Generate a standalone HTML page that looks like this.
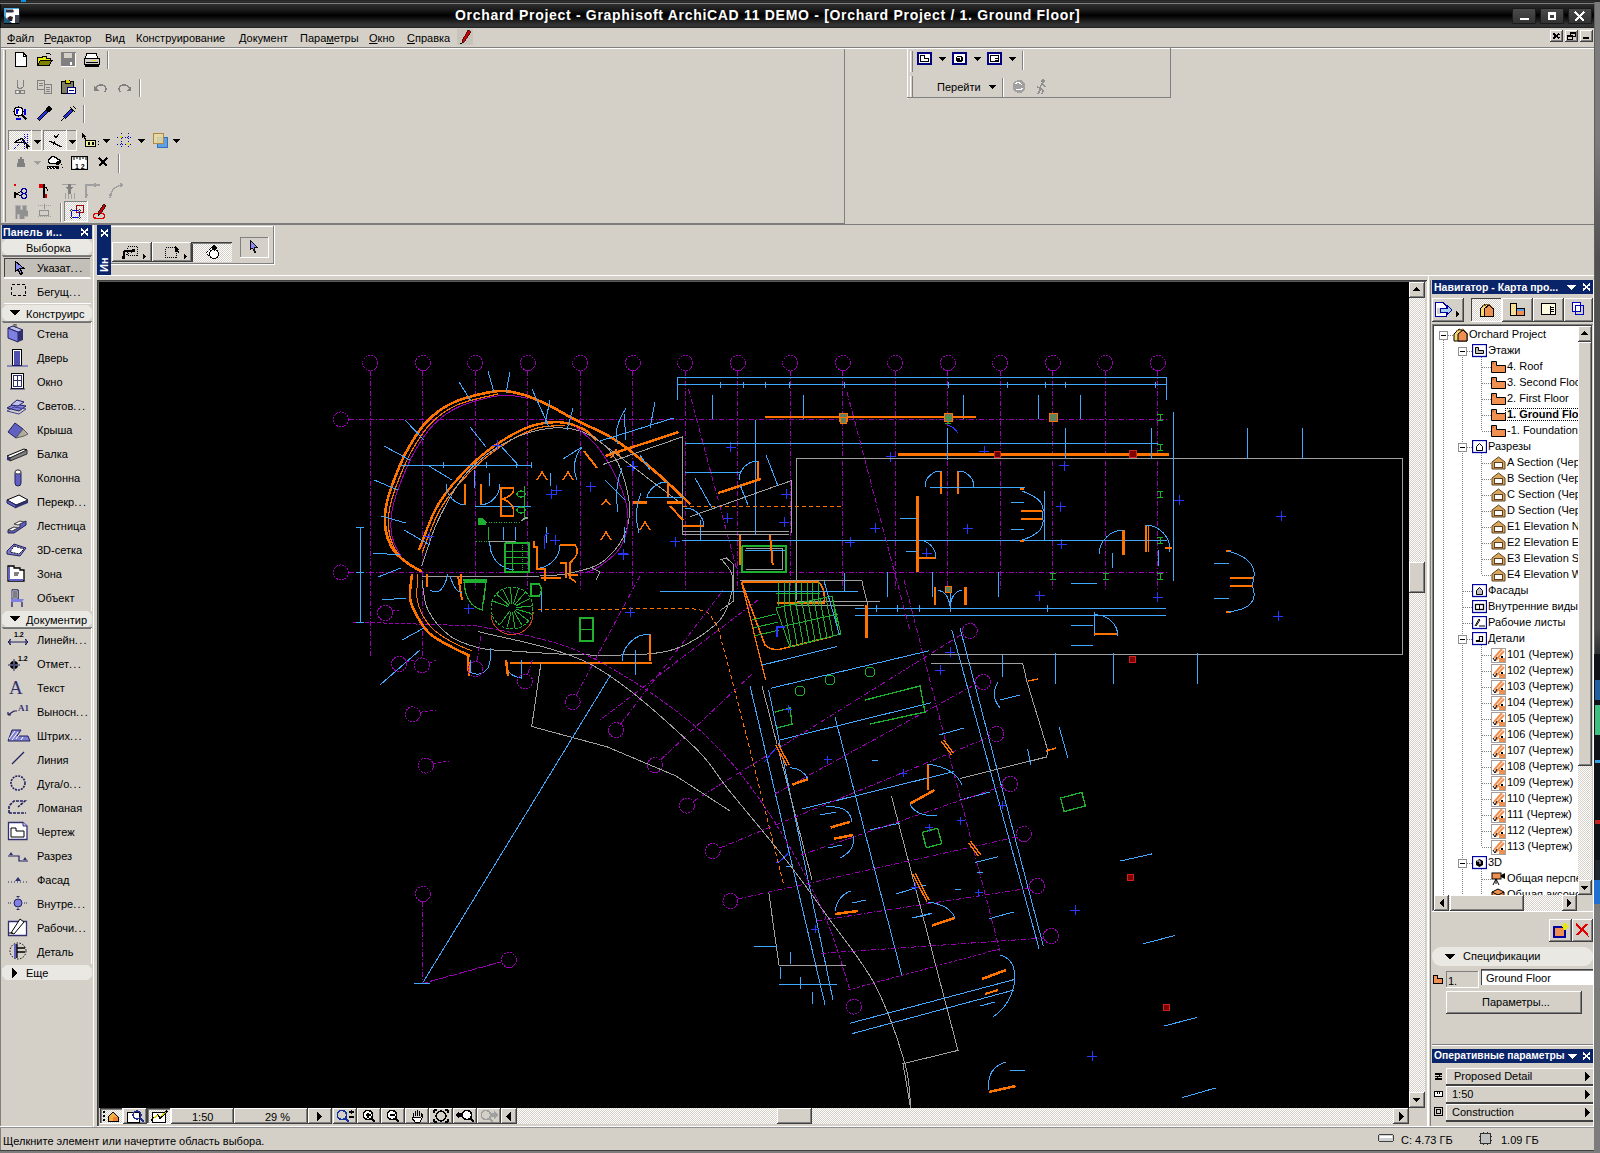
<!DOCTYPE html>
<html><head><meta charset="utf-8">
<style>
*{box-sizing:border-box;margin:0;padding:0}
html,body{width:1600px;height:1153px;overflow:hidden;background:#d4d0c8;font-family:"Liberation Sans",sans-serif;font-size:11px;color:#000;position:relative}
.a{position:absolute}
.t{position:absolute;white-space:nowrap;line-height:1}
u{text-decoration:underline;text-underline-offset:1px}
</style></head><body>
<div class="a" style="left:0px;top:0px;width:1600px;height:4px;background:#262626;"></div>
<div class="a" style="left:0px;top:1px;width:1594px;height:1px;background:#333;"></div>
<div class="a" style="left:0px;top:3px;width:1594px;height:1px;background:#7e8080;"></div>
<div class="a" style="left:0px;top:4px;width:1594px;height:24px;background:linear-gradient(#2e2e2e 0%,#1a1a1a 25%,#000 47%,#111 60%,#222 72%,#333 85%,#333 94%,#1a1a1a 100%);"></div>
<div class="t" id="title" style="left:455px;top:8px;font-size:14px;letter-spacing:0.7px;font-weight:bold;color:#fff">Orchard Project - Graphisoft ArchiCAD 11 DEMO - [Orchard Project / 1. Ground Floor]</div>
<svg class="a" style="left:4px;top:8px;" width="16" height="16" viewBox="0 0 16 16"><rect x="0" y="0" width="16" height="16" fill="#fff"/><path d="M0 0H16L15 1H2V12L10 16H0Z" fill="#4aa8e0"/><path d="M0 8L9 16H0Z" fill="#1a5a80"/><path d="M2 1.5H9L10 3.5L8.5 4.5H2Z" fill="#303040"/><path d="M3 10L6 8L9 9L8 13L5 13Z" fill="#302028"/><rect x="11" y="7" width="4" height="9" fill="#404a54"/><rect x="0" y="15" width="16" height="1" fill="#000"/><rect x="15" y="0" width="1" height="16" fill="#222"/></svg>
<div class="a" style="left:21px;top:0px;width:5px;height:2px;background:#1090e0;"></div>
<div class="a" style="left:1512px;top:8px;width:24px;height:16px;background:linear-gradient(#4a4a4a,#333);border:1px solid #1a1a1a;border-radius:1px"></div>
<div class="a" style="left:1540px;top:8px;width:24px;height:16px;background:linear-gradient(#4a4a4a,#333);border:1px solid #1a1a1a;border-radius:1px"></div>
<div class="a" style="left:1568px;top:8px;width:24px;height:16px;background:linear-gradient(#4a4a4a,#333);border:1px solid #1a1a1a;border-radius:1px"></div>
<div class="a" style="left:1520px;top:18px;width:9px;height:2px;background:#fff;"></div>
<div class="a" style="left:1548px;top:12px;width:8px;height:8px;background:transparent;border:2px solid #fff;border-top-width:3px"></div>
<svg class="a" style="left:1574px;top:11px;" width="12" height="11" viewBox="0 0 12 11" shape-rendering="crispEdges"><path d="M1 1L10 10M10 1L1 10" stroke="#fff" stroke-width="2.4"/></svg>
<div class="a" style="left:1594px;top:2px;width:6px;height:1151px;background:#7c7c7c;"></div>
<div class="a" style="left:1594px;top:140px;width:6px;height:514px;background:linear-gradient(#7c7c7c 0%,#505050 23%,#4e4e4e 95%,#303030 100%);"></div>
<div class="a" style="left:1594px;top:2px;width:1px;height:652px;background:#5e5e5e;"></div>
<div class="a" style="left:0px;top:1150px;width:1594px;height:1px;background:#404040;"></div>
<div class="a" style="left:0px;top:1151px;width:1600px;height:2px;background:#7c7c7c;"></div>
<div class="a" style="left:0px;top:4px;width:1px;height:24px;background:#0a0a0a;"></div>
<div class="a" style="left:0px;top:28px;width:1px;height:1122px;background:#808080;"></div>
<div class="a" style="left:1px;top:28px;width:1593px;height:19px;background:#d4d0c8;"></div>
<div class="t menu" style="left:7px;top:33px;font-size:11px"><u>Ф</u>айл</div>
<div class="t menu" style="left:44px;top:33px;font-size:11px"><u>Р</u>едактор</div>
<div class="t menu" style="left:105px;top:33px;font-size:11px">Вид</div>
<div class="t menu" style="left:136px;top:33px;font-size:11px">Конструирование</div>
<div class="t menu" style="left:239px;top:33px;font-size:11px">Документ</div>
<div class="t menu" style="left:300px;top:33px;font-size:11px">Пара<u>м</u>етры</div>
<div class="t menu" style="left:369px;top:33px;font-size:11px"><u>О</u>кно</div>
<div class="t menu" style="left:407px;top:33px;font-size:11px"><u>С</u>правка</div>
<div class="a" style="left:457px;top:29px;width:16px;height:16px;background:#c8c4bc;"></div>
<svg class="a" style="left:458px;top:30px;" width="14" height="14" viewBox="0 0 14 14" shape-rendering="crispEdges"><path d="M10 0 L13 2 L6 12 L4 13 L4 11 Z" fill="#d00000" stroke="#300" stroke-width="0.8"/><path d="M4 13 L2 14" stroke="#000"/></svg>
<div class="a" style="left:1550px;top:30px;width:13px;height:12px;background:#d4d0c8;"></div>
<div class="a" style="left:1550px;top:30px;width:13px;height:1px;background:#fff;"></div>
<div class="a" style="left:1550px;top:30px;width:1px;height:12px;background:#fff;"></div>
<div class="a" style="left:1550px;top:41px;width:13px;height:1px;background:#404040;"></div>
<div class="a" style="left:1562px;top:30px;width:1px;height:12px;background:#404040;"></div>
<div class="a" style="left:1551px;top:40px;width:11px;height:1px;background:#808080;"></div>
<div class="a" style="left:1561px;top:31px;width:1px;height:10px;background:#808080;"></div>
<div class="a" style="left:1565px;top:30px;width:13px;height:12px;background:#d4d0c8;"></div>
<div class="a" style="left:1565px;top:30px;width:13px;height:1px;background:#fff;"></div>
<div class="a" style="left:1565px;top:30px;width:1px;height:12px;background:#fff;"></div>
<div class="a" style="left:1565px;top:41px;width:13px;height:1px;background:#404040;"></div>
<div class="a" style="left:1577px;top:30px;width:1px;height:12px;background:#404040;"></div>
<div class="a" style="left:1566px;top:40px;width:11px;height:1px;background:#808080;"></div>
<div class="a" style="left:1576px;top:31px;width:1px;height:10px;background:#808080;"></div>
<div class="a" style="left:1580px;top:30px;width:13px;height:12px;background:#d4d0c8;"></div>
<div class="a" style="left:1580px;top:30px;width:13px;height:1px;background:#fff;"></div>
<div class="a" style="left:1580px;top:30px;width:1px;height:12px;background:#fff;"></div>
<div class="a" style="left:1580px;top:41px;width:13px;height:1px;background:#404040;"></div>
<div class="a" style="left:1592px;top:30px;width:1px;height:12px;background:#404040;"></div>
<div class="a" style="left:1581px;top:40px;width:11px;height:1px;background:#808080;"></div>
<div class="a" style="left:1591px;top:31px;width:1px;height:10px;background:#808080;"></div>
<svg class="a" style="left:1553px;top:33px;" width="7" height="6" viewBox="0 0 7 6" shape-rendering="crispEdges"><path d="M0.5 0.5L6.5 5.5M6.5 0.5L0.5 5.5" stroke="#000" stroke-width="1.8"/></svg>
<svg class="a" style="left:1567px;top:32px;" width="9" height="8" viewBox="0 0 9 8" shape-rendering="crispEdges"><rect x="3.5" y="0.5" width="5" height="4" fill="none" stroke="#000"/><rect x="3.5" y="0.5" width="5" height="1.5" fill="#000"/><rect x="0.5" y="3.5" width="5" height="4" fill="#d4d0c8" stroke="#000"/><rect x="0.5" y="3.5" width="5" height="1.5" fill="#000"/></svg>
<div class="a" style="left:1583px;top:37px;width:6px;height:2px;background:#000;"></div>
<div class="a" style="left:1px;top:47px;width:1593px;height:1px;background:#808080;"></div>
<div class="a" style="left:1px;top:48px;width:1593px;height:1px;background:#fff;"></div>
<div class="a" style="left:844px;top:49px;width:1px;height:175px;background:#808080;"></div>
<div class="a" style="left:3px;top:50px;width:1px;height:172px;background:#fff;"></div>
<div class="a" style="left:5px;top:50px;width:1px;height:172px;background:#808080;"></div>
<svg class="a" style="left:15px;top:52px;" width="12" height="15" viewBox="0 0 12 15" shape-rendering="crispEdges"><path d="M0.5 0.5H8L11.5 4V14.5H0.5Z" fill="#fff" stroke="#000"/><path d="M8 0.5V4H11.5" fill="none" stroke="#000"/></svg>
<svg class="a" style="left:37px;top:52px;" width="16" height="15" viewBox="0 0 16 15" shape-rendering="crispEdges"><path d="M0.5 5.5H5L6 4H9V6H14L11 13.5H0.5Z" fill="#e8e800" stroke="#000"/><path d="M0.5 13.5L3.5 8H15.5L12 13.5Z" fill="#808000" stroke="#000"/><path d="M9 2 Q12 0 14 3" stroke="#000" fill="none"/></svg>
<svg class="a" style="left:61px;top:52px;" width="15" height="15" viewBox="0 0 15 15" shape-rendering="crispEdges"><rect x="0" y="0" width="15" height="15" fill="#808080"/><rect x="3" y="1" width="8" height="5" fill="#d4d0c8"/><rect x="9" y="10" width="2" height="3" fill="#fff"/><rect x="14" y="1" width="1" height="14" fill="#fff"/><rect x="0" y="14" width="15" height="1" fill="#fff"/></svg>
<svg class="a" style="left:84px;top:53px;" width="16" height="14" viewBox="0 0 16 14" shape-rendering="crispEdges"><path d="M3 0.5H12L14 5H1Z" fill="#fff" stroke="#000"/><rect x="0.5" y="5.5" width="15" height="6" fill="#d4d0c8" stroke="#000"/><rect x="2" y="9" width="12" height="1" fill="#000"/><rect x="9" y="7" width="3" height="1" fill="#e0e000"/><rect x="1" y="12" width="14" height="2" fill="#000"/></svg>
<div class="a" style="left:107px;top:51px;width:1px;height:18px;background:#808080;"></div>
<div class="a" style="left:108px;top:51px;width:1px;height:18px;background:#fff;"></div>
<svg class="a" style="left:15px;top:80px;" width="10" height="15" viewBox="0 0 10 15" shape-rendering="crispEdges"><path d="M2 0V7L5 9L8 7V0" stroke="#808080" fill="none"/><circle cx="2.5" cy="12" r="2" stroke="#808080" fill="none"/><circle cx="7.5" cy="12" r="2" stroke="#808080" fill="none"/><circle cx="2.5" cy="12" r="1" fill="#fff"/></svg>
<svg class="a" style="left:37px;top:80px;" width="16" height="14" viewBox="0 0 16 14" shape-rendering="crispEdges"><rect x="0.5" y="0.5" width="7" height="9" fill="#d4d0c8" stroke="#808080"/><rect x="7.5" y="4.5" width="7" height="9" fill="#d4d0c8" stroke="#808080"/><path d="M2 3H6M2 5H6M9 7H13M9 9H13M9 11H13" stroke="#808080"/></svg>
<svg class="a" style="left:61px;top:80px;" width="16" height="15" viewBox="0 0 16 15" shape-rendering="crispEdges"><rect x="0.5" y="1.5" width="12" height="12" fill="#808060" stroke="#000"/><path d="M4 1L6.5 -1L9 1V3H4Z" fill="#e0d000" stroke="#000"/><rect x="6.5" y="7.5" width="8" height="6" fill="#fff" stroke="#000080"/><path d="M8 10H13" stroke="#000080"/></svg>
<div class="a" style="left:83px;top:79px;width:1px;height:18px;background:#808080;"></div>
<div class="a" style="left:84px;top:79px;width:1px;height:18px;background:#fff;"></div>
<svg class="a" style="left:94px;top:84px;" width="13" height="8" viewBox="0 0 13 8" shape-rendering="crispEdges"><path d="M1 6 Q2 1 7 1 Q12 1 12 5 Q12 7 10 8" stroke="#808080" fill="none" stroke-width="1.5"/><path d="M0 2V7H5Z" fill="#808080"/></svg>
<svg class="a" style="left:118px;top:84px;" width="13" height="8" viewBox="0 0 13 8" shape-rendering="crispEdges"><path d="M12 6 Q11 1 6 1 Q1 1 1 5 Q1 7 3 8" stroke="#808080" fill="none" stroke-width="1.5"/><path d="M13 2V7H8Z" fill="#808080"/></svg>
<div class="a" style="left:139px;top:79px;width:1px;height:18px;background:#808080;"></div>
<div class="a" style="left:140px;top:79px;width:1px;height:18px;background:#fff;"></div>
<svg class="a" style="left:13px;top:106px;" width="15" height="15" viewBox="0 0 15 15" shape-rendering="crispEdges"><circle cx="5.5" cy="5.5" r="4.5" fill="#fff" stroke="#000" stroke-width="1.3"/><path d="M8.5 8.5L13.5 13.5" stroke="#000" stroke-width="2.2"/><path d="M4 3V8M3 4H6M12 3V9M3 13H8" stroke="#0000e0" stroke-width="1.3"/></svg>
<svg class="a" style="left:37px;top:106px;" width="15" height="15" viewBox="0 0 15 15" shape-rendering="crispEdges"><path d="M1 14L10 5" stroke="#000" stroke-width="3.5"/><path d="M1.5 13.5L9.5 5.5" stroke="#2030e0" stroke-width="2"/><circle cx="12" cy="3" r="2.6" fill="#000"/></svg>
<svg class="a" style="left:61px;top:106px;" width="15" height="15" viewBox="0 0 15 15" shape-rendering="crispEdges"><path d="M0 15L4 11" stroke="#000"/><path d="M3 12L11 4" stroke="#000" stroke-width="3.5"/><path d="M3.5 11.5L10.5 4.5" stroke="#2030e0" stroke-width="2"/><path d="M9 1L14 6M12 0L15 3" stroke="#000" stroke-width="1.3"/></svg>
<div class="a" style="left:83px;top:105px;width:1px;height:18px;background:#808080;"></div>
<div class="a" style="left:84px;top:105px;width:1px;height:18px;background:#fff;"></div>
<div class="a" style="left:8px;top:130px;width:24px;height:21px;background:repeating-conic-gradient(#fff 0% 25%, #d4d0c8 0% 50%) 0 0/2px 2px;"></div>
<div class="a" style="left:8px;top:130px;width:24px;height:1px;background:#808080;"></div>
<div class="a" style="left:8px;top:130px;width:1px;height:21px;background:#808080;"></div>
<div class="a" style="left:8px;top:150px;width:24px;height:1px;background:#fff;"></div>
<div class="a" style="left:31px;top:130px;width:1px;height:21px;background:#fff;"></div>
<div class="a" style="left:43px;top:130px;width:24px;height:21px;background:repeating-conic-gradient(#fff 0% 25%, #d4d0c8 0% 50%) 0 0/2px 2px;"></div>
<div class="a" style="left:43px;top:130px;width:24px;height:1px;background:#808080;"></div>
<div class="a" style="left:43px;top:130px;width:1px;height:21px;background:#808080;"></div>
<div class="a" style="left:43px;top:150px;width:24px;height:1px;background:#fff;"></div>
<div class="a" style="left:66px;top:130px;width:1px;height:21px;background:#fff;"></div>
<div class="a" style="left:32px;top:130px;width:10px;height:1px;background:#808080;"></div>
<div class="a" style="left:32px;top:130px;width:1px;height:21px;background:#808080;"></div>
<div class="a" style="left:32px;top:150px;width:10px;height:1px;background:#fff;"></div>
<div class="a" style="left:41px;top:130px;width:1px;height:21px;background:#fff;"></div>
<div class="a" style="left:67px;top:130px;width:10px;height:1px;background:#808080;"></div>
<div class="a" style="left:67px;top:130px;width:1px;height:21px;background:#808080;"></div>
<div class="a" style="left:67px;top:150px;width:10px;height:1px;background:#fff;"></div>
<div class="a" style="left:76px;top:130px;width:1px;height:21px;background:#fff;"></div>
<div class="a" style="left:32px;top:131px;width:9px;height:19px;background:#d4d0c8;"></div>
<div class="a" style="left:67px;top:131px;width:9px;height:19px;background:#d4d0c8;"></div>
<div class="a" style="left:33px;top:131px;width:8px;height:19px;background:#d4d0c8;"></div>
<svg class="a" style="left:34px;top:140px;" width="7" height="4" viewBox="0 0 7 4" shape-rendering="crispEdges"><path d="M0 0H7L3.5 4Z" fill="#000"/></svg>
<svg class="a" style="left:69px;top:140px;" width="7" height="4" viewBox="0 0 7 4" shape-rendering="crispEdges"><path d="M0 0H7L3.5 4Z" fill="#000"/></svg>
<svg class="a" style="left:13px;top:134px;" width="17" height="16" viewBox="0 0 17 16" shape-rendering="crispEdges"><path d="M2 8L9 4L12 9Z" fill="none" stroke="#000" stroke-width="1.2"/><path d="M1 15L14 2" stroke="#0000e0" stroke-dasharray="1 1"/><path d="M11 0V16M14 0V16" stroke="#0000e0" stroke-dasharray="1 1"/><path d="M12 8L16 12L13 12L15 15" fill="#000" stroke="#000"/></svg>
<svg class="a" style="left:48px;top:134px;" width="15" height="14" viewBox="0 0 15 14" shape-rendering="crispEdges"><path d="M6 1L8 4L11 0" stroke="#000" fill="none"/><path d="M1 7L14 13" stroke="#000" stroke-width="1.2"/><path d="M7 7L5 11" stroke="#000"/></svg>
<svg class="a" style="left:82px;top:133px;" width="17" height="15" viewBox="0 0 17 15" shape-rendering="crispEdges"><path d="M0 0V5L1.5 4L3 7L4 6.5L2.5 3.5H4.5Z" fill="#000"/><rect x="3.5" y="7.5" width="10" height="6" fill="#f0f0a0" stroke="#000"/><path d="M6 9.5L8 11.5M8 9.5L6 11.5M10 9.5L12 11.5M12 9.5L10 11.5" stroke="#000"/><path d="M16 8V9M16 11V12" stroke="#000"/></svg>
<svg class="a" style="left:103px;top:139px;" width="7" height="4" viewBox="0 0 7 4" shape-rendering="crispEdges"><path d="M0 0H7L3.5 4Z" fill="#000"/></svg>
<svg class="a" style="left:117px;top:133px;" width="15" height="15" viewBox="0 0 15 15" shape-rendering="crispEdges"><path d="M0 4H15M0 11H15M4 0V15M11 0V15" stroke="#0000c0" stroke-dasharray="1 1.5"/><rect x="3" y="3" width="2" height="2" fill="#e0e000"/><rect x="10" y="10" width="2" height="2" fill="#e0e000"/></svg>
<svg class="a" style="left:138px;top:139px;" width="7" height="4" viewBox="0 0 7 4" shape-rendering="crispEdges"><path d="M0 0H7L3.5 4Z" fill="#000"/></svg>
<svg class="a" style="left:153px;top:133px;" width="15" height="15" viewBox="0 0 15 15" shape-rendering="crispEdges"><rect x="4.5" y="4.5" width="10" height="10" fill="#60a0e0" stroke="#3070c0"/><rect x="0.5" y="0.5" width="10" height="10" fill="#e8d8a0" fill-opacity="0.85" stroke="#b08840"/></svg>
<svg class="a" style="left:173px;top:139px;" width="7" height="4" viewBox="0 0 7 4" shape-rendering="crispEdges"><path d="M0 0H7L3.5 4Z" fill="#000"/></svg>
<svg class="a" style="left:17px;top:157px;" width="8" height="10" viewBox="0 0 8 10" shape-rendering="crispEdges"><path d="M3 0H5V2H3Z M1 2H7L8 10H0Z" fill="#808080"/></svg>
<svg class="a" style="left:34px;top:161px;" width="7" height="4" viewBox="0 0 7 4" shape-rendering="crispEdges"><path d="M0 0H7L3.5 4Z" fill="#a0a0a0"/></svg>
<svg class="a" style="left:47px;top:155px;" width="16" height="15" viewBox="0 0 16 15" shape-rendering="crispEdges"><path d="M1 5L6 1L14 6L12 9L2 8Z" fill="#fff" stroke="#000" stroke-width="1.2"/><path d="M0 11H12V14H0Z" fill="#000"/><path d="M1 12L3 14M4 12L6 14M7 12L9 14" stroke="#fff"/><circle cx="11" cy="8" r="2" fill="#000"/><path d="M14 9V10M15 12V13" stroke="#000"/></svg>
<svg class="a" style="left:71px;top:156px;" width="17" height="14" viewBox="0 0 17 14"><rect x="0.5" y="0.5" width="16" height="13" fill="#fff" stroke="#000" stroke-width="1.2"/><path d="M3 1V4M6 1V3M9 1V4M12 1V3M15 1V4" stroke="#000"/><text x="4" y="12.5" font-size="7" font-family="Liberation Sans" font-weight="bold" fill="#000">1 2</text></svg>
<svg class="a" style="left:98px;top:157px;" width="10" height="10" viewBox="0 0 10 10" shape-rendering="crispEdges"><path d="M1 1L9 9M9 1L1 9" stroke="#000" stroke-width="2.4"/></svg>
<div class="a" style="left:118px;top:154px;width:1px;height:19px;background:#808080;"></div>
<div class="a" style="left:119px;top:154px;width:1px;height:19px;background:#fff;"></div>
<svg class="a" style="left:14px;top:183px;" width="14" height="16" viewBox="0 0 14 16" shape-rendering="crispEdges"><path d="M1 1V3" stroke="#e00000" stroke-width="1.5"/><path d="M1 9V15" stroke="#000" stroke-width="2"/><path d="M2 11L8 8M2 11L8 13" stroke="#000"/><circle cx="10" cy="8" r="2.5" fill="none" stroke="#0000a0" stroke-width="1.3"/><circle cx="10" cy="13" r="2.5" fill="none" stroke="#0000a0" stroke-width="1.3"/></svg>
<svg class="a" style="left:38px;top:183px;" width="12" height="16" viewBox="0 0 12 16" shape-rendering="crispEdges"><path d="M1 1H6V5H1Z" fill="#e00000"/><path d="M6 1V15" stroke="#000" stroke-width="1.5"/><path d="M7 4 Q10 5 9 8" stroke="#000" fill="none"/><path d="M8 11V15" stroke="#c00" stroke-width="1.5"/></svg>
<svg class="a" style="left:62px;top:183px;" width="14" height="16" viewBox="0 0 14 16" shape-rendering="crispEdges"><path d="M0 1H14" stroke="#a0a0a0"/><path d="M7 1V11" stroke="#808080" stroke-width="3"/><path d="M3 4H11L7 8Z" fill="#808080"/><path d="M3 10V16M6 11V16M9 11V16M12 10V16" stroke="#a0a0a0"/></svg>
<svg class="a" style="left:85px;top:183px;" width="16" height="16" viewBox="0 0 16 16" shape-rendering="crispEdges"><path d="M1 15V2H15M10 0V4M0 12H3" stroke="#a0a0a0" stroke-width="1.3" fill="none"/></svg>
<svg class="a" style="left:109px;top:183px;" width="16" height="16" viewBox="0 0 16 16" shape-rendering="crispEdges"><path d="M1 15 Q2 3 14 2M12 0V4M0 12H3" stroke="#a0a0a0" stroke-width="1.3" fill="none"/></svg>
<svg class="a" style="left:14px;top:203px;" width="14" height="16" viewBox="0 0 14 16" shape-rendering="crispEdges"><path d="M1 2H6V6H8V2H12V7H14V13H10V16H5V11H3V16H1Z" fill="#909090" stroke="#b0b0b0"/></svg>
<svg class="a" style="left:38px;top:204px;" width="14" height="14" viewBox="0 0 14 14" shape-rendering="crispEdges"><path d="M0 1H14M0 12H14" stroke="#a0a0a0" stroke-dasharray="1 1"/><rect x="1.5" y="6.5" width="9" height="5" fill="#d4d0c8" stroke="#909090"/><path d="M6 0V5" stroke="#909090"/></svg>
<div class="a" style="left:60px;top:203px;width:1px;height:19px;background:#808080;"></div>
<div class="a" style="left:61px;top:203px;width:1px;height:19px;background:#fff;"></div>
<div class="a" style="left:64px;top:201px;width:24px;height:21px;background:repeating-conic-gradient(#fff 0% 25%, #d4d0c8 0% 50%) 0 0/2px 2px;"></div>
<div class="a" style="left:64px;top:201px;width:24px;height:1px;background:#808080;"></div>
<div class="a" style="left:64px;top:201px;width:1px;height:21px;background:#808080;"></div>
<div class="a" style="left:64px;top:221px;width:24px;height:1px;background:#fff;"></div>
<div class="a" style="left:87px;top:201px;width:1px;height:21px;background:#fff;"></div>
<svg class="a" style="left:70px;top:205px;" width="14" height="14" viewBox="0 0 14 14" shape-rendering="crispEdges"><rect x="6.5" y="0.5" width="7" height="7" fill="none" stroke="#a00000" stroke-width="1.3"/><rect x="1.5" y="5.5" width="8" height="7" fill="none" stroke="#0000ff" stroke-width="1.3"/><circle cx="1.5" cy="5.5" r="1.3" fill="#fff" stroke="#000" stroke-width="0.8"/><circle cx="9.5" cy="5.5" r="1.3" fill="#fff" stroke="#000" stroke-width="0.8"/><circle cx="1.5" cy="12.5" r="1.3" fill="#fff" stroke="#000" stroke-width="0.8"/><circle cx="9.5" cy="12.5" r="1.3" fill="#fff" stroke="#000" stroke-width="0.8"/></svg>
<svg class="a" style="left:92px;top:203px;" width="15" height="17" viewBox="0 0 15 17" shape-rendering="crispEdges"><ellipse cx="7" cy="13" rx="6" ry="2.6" fill="none" stroke="#e00000" stroke-width="1.2"/><path d="M6 13L7 8L12 1L14 3L9 10Z" fill="#d00000" stroke="#000" stroke-width="0.8"/></svg>
<div class="a" style="left:1px;top:223px;width:844px;height:2px;background:#7c7c7c;"></div>
<div class="a" style="left:845px;top:224px;width:749px;height:1px;background:#7c7c7c;"></div>
<div class="a" style="left:907px;top:48px;width:264px;height:1px;background:#fff;"></div>
<div class="a" style="left:907px;top:48px;width:1px;height:51px;background:#fff;"></div>
<div class="a" style="left:907px;top:97px;width:264px;height:1px;background:#808080;"></div>
<div class="a" style="left:1170px;top:48px;width:1px;height:50px;background:#808080;"></div>
<div class="a" style="left:910px;top:51px;width:1px;height:21px;background:#fff;"></div>
<div class="a" style="left:912px;top:51px;width:1px;height:21px;background:#808080;"></div>
<svg class="a" style="left:917px;top:52px;" width="15" height="13" viewBox="0 0 15 13" shape-rendering="crispEdges"><rect x="0.5" y="0.5" width="14" height="12" fill="#fff" stroke="#000080"/><rect x="1.5" y="1.5" width="12" height="10" fill="none" stroke="#000080"/></svg>
<svg class="a" style="left:952px;top:52px;" width="15" height="13" viewBox="0 0 15 13" shape-rendering="crispEdges"><rect x="0.5" y="0.5" width="14" height="12" fill="#fff" stroke="#000080"/><rect x="1.5" y="1.5" width="12" height="10" fill="none" stroke="#000080"/></svg>
<svg class="a" style="left:987px;top:52px;" width="15" height="13" viewBox="0 0 15 13" shape-rendering="crispEdges"><rect x="0.5" y="0.5" width="14" height="12" fill="#fff" stroke="#000080"/><rect x="1.5" y="1.5" width="12" height="10" fill="none" stroke="#000080"/></svg>
<svg class="a" style="left:920px;top:55px;" width="9" height="7" viewBox="0 0 9 7" shape-rendering="crispEdges"><path d="M0.5 0.5H4V3.5H8.5V6.5H0.5Z" fill="none" stroke="#000"/></svg>
<svg class="a" style="left:955px;top:55px;" width="9" height="8" viewBox="0 0 9 8" shape-rendering="crispEdges"><circle cx="4.5" cy="4" r="3.5" fill="#000"/><path d="M2 3 L5 2 L6 5" stroke="#fff" fill="none"/></svg>
<svg class="a" style="left:990px;top:55px;" width="9" height="7" viewBox="0 0 9 7" shape-rendering="crispEdges"><rect x="0.5" y="0.5" width="8" height="6" fill="none" stroke="#000"/><path d="M5 3H8M5 5H8" stroke="#000"/></svg>
<svg class="a" style="left:939px;top:57px;" width="7" height="4" viewBox="0 0 7 4" shape-rendering="crispEdges"><path d="M0 0H7L3.5 4Z" fill="#000"/></svg>
<svg class="a" style="left:974px;top:57px;" width="7" height="4" viewBox="0 0 7 4" shape-rendering="crispEdges"><path d="M0 0H7L3.5 4Z" fill="#000"/></svg>
<svg class="a" style="left:1009px;top:57px;" width="7" height="4" viewBox="0 0 7 4" shape-rendering="crispEdges"><path d="M0 0H7L3.5 4Z" fill="#000"/></svg>
<div class="a" style="left:1022px;top:51px;width:1px;height:19px;background:#808080;"></div>
<div class="a" style="left:1023px;top:51px;width:1px;height:19px;background:#fff;"></div>
<div class="a" style="left:910px;top:76px;width:1px;height:21px;background:#fff;"></div>
<div class="a" style="left:912px;top:76px;width:1px;height:21px;background:#808080;"></div>
<div class="t" style="left:937px;top:82px;font-size:11px;color:#000;">Перейти</div>
<svg class="a" style="left:989px;top:85px;" width="7" height="4" viewBox="0 0 7 4" shape-rendering="crispEdges"><path d="M0 0H7L3.5 4Z" fill="#000"/></svg>
<div class="a" style="left:1002px;top:78px;width:1px;height:19px;background:#808080;"></div>
<div class="a" style="left:1003px;top:78px;width:1px;height:19px;background:#fff;"></div>
<svg class="a" style="left:1011px;top:79px;" width="16" height="15" viewBox="0 0 16 15" shape-rendering="crispEdges"><circle cx="8" cy="7.5" r="6.5" fill="#a0a0a0"/><path d="M4 5 Q8 2 11 6 M5 10 Q8 12 12 9" stroke="#fff" fill="none" stroke-width="1.3"/></svg>
<svg class="a" style="left:1036px;top:79px;" width="12" height="16" viewBox="0 0 12 16" shape-rendering="crispEdges"><circle cx="7" cy="2" r="1.7" fill="#909090"/><path d="M6 4L4 9L1 8M6 4L9 8M5 9L7 12L6 15M5 9L2 15" stroke="#909090" stroke-width="1.6" fill="none"/></svg>
<div class="a" style="left:2px;top:225px;width:90px;height:14px;background:#0a246a;"></div>
<div class="t" style="left:3px;top:227px;font-size:10.5px;color:#fff;font-weight:bold;letter-spacing:0.2px">Панель и...</div>
<svg class="a" style="left:80px;top:228px;" width="9" height="8" viewBox="0 0 9 8" shape-rendering="crispEdges"><path d="M1 1L8 7M8 1L1 7" stroke="#fff" stroke-width="1.8"/></svg>
<div class="a" style="left:2px;top:239px;width:90px;height:16px;background:#e9e8e3;clip-path:polygon(4px 0,calc(100% - 4px) 0,100% 4px,100% calc(100% - 4px),calc(100% - 4px) 100%,4px 100%,0 calc(100% - 4px),0 4px)"></div>
<div class="a" style="left:2px;top:255px;width:90px;height:1px;background:#808080;"></div>
<div class="a" style="left:3px;top:256px;width:88px;height:1px;background:#707070;"></div>
<div class="t" style="left:26px;top:243px;font-size:11px;color:#000;">Выборка</div>
<div class="a" style="left:4px;top:258px;width:86px;height:20px;background:#c2bfb8;"></div>
<div class="a" style="left:4px;top:258px;width:86px;height:1px;background:#404040;"></div>
<div class="a" style="left:4px;top:258px;width:1px;height:20px;background:#404040;"></div>
<div class="a" style="left:4px;top:277px;width:86px;height:1px;background:#fff;"></div>
<svg class="a" style="left:14px;top:260px;" width="12" height="16" viewBox="0 0 12 16" shape-rendering="crispEdges"><path d="M1 1V12L4 9.5L6.5 14.5L8.5 13.5L6 8.5H10Z" fill="#8c8cf0" stroke="#000" stroke-width="1"/></svg>
<div class="t" style="left:37px;top:263px;font-size:11px;color:#000;">Указат<span style="letter-spacing:1.3px">...</span></div>
<div class="a" style="left:4px;top:278px;width:87px;height:1px;background:#fff;"></div>
<svg class="a" style="left:11px;top:284px;" width="15" height="12" viewBox="0 0 15 12" shape-rendering="crispEdges"><rect x="0.5" y="0.5" width="14" height="11" fill="none" stroke="#000" stroke-width="1.2" stroke-dasharray="3 2"/></svg>
<div class="t" style="left:37px;top:287px;font-size:11px;color:#000;">Бегущ<span style="letter-spacing:1.3px">...</span></div>
<div class="a" style="left:4px;top:303px;width:87px;height:1px;background:#fff;"></div>
<div class="a" style="left:2px;top:305px;width:90px;height:16px;background:#e9e8e3;clip-path:polygon(4px 0,calc(100% - 4px) 0,100% 4px,100% calc(100% - 4px),calc(100% - 4px) 100%,4px 100%,0 calc(100% - 4px),0 4px)"></div>
<div class="a" style="left:2px;top:321px;width:90px;height:1px;background:#808080;"></div>
<div class="a" style="left:3px;top:322px;width:88px;height:1px;background:#707070;"></div>
<svg class="a" style="left:10px;top:310px;" width="10" height="6" viewBox="0 0 10 6" shape-rendering="crispEdges"><path d="M0 0H10L5 6Z" fill="#000"/></svg>
<div class="t" style="left:26px;top:309px;font-size:11px;color:#000;">Конструирс</div>
<div class="t" style="left:37px;top:329px;font-size:11px;color:#000;">Стена</div>
<div class="t" style="left:37px;top:353px;font-size:11px;color:#000;">Дверь</div>
<div class="t" style="left:37px;top:377px;font-size:11px;color:#000;">Окно</div>
<div class="t" style="left:37px;top:401px;font-size:11px;color:#000;">Светов<span style="letter-spacing:1.3px">...</span></div>
<div class="t" style="left:37px;top:425px;font-size:11px;color:#000;">Крыша</div>
<div class="t" style="left:37px;top:449px;font-size:11px;color:#000;">Балка</div>
<div class="t" style="left:37px;top:473px;font-size:11px;color:#000;">Колонна</div>
<div class="t" style="left:37px;top:497px;font-size:11px;color:#000;">Перекр<span style="letter-spacing:1.3px">...</span></div>
<div class="t" style="left:37px;top:521px;font-size:11px;color:#000;">Лестница</div>
<div class="t" style="left:37px;top:545px;font-size:11px;color:#000;">3D-сетка</div>
<div class="t" style="left:37px;top:569px;font-size:11px;color:#000;">Зона</div>
<div class="t" style="left:37px;top:593px;font-size:11px;color:#000;">Объект</div>
<div class="a" style="left:2px;top:611px;width:90px;height:16px;background:#e9e8e3;clip-path:polygon(4px 0,calc(100% - 4px) 0,100% 4px,100% calc(100% - 4px),calc(100% - 4px) 100%,4px 100%,0 calc(100% - 4px),0 4px)"></div>
<div class="a" style="left:2px;top:627px;width:90px;height:1px;background:#808080;"></div>
<div class="a" style="left:3px;top:628px;width:88px;height:1px;background:#707070;"></div>
<svg class="a" style="left:10px;top:616px;" width="10" height="6" viewBox="0 0 10 6" shape-rendering="crispEdges"><path d="M0 0H10L5 6Z" fill="#000"/></svg>
<div class="t" style="left:26px;top:615px;font-size:11px;color:#000;">Документир</div>
<div class="t" style="left:37px;top:635px;font-size:11px;color:#000;">Линейн<span style="letter-spacing:1.3px">...</span></div>
<div class="t" style="left:37px;top:659px;font-size:11px;color:#000;">Отмет<span style="letter-spacing:1.3px">...</span></div>
<div class="t" style="left:37px;top:683px;font-size:11px;color:#000;">Текст</div>
<div class="t" style="left:37px;top:707px;font-size:11px;color:#000;">Выносн<span style="letter-spacing:1.3px">...</span></div>
<div class="t" style="left:37px;top:731px;font-size:11px;color:#000;">Штрих<span style="letter-spacing:1.3px">...</span></div>
<div class="t" style="left:37px;top:755px;font-size:11px;color:#000;">Линия</div>
<div class="t" style="left:37px;top:779px;font-size:11px;color:#000;">Дуга/о<span style="letter-spacing:1.3px">...</span></div>
<div class="t" style="left:37px;top:803px;font-size:11px;color:#000;">Ломаная</div>
<div class="t" style="left:37px;top:827px;font-size:11px;color:#000;">Чертеж</div>
<div class="t" style="left:37px;top:851px;font-size:11px;color:#000;">Разрез</div>
<div class="t" style="left:37px;top:875px;font-size:11px;color:#000;">Фасад</div>
<div class="t" style="left:37px;top:899px;font-size:11px;color:#000;">Внутре<span style="letter-spacing:1.3px">...</span></div>
<div class="t" style="left:37px;top:923px;font-size:11px;color:#000;">Рабочи<span style="letter-spacing:1.3px">...</span></div>
<div class="t" style="left:37px;top:947px;font-size:11px;color:#000;">Деталь</div>
<div class="a" style="left:2px;top:965px;width:90px;height:15px;background:#e9e8e3;clip-path:polygon(4px 0,calc(100% - 4px) 0,100% 4px,100% calc(100% - 4px),calc(100% - 4px) 100%,4px 100%,0 calc(100% - 4px),0 4px)"></div>
<svg class="a" style="left:12px;top:968px;" width="6" height="10" viewBox="0 0 6 10" shape-rendering="crispEdges"><path d="M0 0V10L6 5Z" fill="#000"/></svg>
<div class="t" style="left:26px;top:968px;font-size:11px;color:#000;">Еще</div>
<div class="a" style="left:91px;top:322px;width:1px;height:289px;background:#fff;"></div>
<div class="a" style="left:91px;top:628px;width:1px;height:336px;background:#fff;"></div>
<div class="a" style="left:2px;top:322px;width:1px;height:289px;background:#d4d0c8;"></div>
<svg class="a" style="left:6px;top:324px;" width="24" height="20" viewBox="0 0 24 20"><path d="M2 4L12 8V18L2 14Z" fill="#8080e0" stroke="#202060"/><path d="M12 8L17 6V16L12 18Z" fill="#303070"/><path d="M2 4L7 2L17 6L12 8Z" fill="#c0c0f0" stroke="#202060"/><path d="M8 3V0H10V4" stroke="#404040" fill="none"/></svg>
<svg class="a" style="left:6px;top:348px;" width="24" height="20" viewBox="0 0 24 20"><rect x="6.5" y="1.5" width="9" height="16" fill="#fff" stroke="#000"/><rect x="8" y="3" width="6" height="14" fill="#5050b0"/><path d="M1 18H22" stroke="#4040a0"/></svg>
<svg class="a" style="left:6px;top:372px;" width="24" height="20" viewBox="0 0 24 20"><rect x="5.5" y="1.5" width="12" height="15" fill="#fff" stroke="#000"/><rect x="7" y="3" width="9" height="12" fill="#303070"/><rect x="8" y="4" width="3" height="4" fill="#fff"/><rect x="12" y="4" width="3" height="4" fill="#fff"/><rect x="8" y="9" width="3" height="5" fill="#fff"/><rect x="12" y="9" width="3" height="5" fill="#fff"/><path d="M4 17H19" stroke="#303070"/></svg>
<svg class="a" style="left:6px;top:396px;" width="24" height="20" viewBox="0 0 24 20"><path d="M1 12L8 8L20 10L13 15Z" fill="#8080e0" stroke="#202060"/><path d="M1 15L8 11L20 13L13 18Z" fill="none" stroke="#404090"/><path d="M5 9L11 4L18 6L12 10Z" fill="#c0c0f0" stroke="#202060"/></svg>
<svg class="a" style="left:6px;top:420px;" width="24" height="20" viewBox="0 0 24 20"><path d="M2 12L9 3L17 9L10 18Z" fill="#6060c0" stroke="#202060"/><path d="M10 18L17 9L22 14L18 16Z" fill="#b0aca0" stroke="#606060"/></svg>
<svg class="a" style="left:6px;top:444px;" width="24" height="20" viewBox="0 0 24 20"><path d="M1 12L18 5L21 6L4 14Z" fill="#fff" stroke="#000"/><path d="M1 12V16L4 17V14Z" fill="#303070"/><path d="M4 14V17L21 10V6Z" fill="#808080" stroke="#303030"/></svg>
<svg class="a" style="left:6px;top:468px;" width="24" height="20" viewBox="0 0 24 20"><rect x="9" y="2" width="6" height="16" rx="3" fill="#6060c0" stroke="#202060"/><ellipse cx="12" cy="4" rx="3" ry="2" fill="#fff" stroke="#404040"/></svg>
<svg class="a" style="left:6px;top:492px;" width="24" height="20" viewBox="0 0 24 20"><path d="M1 8L13 3L22 8L10 13Z" fill="#fff" stroke="#000"/><path d="M1 8V11L10 16V13Z" fill="#6060c0" stroke="#202060"/><path d="M10 13V16L22 11V8Z" fill="#303070"/></svg>
<svg class="a" style="left:6px;top:516px;" width="24" height="20" viewBox="0 0 24 20"><path d="M2 14L8 11V14L14 11V8L20 5V9L8 17L2 17Z" fill="#6060c0" stroke="#202060"/><path d="M2 14L8 11L12 12L6 15Z M8 8L14 5L18 6L12 9Z" fill="#fff" stroke="#404040"/></svg>
<svg class="a" style="left:6px;top:540px;" width="24" height="20" viewBox="0 0 24 20"><path d="M1 11L8 4L20 8L14 16L1 14Z" fill="#8080d0" stroke="#202060"/><path d="M8 6L18 9L13 14L4 12Z" fill="#fff" stroke="#000" stroke-dasharray="2 1"/></svg>
<svg class="a" style="left:6px;top:564px;" width="24" height="20" viewBox="0 0 24 20"><path d="M2 2H8V4H14V6H18V17H2Z" fill="#fff" stroke="#000" stroke-width="1.3"/><path d="M3 16H17M3 3V16" stroke="#6060c0" stroke-width="2"/><path d="M8 9H13M8 11H12" stroke="#000"/></svg>
<svg class="a" style="left:6px;top:588px;" width="24" height="20" viewBox="0 0 24 20"><path d="M6 2H12V11" stroke="#000" fill="none"/><rect x="6" y="2" width="6" height="9" fill="#fff" stroke="#303070"/><path d="M8 3V10M10 3V10" stroke="#000"/><path d="M5 11H18L16 14H5Z" fill="#8080e0"/><path d="M6 14V19M16 14V19" stroke="#202060" stroke-width="1.3"/></svg>
<svg class="a" style="left:6px;top:628px;" width="26" height="22" viewBox="0 0 26 22"><path d="M2 14H22" stroke="#202060"/><path d="M2 14L5 11M2 14L5 17M22 14L19 11M22 14L19 17M4 11V17M20 11V17" stroke="#202060"/><text x="8" y="9" font-size="7" font-family="Liberation Sans" font-weight="bold" fill="#000">1.2</text></svg>
<svg class="a" style="left:6px;top:652px;" width="26" height="22" viewBox="0 0 26 22"><circle cx="8" cy="13" r="4" fill="#000"/><path d="M8 9V17M4 13H12" stroke="#fff"/><path d="M8 7V19M2 13H14" stroke="#202060"/><text x="12" y="9" font-size="7" font-family="Liberation Sans" font-weight="bold" fill="#000">1.2</text></svg>
<svg class="a" style="left:6px;top:676px;" width="26" height="22" viewBox="0 0 26 22"><text x="3" y="18" font-size="19" font-family="Liberation Serif" fill="#303070">A</text></svg>
<svg class="a" style="left:6px;top:700px;" width="26" height="22" viewBox="0 0 26 22"><path d="M2 15L8 11M2 15V12M2 15H5M8 11H11" stroke="#202060" stroke-width="1.2" fill="none"/><text x="12" y="11" font-size="9" font-family="Liberation Serif" font-weight="bold" fill="#303070">A1</text></svg>
<svg class="a" style="left:6px;top:724px;" width="26" height="22" viewBox="0 0 26 22"><path d="M2 17L6 6H15L11 12H22L24 17Z" fill="#8080d0" stroke="#202060"/><path d="M3 15L9 7M6 16L12 8M10 15L13 11M15 16L17 13" stroke="#fff"/></svg>
<svg class="a" style="left:6px;top:748px;" width="26" height="22" viewBox="0 0 26 22"><path d="M6 16L18 4" stroke="#202060" stroke-width="1.3"/></svg>
<svg class="a" style="left:6px;top:772px;" width="26" height="22" viewBox="0 0 26 22"><circle cx="12" cy="11" r="7" fill="none" stroke="#202060" stroke-width="1.6" stroke-dasharray="2 1"/></svg>
<svg class="a" style="left:6px;top:796px;" width="26" height="22" viewBox="0 0 26 22"><path d="M3 17V10L8 5H19L12 11M3 17H20" stroke="#202060" stroke-width="1.6" fill="none" stroke-dasharray="3 1"/></svg>
<svg class="a" style="left:6px;top:820px;" width="26" height="22" viewBox="0 0 26 22"><path d="M2.5 2.5H17L21 6V19.5H2.5Z" fill="#fff" stroke="#303070" stroke-width="1.3"/><path d="M17 2V6H21" fill="#c0c0f0" stroke="#303070"/><path d="M5 8H10V11H18V17H5Z" fill="#fff" stroke="#000"/></svg>
<svg class="a" style="left:6px;top:844px;" width="26" height="22" viewBox="0 0 26 22"><path d="M2 12H13V17H22" stroke="#202060" stroke-width="1.2" fill="none"/><path d="M3 11L5 8L7 11Z M17 16L19 13L21 16Z" fill="#303070"/></svg>
<svg class="a" style="left:6px;top:868px;" width="26" height="22" viewBox="0 0 26 22"><path d="M2 14H22" stroke="#202060" stroke-dasharray="1 2"/><path d="M9 13L12 9L15 13Z" fill="#303070"/></svg>
<svg class="a" style="left:6px;top:892px;" width="26" height="22" viewBox="0 0 26 22"><circle cx="12" cy="11" r="4" fill="#8080e0" stroke="#202060"/><path d="M2 11H6M18 11H22" stroke="#202060" stroke-dasharray="1 1"/><path d="M10 18L12 16L14 18Z M10 4L12 6L14 4Z" fill="#303070"/></svg>
<svg class="a" style="left:6px;top:916px;" width="26" height="22" viewBox="0 0 26 22"><path d="M2.5 5.5H20.5V19.5H2.5Z" fill="#fff" stroke="#303070" stroke-width="1.3"/><path d="M5 17L14 3L18 6L8 18Z" fill="#fff" stroke="#000"/><path d="M3 17H7" stroke="#000"/></svg>
<svg class="a" style="left:6px;top:940px;" width="26" height="22" viewBox="0 0 26 22"><circle cx="12" cy="11" r="8" fill="none" stroke="#000" stroke-dasharray="1.5 1.5"/><rect x="8" y="4" width="3" height="14" fill="#6060c0"/><path d="M11 8H19M11 12H19M11 4V18" stroke="#000" stroke-width="1.3"/></svg>
<div class="a" style="left:0px;top:1126px;width:93px;height:1px;background:#fff;"></div>
<div class="a" style="left:92px;top:225px;width:1px;height:905px;background:#d4d0c8;"></div>
<div class="a" style="left:93px;top:225px;width:1px;height:905px;background:#fff;"></div>
<div class="a" style="left:94px;top:225px;width:1px;height:905px;background:#d4d0c8;"></div>
<div class="a" style="left:97px;top:225px;width:14px;height:50px;background:#0a246a;"></div>
<svg class="a" style="left:100px;top:229px;" width="9" height="8" viewBox="0 0 9 8" shape-rendering="crispEdges"><path d="M1 1L8 7M8 1L1 7" stroke="#fff" stroke-width="1.8"/></svg>
<svg class="a" style="left:98px;top:257px;" width="12" height="16" viewBox="0 0 12 16" shape-rendering="crispEdges"><text transform="rotate(-90 6 8)" x="-1" y="12" font-size="11" font-family="Liberation Sans" font-weight="bold" fill="#fff">Ин</text></svg>
<div class="a" style="left:111px;top:226px;width:163px;height:1px;background:#fff;"></div>
<div class="a" style="left:273px;top:226px;width:1px;height:39px;background:#808080;"></div>
<div class="a" style="left:274px;top:226px;width:1px;height:39px;background:#fff;"></div>
<div class="a" style="left:111px;top:263px;width:163px;height:1px;background:#808080;"></div>
<div class="a" style="left:111px;top:264px;width:163px;height:1px;background:#fff;"></div>
<div class="a" style="left:112px;top:242px;width:40px;height:20px;background:#d4d0c8;"></div>
<div class="a" style="left:112px;top:242px;width:40px;height:1px;background:#fff;"></div>
<div class="a" style="left:112px;top:242px;width:1px;height:20px;background:#fff;"></div>
<div class="a" style="left:112px;top:261px;width:40px;height:1px;background:#404040;"></div>
<div class="a" style="left:151px;top:242px;width:1px;height:20px;background:#404040;"></div>
<div class="a" style="left:113px;top:260px;width:38px;height:1px;background:#808080;"></div>
<div class="a" style="left:150px;top:243px;width:1px;height:18px;background:#808080;"></div>
<div class="a" style="left:152px;top:242px;width:40px;height:20px;background:#d4d0c8;"></div>
<div class="a" style="left:152px;top:242px;width:40px;height:1px;background:#fff;"></div>
<div class="a" style="left:152px;top:242px;width:1px;height:20px;background:#fff;"></div>
<div class="a" style="left:152px;top:261px;width:40px;height:1px;background:#404040;"></div>
<div class="a" style="left:191px;top:242px;width:1px;height:20px;background:#404040;"></div>
<div class="a" style="left:153px;top:260px;width:38px;height:1px;background:#808080;"></div>
<div class="a" style="left:190px;top:243px;width:1px;height:18px;background:#808080;"></div>
<div class="a" style="left:192px;top:242px;width:40px;height:20px;background:repeating-conic-gradient(#fff 0% 25%, #d4d0c8 0% 50%) 0 0/2px 2px;"></div>
<div class="a" style="left:192px;top:242px;width:40px;height:1px;background:#404040;"></div>
<div class="a" style="left:192px;top:242px;width:1px;height:20px;background:#404040;"></div>
<div class="a" style="left:192px;top:243px;width:39px;height:1px;background:#808080;"></div>
<svg class="a" style="left:122px;top:246px;" width="24" height="14" viewBox="0 0 24 14" shape-rendering="crispEdges"><rect x="5.5" y="0.5" width="10" height="9" fill="none" stroke="#000" stroke-dasharray="1 1"/><path d="M2 5H11M2 5V11" stroke="#000" stroke-width="2"/><rect x="10" y="3" width="3" height="3" fill="#000"/><rect x="0" y="10" width="3" height="3" fill="#000"/><path d="M4 9L10 6" stroke="#000" stroke-dasharray="1 1"/><path d="M21 8V13L24 10.5Z" fill="#000"/></svg>
<svg class="a" style="left:164px;top:246px;" width="26" height="14" viewBox="0 0 26 14" shape-rendering="crispEdges"><rect x="1.5" y="1.5" width="11" height="10" fill="none" stroke="#000" stroke-dasharray="1 1"/><path d="M11 0V6L13 4.5L14 7L15 6.5L14 4H16Z" fill="#000"/><path d="M20 8V13L23 10.5Z" fill="#000"/></svg>
<svg class="a" style="left:204px;top:245px;" width="16" height="14" viewBox="0 0 16 14" shape-rendering="crispEdges"><path d="M2 8L7 3L12 8L7 13Z" fill="#fff" stroke="#000" stroke-dasharray="1 1"/><circle cx="10" cy="9" r="4.5" fill="#fff" stroke="#000" stroke-width="1.2"/><path d="M7 2L10 0L13 3L10 6Z" fill="#000"/></svg>
<div class="a" style="left:240px;top:237px;width:29px;height:1px;background:#808080;"></div>
<div class="a" style="left:240px;top:237px;width:1px;height:21px;background:#808080;"></div>
<div class="a" style="left:240px;top:257px;width:29px;height:1px;background:#fff;"></div>
<div class="a" style="left:268px;top:237px;width:1px;height:21px;background:#fff;"></div>
<svg class="a" style="left:249px;top:240px;" width="10" height="14" viewBox="0 0 10 14" shape-rendering="crispEdges"><path d="M1 0.5V10L3.5 8L5.5 12.5L7 12L5 7.5H8.5Z" fill="#8c8cf0" stroke="#000" stroke-width="0.9"/></svg>
<div class="a" style="left:97px;top:275px;width:1497px;height:1px;background:#fff;"></div>
<div class="a" style="left:97px;top:280px;width:1330px;height:1px;background:#404040;"></div>
<div class="a" style="left:97px;top:280px;width:1px;height:846px;background:#404040;"></div>
<div class="a" style="left:98px;top:281px;width:1328px;height:1px;background:#5a5a5a;"></div>
<div class="a" style="left:98px;top:281px;width:1px;height:845px;background:#5a5a5a;"></div>
<div class="a" style="left:1427px;top:280px;width:1px;height:847px;background:#fff;"></div>
<div class="a" style="left:97px;top:1126px;width:1331px;height:1px;background:#fff;"></div>
<div class="a" style="left:99px;top:282px;width:1310px;height:826px;background:#000;"></div>
<div class="a" style="left:1409px;top:282px;width:16px;height:826px;background:repeating-conic-gradient(#fff 0% 25%, #d4d0c8 0% 50%) 0 0/2px 2px;"></div>
<div class="a" style="left:1409px;top:282px;width:16px;height:16px;background:#d4d0c8;"></div>
<div class="a" style="left:1409px;top:282px;width:16px;height:1px;background:#fff;"></div>
<div class="a" style="left:1409px;top:282px;width:1px;height:16px;background:#fff;"></div>
<div class="a" style="left:1409px;top:297px;width:16px;height:1px;background:#404040;"></div>
<div class="a" style="left:1424px;top:282px;width:1px;height:16px;background:#404040;"></div>
<div class="a" style="left:1410px;top:296px;width:14px;height:1px;background:#808080;"></div>
<div class="a" style="left:1423px;top:283px;width:1px;height:14px;background:#808080;"></div>
<svg class="a" style="left:1413px;top:287px;" width="7" height="4" viewBox="0 0 7 4" shape-rendering="crispEdges"><path d="M0 4H7L3.5 0Z" fill="#000"/></svg>
<div class="a" style="left:1409px;top:1092px;width:16px;height:16px;background:#d4d0c8;"></div>
<div class="a" style="left:1409px;top:1092px;width:16px;height:1px;background:#fff;"></div>
<div class="a" style="left:1409px;top:1092px;width:1px;height:16px;background:#fff;"></div>
<div class="a" style="left:1409px;top:1107px;width:16px;height:1px;background:#404040;"></div>
<div class="a" style="left:1424px;top:1092px;width:1px;height:16px;background:#404040;"></div>
<div class="a" style="left:1410px;top:1106px;width:14px;height:1px;background:#808080;"></div>
<div class="a" style="left:1423px;top:1093px;width:1px;height:14px;background:#808080;"></div>
<svg class="a" style="left:1413px;top:1098px;" width="7" height="4" viewBox="0 0 7 4" shape-rendering="crispEdges"><path d="M0 0H7L3.5 4Z" fill="#000"/></svg>
<div class="a" style="left:1409px;top:562px;width:16px;height:31px;background:#d4d0c8;"></div>
<div class="a" style="left:1409px;top:562px;width:16px;height:1px;background:#fff;"></div>
<div class="a" style="left:1409px;top:562px;width:1px;height:31px;background:#fff;"></div>
<div class="a" style="left:1409px;top:592px;width:16px;height:1px;background:#404040;"></div>
<div class="a" style="left:1424px;top:562px;width:1px;height:31px;background:#404040;"></div>
<div class="a" style="left:1410px;top:591px;width:14px;height:1px;background:#808080;"></div>
<div class="a" style="left:1423px;top:563px;width:1px;height:29px;background:#808080;"></div>
<div class="a" style="left:1409px;top:1108px;width:18px;height:18px;background:#d4d0c8;"></div>
<div class="a" style="left:99px;top:1108px;width:1310px;height:18px;background:#d4d0c8;"></div>
<div class="a" style="left:100px;top:1108px;width:23px;height:16px;background:repeating-conic-gradient(#fff 0% 25%, #d4d0c8 0% 50%) 0 0/2px 2px;"></div>
<div class="a" style="left:100px;top:1108px;width:23px;height:1px;background:#404040;"></div>
<div class="a" style="left:100px;top:1108px;width:1px;height:16px;background:#404040;"></div>
<div class="a" style="left:101px;top:1109px;width:21px;height:1px;background:#808080;"></div>
<div class="a" style="left:101px;top:1109px;width:1px;height:14px;background:#808080;"></div>
<div class="a" style="left:100px;top:1123px;width:23px;height:1px;background:#fff;"></div>
<div class="a" style="left:122px;top:1108px;width:1px;height:16px;background:#fff;"></div>
<div class="a" style="left:123px;top:1108px;width:24px;height:16px;background:#d4d0c8;"></div>
<div class="a" style="left:123px;top:1108px;width:24px;height:1px;background:#fff;"></div>
<div class="a" style="left:123px;top:1108px;width:1px;height:16px;background:#fff;"></div>
<div class="a" style="left:123px;top:1123px;width:24px;height:1px;background:#404040;"></div>
<div class="a" style="left:146px;top:1108px;width:1px;height:16px;background:#404040;"></div>
<div class="a" style="left:124px;top:1122px;width:22px;height:1px;background:#808080;"></div>
<div class="a" style="left:145px;top:1109px;width:1px;height:14px;background:#808080;"></div>
<div class="a" style="left:147px;top:1108px;width:24px;height:16px;background:repeating-conic-gradient(#fff 0% 25%, #d4d0c8 0% 50%) 0 0/2px 2px;"></div>
<div class="a" style="left:147px;top:1108px;width:24px;height:1px;background:#404040;"></div>
<div class="a" style="left:147px;top:1108px;width:1px;height:16px;background:#404040;"></div>
<div class="a" style="left:148px;top:1109px;width:22px;height:1px;background:#808080;"></div>
<div class="a" style="left:148px;top:1109px;width:1px;height:14px;background:#808080;"></div>
<div class="a" style="left:147px;top:1123px;width:24px;height:1px;background:#fff;"></div>
<div class="a" style="left:170px;top:1108px;width:1px;height:16px;background:#fff;"></div>
<svg class="a" style="left:102px;top:1110px;" width="20" height="12" viewBox="0 0 20 12" shape-rendering="crispEdges"><path d="M2 1V11" stroke="#000" stroke-dasharray="2 2" stroke-width="1.5"/><path d="M6 7L11 2L16 7V11H6Z" fill="#f0b040" stroke="#000"/><rect x="11" y="7" width="5" height="4" fill="#f08030"/></svg>
<svg class="a" style="left:127px;top:1110px;" width="18" height="13" viewBox="0 0 18 13" shape-rendering="crispEdges"><rect x="0.5" y="2.5" width="12" height="10" fill="#fff" stroke="#000"/><circle cx="10" cy="5" r="4" fill="none" stroke="#203090" stroke-width="1.5"/><path d="M13 8L17 12" stroke="#203090" stroke-width="2"/></svg>
<svg class="a" style="left:150px;top:1110px;" width="18" height="13" viewBox="0 0 18 13" shape-rendering="crispEdges"><rect x="2.5" y="2.5" width="13" height="10" fill="#fff" stroke="#000"/><path d="M1 10L8 5L10 8L17 1" stroke="#000" stroke-width="1.5" fill="none"/><path d="M3 9L9 4M10 7L16 2" stroke="#e0d000"/></svg>
<div class="a" style="left:171px;top:1108px;width:63px;height:16px;background:#d4d0c8;"></div>
<div class="a" style="left:171px;top:1108px;width:63px;height:1px;background:#fff;"></div>
<div class="a" style="left:171px;top:1108px;width:1px;height:16px;background:#fff;"></div>
<div class="a" style="left:171px;top:1123px;width:63px;height:1px;background:#404040;"></div>
<div class="a" style="left:233px;top:1108px;width:1px;height:16px;background:#404040;"></div>
<div class="a" style="left:172px;top:1122px;width:61px;height:1px;background:#808080;"></div>
<div class="a" style="left:232px;top:1109px;width:1px;height:14px;background:#808080;"></div>
<div class="t" style="left:192px;top:1112px;font-size:11px;color:#000;">1:50</div>
<div class="a" style="left:234px;top:1108px;width:74px;height:16px;background:#d4d0c8;"></div>
<div class="a" style="left:234px;top:1108px;width:74px;height:1px;background:#fff;"></div>
<div class="a" style="left:234px;top:1108px;width:1px;height:16px;background:#fff;"></div>
<div class="a" style="left:234px;top:1123px;width:74px;height:1px;background:#404040;"></div>
<div class="a" style="left:307px;top:1108px;width:1px;height:16px;background:#404040;"></div>
<div class="a" style="left:235px;top:1122px;width:72px;height:1px;background:#808080;"></div>
<div class="a" style="left:306px;top:1109px;width:1px;height:14px;background:#808080;"></div>
<div class="t" style="left:265px;top:1112px;font-size:11px;color:#000;">29 %</div>
<div class="a" style="left:308px;top:1108px;width:24px;height:16px;background:#d4d0c8;"></div>
<div class="a" style="left:308px;top:1108px;width:24px;height:1px;background:#fff;"></div>
<div class="a" style="left:308px;top:1108px;width:1px;height:16px;background:#fff;"></div>
<div class="a" style="left:308px;top:1123px;width:24px;height:1px;background:#404040;"></div>
<div class="a" style="left:331px;top:1108px;width:1px;height:16px;background:#404040;"></div>
<div class="a" style="left:309px;top:1122px;width:22px;height:1px;background:#808080;"></div>
<div class="a" style="left:330px;top:1109px;width:1px;height:14px;background:#808080;"></div>
<svg class="a" style="left:317px;top:1112px;" width="5" height="9" viewBox="0 0 5 9" shape-rendering="crispEdges"><path d="M0 0V9L5 4.5Z" fill="#000"/></svg>
<div class="a" style="left:333px;top:1108px;width:24px;height:16px;background:#d4d0c8;"></div>
<div class="a" style="left:333px;top:1108px;width:24px;height:1px;background:#fff;"></div>
<div class="a" style="left:333px;top:1108px;width:1px;height:16px;background:#fff;"></div>
<div class="a" style="left:333px;top:1123px;width:24px;height:1px;background:#404040;"></div>
<div class="a" style="left:356px;top:1108px;width:1px;height:16px;background:#404040;"></div>
<div class="a" style="left:334px;top:1122px;width:22px;height:1px;background:#808080;"></div>
<div class="a" style="left:355px;top:1109px;width:1px;height:14px;background:#808080;"></div>
<div class="a" style="left:357px;top:1108px;width:24px;height:16px;background:#d4d0c8;"></div>
<div class="a" style="left:357px;top:1108px;width:24px;height:1px;background:#fff;"></div>
<div class="a" style="left:357px;top:1108px;width:1px;height:16px;background:#fff;"></div>
<div class="a" style="left:357px;top:1123px;width:24px;height:1px;background:#404040;"></div>
<div class="a" style="left:380px;top:1108px;width:1px;height:16px;background:#404040;"></div>
<div class="a" style="left:358px;top:1122px;width:22px;height:1px;background:#808080;"></div>
<div class="a" style="left:379px;top:1109px;width:1px;height:14px;background:#808080;"></div>
<div class="a" style="left:381px;top:1108px;width:24px;height:16px;background:#d4d0c8;"></div>
<div class="a" style="left:381px;top:1108px;width:24px;height:1px;background:#fff;"></div>
<div class="a" style="left:381px;top:1108px;width:1px;height:16px;background:#fff;"></div>
<div class="a" style="left:381px;top:1123px;width:24px;height:1px;background:#404040;"></div>
<div class="a" style="left:404px;top:1108px;width:1px;height:16px;background:#404040;"></div>
<div class="a" style="left:382px;top:1122px;width:22px;height:1px;background:#808080;"></div>
<div class="a" style="left:403px;top:1109px;width:1px;height:14px;background:#808080;"></div>
<div class="a" style="left:405px;top:1108px;width:24px;height:16px;background:#d4d0c8;"></div>
<div class="a" style="left:405px;top:1108px;width:24px;height:1px;background:#fff;"></div>
<div class="a" style="left:405px;top:1108px;width:1px;height:16px;background:#fff;"></div>
<div class="a" style="left:405px;top:1123px;width:24px;height:1px;background:#404040;"></div>
<div class="a" style="left:428px;top:1108px;width:1px;height:16px;background:#404040;"></div>
<div class="a" style="left:406px;top:1122px;width:22px;height:1px;background:#808080;"></div>
<div class="a" style="left:427px;top:1109px;width:1px;height:14px;background:#808080;"></div>
<div class="a" style="left:429px;top:1108px;width:24px;height:16px;background:#d4d0c8;"></div>
<div class="a" style="left:429px;top:1108px;width:24px;height:1px;background:#fff;"></div>
<div class="a" style="left:429px;top:1108px;width:1px;height:16px;background:#fff;"></div>
<div class="a" style="left:429px;top:1123px;width:24px;height:1px;background:#404040;"></div>
<div class="a" style="left:452px;top:1108px;width:1px;height:16px;background:#404040;"></div>
<div class="a" style="left:430px;top:1122px;width:22px;height:1px;background:#808080;"></div>
<div class="a" style="left:451px;top:1109px;width:1px;height:14px;background:#808080;"></div>
<div class="a" style="left:453px;top:1108px;width:24px;height:16px;background:#d4d0c8;"></div>
<div class="a" style="left:453px;top:1108px;width:24px;height:1px;background:#fff;"></div>
<div class="a" style="left:453px;top:1108px;width:1px;height:16px;background:#fff;"></div>
<div class="a" style="left:453px;top:1123px;width:24px;height:1px;background:#404040;"></div>
<div class="a" style="left:476px;top:1108px;width:1px;height:16px;background:#404040;"></div>
<div class="a" style="left:454px;top:1122px;width:22px;height:1px;background:#808080;"></div>
<div class="a" style="left:475px;top:1109px;width:1px;height:14px;background:#808080;"></div>
<div class="a" style="left:477px;top:1108px;width:24px;height:16px;background:#d4d0c8;"></div>
<div class="a" style="left:477px;top:1108px;width:24px;height:1px;background:#fff;"></div>
<div class="a" style="left:477px;top:1108px;width:1px;height:16px;background:#fff;"></div>
<div class="a" style="left:477px;top:1123px;width:24px;height:1px;background:#404040;"></div>
<div class="a" style="left:500px;top:1108px;width:1px;height:16px;background:#404040;"></div>
<div class="a" style="left:478px;top:1122px;width:22px;height:1px;background:#808080;"></div>
<div class="a" style="left:499px;top:1109px;width:1px;height:14px;background:#808080;"></div>
<svg class="a" style="left:336px;top:1109px;" width="19" height="14" viewBox="0 0 19 14" shape-rendering="crispEdges"><circle cx="6" cy="6" r="4.5" fill="none" stroke="#1030a0" stroke-width="1.6"/><path d="M9 9L13 13" stroke="#1030a0" stroke-width="2"/><path d="M13 3H18M15.5 1V5M13 8H18" stroke="#000" stroke-width="1.3"/></svg>
<svg class="a" style="left:362px;top:1109px;" width="16" height="14" viewBox="0 0 16 14" shape-rendering="crispEdges"><circle cx="6" cy="6" r="4.5" fill="#fff" stroke="#000" stroke-width="1.6"/><path d="M9 9L13 13" stroke="#000" stroke-width="2.2"/><path d="M3.5 6H8.5M6 3.5V8.5" stroke="#000" stroke-width="1.3"/></svg>
<svg class="a" style="left:386px;top:1109px;" width="16" height="14" viewBox="0 0 16 14" shape-rendering="crispEdges"><circle cx="6" cy="6" r="4.5" fill="#fff" stroke="#000" stroke-width="1.6"/><path d="M9 9L13 13" stroke="#000" stroke-width="2.2"/><path d="M3.5 6H8.5" stroke="#000" stroke-width="1.3"/></svg>
<svg class="a" style="left:410px;top:1109px;" width="15" height="15" viewBox="0 0 15 15" shape-rendering="crispEdges"><path d="M3 8V4M5 7V2M7 7V1M9 7V2M11 8V4Q13 5 12 9L10 13H5L2 9Z" fill="#fff" stroke="#000"/></svg>
<svg class="a" style="left:433px;top:1109px;" width="16" height="15" viewBox="0 0 16 15" shape-rendering="crispEdges"><circle cx="8" cy="7" r="5" fill="none" stroke="#000" stroke-width="1.5"/><path d="M1 1H4M1 1V4M15 1H12M15 1V4M1 13H4M1 13V10M15 13H12M15 13V10" stroke="#000" stroke-width="1.3"/></svg>
<svg class="a" style="left:455px;top:1109px;" width="20" height="14" viewBox="0 0 20 14" shape-rendering="crispEdges"><path d="M0 6L4 2V4H7V8H4V10Z" fill="#000"/><circle cx="12" cy="6" r="4.5" fill="#fff" stroke="#000" stroke-width="1.6"/><path d="M15 9L19 13" stroke="#000" stroke-width="2"/></svg>
<svg class="a" style="left:479px;top:1109px;" width="20" height="14" viewBox="0 0 20 14" shape-rendering="crispEdges"><circle cx="7" cy="6" r="4.5" fill="none" stroke="#a0a0a0" stroke-width="1.6"/><path d="M10 9L14 13" stroke="#a0a0a0" stroke-width="2"/><path d="M19 6L15 2V4H12V8H15V10Z" fill="#a0a0a0"/></svg>
<div class="a" style="left:501px;top:1108px;width:16px;height:16px;background:#d4d0c8;"></div>
<div class="a" style="left:501px;top:1108px;width:16px;height:1px;background:#fff;"></div>
<div class="a" style="left:501px;top:1108px;width:1px;height:16px;background:#fff;"></div>
<div class="a" style="left:501px;top:1123px;width:16px;height:1px;background:#404040;"></div>
<div class="a" style="left:516px;top:1108px;width:1px;height:16px;background:#404040;"></div>
<div class="a" style="left:502px;top:1122px;width:14px;height:1px;background:#808080;"></div>
<div class="a" style="left:515px;top:1109px;width:1px;height:14px;background:#808080;"></div>
<svg class="a" style="left:506px;top:1112px;" width="5" height="9" viewBox="0 0 5 9" shape-rendering="crispEdges"><path d="M5 0V9L0 4.5Z" fill="#000"/></svg>
<div class="a" style="left:517px;top:1108px;width:876px;height:16px;background:repeating-conic-gradient(#fff 0% 25%, #d4d0c8 0% 50%) 0 0/2px 2px;"></div>
<div class="a" style="left:777px;top:1108px;width:35px;height:16px;background:#d4d0c8;"></div>
<div class="a" style="left:777px;top:1108px;width:35px;height:1px;background:#fff;"></div>
<div class="a" style="left:777px;top:1108px;width:1px;height:16px;background:#fff;"></div>
<div class="a" style="left:777px;top:1123px;width:35px;height:1px;background:#404040;"></div>
<div class="a" style="left:811px;top:1108px;width:1px;height:16px;background:#404040;"></div>
<div class="a" style="left:778px;top:1122px;width:33px;height:1px;background:#808080;"></div>
<div class="a" style="left:810px;top:1109px;width:1px;height:14px;background:#808080;"></div>
<div class="a" style="left:1393px;top:1108px;width:16px;height:16px;background:#d4d0c8;"></div>
<div class="a" style="left:1393px;top:1108px;width:16px;height:1px;background:#fff;"></div>
<div class="a" style="left:1393px;top:1108px;width:1px;height:16px;background:#fff;"></div>
<div class="a" style="left:1393px;top:1123px;width:16px;height:1px;background:#404040;"></div>
<div class="a" style="left:1408px;top:1108px;width:1px;height:16px;background:#404040;"></div>
<div class="a" style="left:1394px;top:1122px;width:14px;height:1px;background:#808080;"></div>
<div class="a" style="left:1407px;top:1109px;width:1px;height:14px;background:#808080;"></div>
<svg class="a" style="left:1399px;top:1112px;" width="5" height="9" viewBox="0 0 5 9" shape-rendering="crispEdges"><path d="M0 0V9L5 4.5Z" fill="#000"/></svg>
<svg class="a" style="left:0;top:0" width="1600" height="1153" viewBox="0 0 1600 1153"><defs><clipPath id="dc"><rect x="99" y="282" width="1310" height="826"/></clipPath></defs><g clip-path="url(#dc)" fill="none" shape-rendering="crispEdges"><circle cx="370.3" cy="363.0" r="7.5" fill="none" stroke="#9a00b4" stroke-width="1" stroke-dasharray="2 1"/><line x1="370.3" y1="371.0" x2="370.3" y2="657.0" stroke="#9a00b4" stroke-width="1" stroke-dasharray="5 2 1 2"/><circle cx="422.8" cy="363.0" r="7.5" fill="none" stroke="#9a00b4" stroke-width="1" stroke-dasharray="2 1"/><line x1="422.8" y1="371.0" x2="422.8" y2="657.0" stroke="#9a00b4" stroke-width="1" stroke-dasharray="5 2 1 2"/><circle cx="475.3" cy="363.0" r="7.5" fill="none" stroke="#9a00b4" stroke-width="1" stroke-dasharray="2 1"/><line x1="475.3" y1="371.0" x2="475.3" y2="591.0" stroke="#9a00b4" stroke-width="1" stroke-dasharray="5 2 1 2"/><circle cx="527.8" cy="363.0" r="7.5" fill="none" stroke="#9a00b4" stroke-width="1" stroke-dasharray="2 1"/><line x1="527.8" y1="371.0" x2="527.8" y2="591.0" stroke="#9a00b4" stroke-width="1" stroke-dasharray="5 2 1 2"/><circle cx="580.3" cy="363.0" r="7.5" fill="none" stroke="#9a00b4" stroke-width="1" stroke-dasharray="2 1"/><line x1="580.3" y1="371.0" x2="580.3" y2="591.0" stroke="#9a00b4" stroke-width="1" stroke-dasharray="5 2 1 2"/><circle cx="632.8" cy="363.0" r="7.5" fill="none" stroke="#9a00b4" stroke-width="1" stroke-dasharray="2 1"/><line x1="632.8" y1="371.0" x2="632.8" y2="591.0" stroke="#9a00b4" stroke-width="1" stroke-dasharray="5 2 1 2"/><circle cx="685.3" cy="363.0" r="7.5" fill="none" stroke="#9a00b4" stroke-width="1" stroke-dasharray="2 1"/><line x1="685.3" y1="371.0" x2="685.3" y2="591.0" stroke="#9a00b4" stroke-width="1" stroke-dasharray="5 2 1 2"/><circle cx="737.8" cy="363.0" r="7.5" fill="none" stroke="#9a00b4" stroke-width="1" stroke-dasharray="2 1"/><line x1="737.8" y1="371.0" x2="737.8" y2="591.0" stroke="#9a00b4" stroke-width="1" stroke-dasharray="5 2 1 2"/><circle cx="790.3" cy="363.0" r="7.5" fill="none" stroke="#9a00b4" stroke-width="1" stroke-dasharray="2 1"/><line x1="790.3" y1="371.0" x2="790.3" y2="591.0" stroke="#9a00b4" stroke-width="1" stroke-dasharray="5 2 1 2"/><circle cx="842.8" cy="363.0" r="7.5" fill="none" stroke="#9a00b4" stroke-width="1" stroke-dasharray="2 1"/><line x1="842.8" y1="371.0" x2="842.8" y2="591.0" stroke="#9a00b4" stroke-width="1" stroke-dasharray="5 2 1 2"/><circle cx="895.3" cy="363.0" r="7.5" fill="none" stroke="#9a00b4" stroke-width="1" stroke-dasharray="2 1"/><line x1="895.3" y1="371.0" x2="895.3" y2="591.0" stroke="#9a00b4" stroke-width="1" stroke-dasharray="5 2 1 2"/><circle cx="947.8" cy="363.0" r="7.5" fill="none" stroke="#9a00b4" stroke-width="1" stroke-dasharray="2 1"/><line x1="947.8" y1="371.0" x2="947.8" y2="591.0" stroke="#9a00b4" stroke-width="1" stroke-dasharray="5 2 1 2"/><circle cx="1000.3" cy="363.0" r="7.5" fill="none" stroke="#9a00b4" stroke-width="1" stroke-dasharray="2 1"/><line x1="1000.3" y1="371.0" x2="1000.3" y2="591.0" stroke="#9a00b4" stroke-width="1" stroke-dasharray="5 2 1 2"/><circle cx="1052.8" cy="363.0" r="7.5" fill="none" stroke="#9a00b4" stroke-width="1" stroke-dasharray="2 1"/><line x1="1052.8" y1="371.0" x2="1052.8" y2="591.0" stroke="#9a00b4" stroke-width="1" stroke-dasharray="5 2 1 2"/><circle cx="1105.3" cy="363.0" r="7.5" fill="none" stroke="#9a00b4" stroke-width="1" stroke-dasharray="2 1"/><line x1="1105.3" y1="371.0" x2="1105.3" y2="591.0" stroke="#9a00b4" stroke-width="1" stroke-dasharray="5 2 1 2"/><circle cx="1157.8" cy="363.0" r="7.5" fill="none" stroke="#9a00b4" stroke-width="1" stroke-dasharray="2 1"/><line x1="1157.8" y1="371.0" x2="1157.8" y2="591.0" stroke="#9a00b4" stroke-width="1" stroke-dasharray="5 2 1 2"/><circle cx="341.0" cy="419.4" r="7.5" fill="none" stroke="#9a00b4" stroke-width="1" stroke-dasharray="2 1"/><circle cx="341.0" cy="572.4" r="7.5" fill="none" stroke="#9a00b4" stroke-width="1" stroke-dasharray="2 1"/><line x1="349.0" y1="419.4" x2="1168.0" y2="419.4" stroke="#9a00b4" stroke-width="1" stroke-dasharray="5 2 1 2"/><line x1="349.0" y1="572.4" x2="1168.0" y2="572.4" stroke="#9a00b4" stroke-width="1" stroke-dasharray="5 2 1 2"/><line x1="353.0" y1="622.0" x2="478.0" y2="626.0" stroke="#9a00b4" stroke-width="1" stroke-dasharray="4 2"/><line x1="360.0" y1="527.0" x2="360.0" y2="622.0" stroke="#40a8ff" stroke-width="1"/><line x1="356.0" y1="527.0" x2="364.0" y2="527.0" stroke="#40a8ff" stroke-width="1"/><line x1="356.0" y1="572.0" x2="364.0" y2="572.0" stroke="#40a8ff" stroke-width="1"/><line x1="356.0" y1="622.0" x2="364.0" y2="622.0" stroke="#40a8ff" stroke-width="1"/><path d="M421.8,571.6 C419.5,570.2 412.5,566.8 408.0,563.5 C403.5,560.2 398.3,556.1 395.0,552.0 C391.7,547.9 389.7,543.7 388.0,539.0 C386.3,534.3 385.2,529.8 385.0,524.0 C384.8,518.2 384.8,511.8 386.5,504.0 C388.2,496.2 391.4,486.8 395.0,477.5 C398.6,468.2 403.0,457.4 408.4,448.0 C413.8,438.6 419.6,428.6 427.2,421.0 C434.8,413.4 442.8,407.2 454.0,402.3 C465.2,397.4 483.2,392.9 494.4,391.5 C505.6,390.1 512.3,391.9 521.3,394.2 C530.3,396.4 539.2,400.8 548.2,405.0 C557.2,409.2 563.8,413.9 575.0,419.7 C586.2,425.5 601.9,431.3 615.4,440.0 C628.9,448.7 643.2,461.3 655.7,472.0 C668.2,482.7 684.8,499.0 690.6,504.4" fill="none" stroke="#ff7400" stroke-width="2.6"/><path d="M411.5,566.0 C409.3,564.1 401.8,558.6 398.5,554.5 C395.2,550.4 393.2,546.2 391.5,541.5 C389.8,536.8 388.8,532.3 388.5,526.5 C388.2,520.7 388.3,514.2 390.0,506.5 C391.7,498.8 394.9,489.3 398.5,480.0 C402.1,470.7 406.5,459.9 411.9,450.5 C417.3,441.1 423.1,431.1 430.7,423.5 C438.3,415.9 446.3,409.7 457.5,404.8 C468.7,399.9 491.2,395.8 497.9,394.0" fill="none" stroke="#ff7400" stroke-width="1.2"/><path d="M401.0,556.0 C399.8,553.8 395.7,547.7 394.0,543.0 C392.3,538.3 391.2,533.8 391.0,528.0 C390.8,522.2 390.8,515.8 392.5,508.0 C394.2,500.2 397.4,490.8 401.0,481.5 C404.6,472.2 409.0,461.4 414.4,452.0 C419.8,442.6 425.6,432.6 433.2,425.0 C440.8,417.4 448.8,411.2 460.0,406.3 C471.2,401.4 489.2,396.9 500.4,395.5 C511.6,394.1 522.8,397.8 527.3,398.2" fill="none" stroke="#9a00b4" stroke-width="1"/><path d="M419.0,550.0 C421.7,543.3 429.5,521.0 435.3,509.8 C441.1,498.6 446.4,492.0 454.0,483.0 C461.6,474.0 472.0,463.6 481.0,456.0 C490.0,448.4 498.9,442.4 507.8,437.2 C516.8,432.0 525.7,427.5 534.7,425.0 C543.7,422.5 553.6,421.7 561.6,422.4 C569.6,423.1 577.2,426.1 583.0,429.0 C588.8,431.9 594.3,438.2 596.6,440.0" fill="none" stroke="#ff7400" stroke-width="2.4"/><path d="M422.0,553.0 C424.7,546.3 432.5,524.0 438.3,512.8 C444.1,501.6 449.4,495.0 457.0,486.0 C464.6,477.0 475.0,466.6 484.0,459.0 C493.0,451.4 501.9,445.4 510.8,440.2 C519.8,435.0 528.7,430.5 537.7,428.0 C546.7,425.5 560.1,425.8 564.6,425.4" fill="none" stroke="#ff7400" stroke-width="1.2"/><path d="M421.8,566.0 C424.5,558.4 430.4,536.2 438.0,520.5 C445.6,504.8 455.4,485.4 467.5,472.0 C479.6,458.6 496.2,447.3 510.5,440.0 C524.8,432.7 540.5,428.9 553.5,428.0 C566.5,427.1 578.2,429.4 588.5,434.5 C598.8,439.6 608.7,447.9 615.4,458.7 C622.1,469.4 627.0,486.9 628.8,499.0 C630.6,511.1 629.6,521.2 626.0,531.0 C622.4,540.8 614.5,551.5 607.3,558.0 C600.1,564.5 594.2,567.0 583.0,570.0 C571.8,573.0 566.9,575.0 540.0,576.0 C513.1,577.0 441.5,576.0 421.8,576.0" fill="none" stroke="#a0a0a0" stroke-width="1"/><path d="M575.0,426.0 C579.2,430.0 592.2,439.3 600.0,450.0 C607.8,460.7 617.3,478.3 622.0,490.0 C626.7,501.7 628.3,510.3 628.0,520.0 C627.7,529.7 624.7,540.3 620.0,548.0 C615.3,555.7 605.8,561.8 600.0,566.0 C594.2,570.2 587.5,571.8 585.0,573.0" fill="none" stroke="#9a00b4" stroke-width="1"/><path d="M412.0,574.0 C411.7,578.0 409.3,591.3 410.0,598.0 C410.7,604.7 412.8,608.2 416.0,614.0 C419.2,619.8 423.4,627.7 429.0,633.0 C434.6,638.3 442.9,642.2 449.7,646.0 C456.5,649.8 466.6,654.3 470.0,656.0" fill="none" stroke="#ff7400" stroke-width="2.6"/><path d="M418.0,574.0 C417.8,578.0 416.3,591.3 417.0,598.0 C417.7,604.7 419.2,608.7 422.0,614.0 C424.8,619.3 429.0,625.3 434.0,630.0 C439.0,634.7 445.7,638.5 452.0,642.0 C458.3,645.5 468.7,649.5 472.0,651.0" fill="none" stroke="#ff7400" stroke-width="1"/><path d="M422.0,580.0 C423.0,585.0 423.3,600.7 428.0,610.0 C432.7,619.3 441.3,629.7 450.0,636.0 C458.7,642.3 469.7,645.5 480.0,648.0 C490.3,650.5 493.7,649.8 512.0,651.0 C530.3,652.2 564.0,655.0 590.0,655.0 C616.0,655.0 647.2,656.0 668.0,651.0 C688.8,646.0 704.7,633.7 715.0,625.0 C725.3,616.3 727.2,607.3 730.0,599.0 C732.8,590.7 733.3,581.5 732.0,575.0 C730.7,568.5 723.7,562.5 722.0,560.0" fill="none" stroke="#a0a0a0" stroke-width="1"/><circle cx="512.0" cy="608.0" r="21" fill="none" stroke="#20b030" stroke-width="1" stroke-dasharray="3 1.5"/><line x1="508.2" y1="606.6" x2="493.2" y2="601.2" stroke="#20b030" stroke-width="1"/><line x1="509.0" y1="605.3" x2="497.1" y2="594.6" stroke="#20b030" stroke-width="1"/><line x1="510.2" y1="604.4" x2="503.2" y2="590.0" stroke="#20b030" stroke-width="1"/><line x1="511.7" y1="604.0" x2="510.6" y2="588.0" stroke="#20b030" stroke-width="1"/><line x1="513.2" y1="604.2" x2="518.2" y2="589.0" stroke="#20b030" stroke-width="1"/><line x1="514.6" y1="604.9" x2="524.9" y2="592.7" stroke="#20b030" stroke-width="1"/><line x1="515.5" y1="606.1" x2="529.7" y2="598.6" stroke="#20b030" stroke-width="1"/><line x1="516.0" y1="607.6" x2="531.9" y2="605.9" stroke="#20b030" stroke-width="1"/><line x1="515.8" y1="609.1" x2="531.2" y2="613.5" stroke="#20b030" stroke-width="1"/><line x1="515.2" y1="610.5" x2="527.8" y2="620.3" stroke="#20b030" stroke-width="1"/><line x1="514.0" y1="611.5" x2="522.0" y2="625.3" stroke="#20b030" stroke-width="1"/><line x1="512.6" y1="612.0" x2="514.8" y2="627.8" stroke="#20b030" stroke-width="1"/><line x1="511.0" y1="611.9" x2="507.2" y2="627.4" stroke="#20b030" stroke-width="1"/><line x1="509.6" y1="611.2" x2="500.2" y2="624.2" stroke="#20b030" stroke-width="1"/><path d="M491,615 A21,21 0 0 0 533,612" fill="none" stroke="#d04020" stroke-width="1"/><line x1="459.0" y1="382.0" x2="471.0" y2="401.0" stroke="#40a8ff" stroke-width="1"/><line x1="488.0" y1="371.0" x2="494.0" y2="392.0" stroke="#40a8ff" stroke-width="1"/><line x1="510.0" y1="372.0" x2="506.0" y2="393.0" stroke="#40a8ff" stroke-width="1"/><line x1="550.0" y1="400.0" x2="545.0" y2="424.0" stroke="#40a8ff" stroke-width="1"/><line x1="573.0" y1="408.0" x2="567.0" y2="430.0" stroke="#40a8ff" stroke-width="1"/><line x1="405.0" y1="420.0" x2="424.0" y2="440.0" stroke="#40a8ff" stroke-width="1"/><line x1="384.0" y1="446.0" x2="410.0" y2="460.0" stroke="#40a8ff" stroke-width="1"/><line x1="374.0" y1="480.0" x2="398.0" y2="490.0" stroke="#40a8ff" stroke-width="1"/><line x1="381.0" y1="516.0" x2="406.0" y2="523.0" stroke="#40a8ff" stroke-width="1"/><line x1="373.0" y1="553.0" x2="400.0" y2="555.0" stroke="#40a8ff" stroke-width="1"/><line x1="404.0" y1="530.0" x2="430.0" y2="545.0" stroke="#40a8ff" stroke-width="1"/><line x1="378.0" y1="577.0" x2="401.0" y2="568.0" stroke="#40a8ff" stroke-width="1"/><line x1="382.0" y1="600.0" x2="406.0" y2="598.0" stroke="#40a8ff" stroke-width="1"/><line x1="402.0" y1="640.0" x2="424.0" y2="628.0" stroke="#40a8ff" stroke-width="1"/><line x1="380.0" y1="685.0" x2="420.0" y2="650.0" stroke="#40a8ff" stroke-width="1"/><line x1="532.0" y1="389.0" x2="549.0" y2="427.0" stroke="#40a8ff" stroke-width="1"/><line x1="500.0" y1="445.0" x2="519.0" y2="466.0" stroke="#40a8ff" stroke-width="1"/><line x1="470.0" y1="427.0" x2="486.0" y2="447.0" stroke="#40a8ff" stroke-width="1"/><line x1="429.0" y1="466.0" x2="452.0" y2="480.0" stroke="#40a8ff" stroke-width="1"/><line x1="624.0" y1="414.0" x2="626.0" y2="440.0" stroke="#40a8ff" stroke-width="1"/><line x1="655.0" y1="402.0" x2="650.0" y2="428.0" stroke="#40a8ff" stroke-width="1"/><line x1="401.0" y1="465.2" x2="531.4" y2="465.2" stroke="#40a8ff" stroke-width="1"/><line x1="475.4" y1="506.2" x2="531.4" y2="506.2" stroke="#40a8ff" stroke-width="1"/><line x1="443.0" y1="462.0" x2="443.0" y2="468.0" stroke="#40a8ff" stroke-width="1"/><line x1="486.0" y1="462.0" x2="486.0" y2="468.0" stroke="#40a8ff" stroke-width="1"/><line x1="516.0" y1="462.0" x2="516.0" y2="468.0" stroke="#40a8ff" stroke-width="1"/><line x1="531.0" y1="462.0" x2="531.0" y2="468.0" stroke="#40a8ff" stroke-width="1"/><line x1="465.0" y1="484.0" x2="465.0" y2="505.0" stroke="#ff7400" stroke-width="2"/><line x1="481.0" y1="484.0" x2="481.0" y2="505.0" stroke="#ff7400" stroke-width="2"/><path d="M446.0,484.0 A21,21 0 0 0 465.0,505.0" fill="none" stroke="#40a8ff" stroke-width="1"/><path d="M481.0,505.0 A21,21 0 0 0 500.0,484.0" fill="none" stroke="#40a8ff" stroke-width="1"/><path d="M501,488 H513 Q516,494 503,499 Q516,504 513,516 H501 Z" fill="none" stroke="#ff7400" stroke-width="1.5"/><ellipse cx="521" cy="494" rx="4" ry="3" fill="none" stroke="#20b030" stroke-width="1.3"/><ellipse cx="521" cy="510" rx="4" ry="3" fill="none" stroke="#20b030" stroke-width="1.3"/><line x1="524.0" y1="486.0" x2="524.0" y2="520.0" stroke="#20b030" stroke-width="1"/><path d="M478,518 h5 l3,4 v3 h-8 z" fill="#20b030"/><line x1="486.0" y1="522.6" x2="521.0" y2="522.6" stroke="#20b030" stroke-width="1" stroke-dasharray="1 1.5"/><polyline points="521.0,521.0 525.0,518.0 528.0,518.0" fill="none" stroke="#a0a0a0" stroke-width="1.3"/><line x1="488.0" y1="527.0" x2="488.0" y2="540.0" stroke="#20b030" stroke-width="1"/><line x1="503.0" y1="527.0" x2="503.0" y2="540.0" stroke="#40a8ff" stroke-width="1"/><line x1="515.0" y1="527.0" x2="515.0" y2="540.0" stroke="#40a8ff" stroke-width="1"/><line x1="476.0" y1="541.4" x2="515.0" y2="541.4" stroke="#20b030" stroke-width="1" stroke-dasharray="1 1.5"/><line x1="488.0" y1="541.4" x2="516.0" y2="541.4" stroke="#a0a0a0" stroke-width="1"/><path d="M490.0,542.0 A26,26 0 0 0 514.0,570.0" fill="none" stroke="#40a8ff" stroke-width="1"/><polyline points="505.0,543.0 529.0,543.0 529.0,572.0 505.0,572.0 505.0,543.0" fill="none" stroke="#20b030" stroke-width="1.3"/><line x1="505.0" y1="551.0" x2="529.0" y2="551.0" stroke="#20b030" stroke-width="1"/><line x1="505.0" y1="557.0" x2="529.0" y2="557.0" stroke="#20b030" stroke-width="1"/><line x1="505.0" y1="563.0" x2="529.0" y2="563.0" stroke="#20b030" stroke-width="1"/><line x1="512.0" y1="543.0" x2="512.0" y2="572.0" stroke="#20b030" stroke-width="1"/><line x1="522.0" y1="543.0" x2="522.0" y2="572.0" stroke="#20b030" stroke-width="1" stroke-dasharray="1 1"/><path d="M534,541 v6 h3 v22 h8 v12 M560,545 h15 q6,8 -5,18 v15 l6,4 M541,578 h20" fill="none" stroke="#ff7400" stroke-width="1.5"/><path d="M537,480 l5,-8 l5,8 M563,480 l5,-8 l5,8 M601,540 l5,-8 l5,8 M611,458 l5,-8 l5,8" fill="none" stroke="#ff7400" stroke-width="1.5"/><line x1="489.0" y1="473.0" x2="489.0" y2="486.0" stroke="#40a8ff" stroke-width="1"/><line x1="550.4" y1="473.0" x2="550.4" y2="486.0" stroke="#40a8ff" stroke-width="1"/><line x1="546.0" y1="527.0" x2="546.0" y2="543.0" stroke="#40a8ff" stroke-width="1"/><line x1="624.7" y1="527.0" x2="624.7" y2="543.0" stroke="#40a8ff" stroke-width="1"/><path d="M563,459 L582,447 M582,447 Q570,462 577,480" fill="none" stroke="#40a8ff"/><line x1="584.0" y1="451.0" x2="597.0" y2="468.0" stroke="#ff7400" stroke-width="2"/><path d="M540.0,568.0 A24,24 0 0 0 560.0,545.0" fill="none" stroke="#40a8ff" stroke-width="1"/><path d="M549,533 q-5,0 -5,10 v6" fill="none" stroke="#2838ff"/><polyline points="458.0,576.0 462.0,600.0" fill="none" stroke="#ff7400" stroke-width="2"/><polyline points="463.0,580.0 486.0,580.0 484.0,600.0" fill="none" stroke="#20b030" stroke-width="1.2"/><polyline points="592.0,568.0 600.0,572.0 596.0,580.0" fill="none" stroke="#a0a0a0" stroke-width="1"/><path d="M560,563 l6,0 v15 M568,575 h10" fill="none" stroke="#ff7400" stroke-width="2"/><polyline points="580.0,618.0 580.0,641.0 593.0,641.0 593.0,618.0 580.0,618.0 580.0,629.5 593.0,629.5" fill="none" stroke="#20b030" stroke-width="1.3"/><path d="M531,584 h8 q5,6 0,12 h-8 z" fill="none" stroke="#20b030" stroke-width="1.5"/><line x1="474.0" y1="470.0" x2="474.0" y2="488.0" stroke="#40a8ff" stroke-width="1"/><line x1="541.0" y1="592.0" x2="541.0" y2="612.0" stroke="#40a8ff" stroke-width="1"/><line x1="509.5" y1="662.8" x2="652.0" y2="662.8" stroke="#ff7400" stroke-width="1.5"/><line x1="650.0" y1="634.0" x2="650.0" y2="661.0" stroke="#ff7400" stroke-width="2.5"/><path d="M622.0,661.0 A28,28 0 0 1 650.0,634.0" fill="none" stroke="#40a8ff" stroke-width="1"/><line x1="635.6" y1="650.0" x2="635.6" y2="675.0" stroke="#40a8ff" stroke-width="1"/><line x1="427.0" y1="574.0" x2="427.0" y2="587.0" stroke="#ff7400" stroke-width="2"/><line x1="461.0" y1="574.0" x2="461.0" y2="584.0" stroke="#ff7400" stroke-width="2"/><path d="M430,590 q12,8 18,-16 M450,576 q6,18 12,16" fill="none" stroke="#40a8ff"/><path d="M464,582 h22 l-4,28 q-16,-4 -18,-28" fill="none" stroke="#20b030" stroke-width="1.2"/><path d="M470,660 v12 M470,672 q10,6 18,-4 q4,-10 2,-20 M505,662 q2,14 16,16 v-18" fill="none" stroke="#40a8ff"/><line x1="468.0" y1="656.0" x2="469.0" y2="676.0" stroke="#ff7400" stroke-width="2.5"/><line x1="506.0" y1="660.0" x2="508.0" y2="676.0" stroke="#ff7400" stroke-width="2.5"/><path d="M538.0,609.0 C551.7,609.0 594.0,609.0 620.0,609.0 C646.0,609.0 678.3,607.0 694.0,609.0 C709.7,611.0 709.0,614.2 714.0,621.0 C719.0,627.8 718.0,628.5 724.0,650.0 C730.0,671.5 740.0,710.7 750.0,750.0 C760.0,789.3 778.3,863.3 784.0,886.0" fill="none" stroke="#ff7400" stroke-width="1" stroke-dasharray="4 3"/><line x1="546.0" y1="494.0" x2="556.0" y2="494.0" stroke="#2838ff" stroke-width="1"/><line x1="551.0" y1="489.0" x2="551.0" y2="499.0" stroke="#2838ff" stroke-width="1"/><line x1="551.7" y1="490.0" x2="561.7" y2="490.0" stroke="#2838ff" stroke-width="1"/><line x1="556.7" y1="485.0" x2="556.7" y2="495.0" stroke="#2838ff" stroke-width="1"/><line x1="585.7" y1="486.5" x2="595.7" y2="486.5" stroke="#2838ff" stroke-width="1"/><line x1="590.7" y1="481.5" x2="590.7" y2="491.5" stroke="#2838ff" stroke-width="1"/><line x1="550.0" y1="540.0" x2="560.0" y2="540.0" stroke="#2838ff" stroke-width="1"/><line x1="555.0" y1="535.0" x2="555.0" y2="545.0" stroke="#2838ff" stroke-width="1"/><line x1="618.3" y1="554.6" x2="628.3" y2="554.6" stroke="#2838ff" stroke-width="1"/><line x1="623.3" y1="549.6" x2="623.3" y2="559.6" stroke="#2838ff" stroke-width="1"/><line x1="492.0" y1="445.0" x2="502.0" y2="445.0" stroke="#2838ff" stroke-width="1"/><line x1="497.0" y1="440.0" x2="497.0" y2="450.0" stroke="#2838ff" stroke-width="1"/><line x1="628.0" y1="466.0" x2="638.0" y2="466.0" stroke="#2838ff" stroke-width="1"/><line x1="633.0" y1="461.0" x2="633.0" y2="471.0" stroke="#2838ff" stroke-width="1"/><line x1="424.0" y1="536.6" x2="434.0" y2="536.6" stroke="#2838ff" stroke-width="1"/><line x1="429.0" y1="531.6" x2="429.0" y2="541.6" stroke="#2838ff" stroke-width="1"/><line x1="463.6" y1="608.7" x2="473.6" y2="608.7" stroke="#2838ff" stroke-width="1"/><line x1="468.6" y1="603.7" x2="468.6" y2="613.7" stroke="#2838ff" stroke-width="1"/><line x1="625.0" y1="612.0" x2="635.0" y2="612.0" stroke="#2838ff" stroke-width="1"/><line x1="630.0" y1="607.0" x2="630.0" y2="617.0" stroke="#2838ff" stroke-width="1"/><line x1="618.4" y1="553.7" x2="628.4" y2="553.7" stroke="#2838ff" stroke-width="1"/><line x1="623.4" y1="548.7" x2="623.4" y2="558.7" stroke="#2838ff" stroke-width="1"/><line x1="725.5" y1="447.0" x2="735.5" y2="447.0" stroke="#2838ff" stroke-width="1"/><line x1="730.5" y1="442.0" x2="730.5" y2="452.0" stroke="#2838ff" stroke-width="1"/><line x1="627.0" y1="466.0" x2="637.0" y2="466.0" stroke="#2838ff" stroke-width="1"/><line x1="632.0" y1="461.0" x2="632.0" y2="471.0" stroke="#2838ff" stroke-width="1"/><line x1="722.8" y1="518.0" x2="732.8" y2="518.0" stroke="#2838ff" stroke-width="1"/><line x1="727.8" y1="513.0" x2="727.8" y2="523.0" stroke="#2838ff" stroke-width="1"/><line x1="670.0" y1="541.7" x2="680.0" y2="541.7" stroke="#2838ff" stroke-width="1"/><line x1="675.0" y1="536.7" x2="675.0" y2="546.7" stroke="#2838ff" stroke-width="1"/><line x1="781.0" y1="494.4" x2="791.0" y2="494.4" stroke="#2838ff" stroke-width="1"/><line x1="786.0" y1="489.4" x2="786.0" y2="499.4" stroke="#2838ff" stroke-width="1"/><line x1="618.6" y1="554.0" x2="628.6" y2="554.0" stroke="#2838ff" stroke-width="1"/><line x1="623.6" y1="549.0" x2="623.6" y2="559.0" stroke="#2838ff" stroke-width="1"/><line x1="779.0" y1="522.0" x2="789.0" y2="522.0" stroke="#2838ff" stroke-width="1"/><line x1="784.0" y1="517.0" x2="784.0" y2="527.0" stroke="#2838ff" stroke-width="1"/><line x1="845.0" y1="542.0" x2="855.0" y2="542.0" stroke="#2838ff" stroke-width="1"/><line x1="850.0" y1="537.0" x2="850.0" y2="547.0" stroke="#2838ff" stroke-width="1"/><line x1="885.5" y1="456.6" x2="895.5" y2="456.6" stroke="#2838ff" stroke-width="1"/><line x1="890.5" y1="451.6" x2="890.5" y2="461.6" stroke="#2838ff" stroke-width="1"/><line x1="979.4" y1="451.0" x2="989.4" y2="451.0" stroke="#2838ff" stroke-width="1"/><line x1="984.4" y1="446.0" x2="984.4" y2="456.0" stroke="#2838ff" stroke-width="1"/><line x1="870.0" y1="528.0" x2="880.0" y2="528.0" stroke="#2838ff" stroke-width="1"/><line x1="875.0" y1="523.0" x2="875.0" y2="533.0" stroke="#2838ff" stroke-width="1"/><line x1="962.7" y1="528.8" x2="972.7" y2="528.8" stroke="#2838ff" stroke-width="1"/><line x1="967.7" y1="523.8" x2="967.7" y2="533.8" stroke="#2838ff" stroke-width="1"/><line x1="921.6" y1="553.0" x2="931.6" y2="553.0" stroke="#2838ff" stroke-width="1"/><line x1="926.6" y1="548.0" x2="926.6" y2="558.0" stroke="#2838ff" stroke-width="1"/><line x1="1059.4" y1="465.6" x2="1069.4" y2="465.6" stroke="#2838ff" stroke-width="1"/><line x1="1064.4" y1="460.6" x2="1064.4" y2="470.6" stroke="#2838ff" stroke-width="1"/><line x1="1055.5" y1="506.7" x2="1065.5" y2="506.7" stroke="#2838ff" stroke-width="1"/><line x1="1060.5" y1="501.7" x2="1060.5" y2="511.7" stroke="#2838ff" stroke-width="1"/><line x1="1056.7" y1="544.0" x2="1066.7" y2="544.0" stroke="#2838ff" stroke-width="1"/><line x1="1061.7" y1="539.0" x2="1061.7" y2="549.0" stroke="#2838ff" stroke-width="1"/><line x1="1034.7" y1="595.6" x2="1044.7" y2="595.6" stroke="#2838ff" stroke-width="1"/><line x1="1039.7" y1="590.6" x2="1039.7" y2="600.6" stroke="#2838ff" stroke-width="1"/><line x1="1152.8" y1="597.0" x2="1162.8" y2="597.0" stroke="#2838ff" stroke-width="1"/><line x1="1157.8" y1="592.0" x2="1157.8" y2="602.0" stroke="#2838ff" stroke-width="1"/><line x1="1174.0" y1="500.0" x2="1184.0" y2="500.0" stroke="#2838ff" stroke-width="1"/><line x1="1179.0" y1="495.0" x2="1179.0" y2="505.0" stroke="#2838ff" stroke-width="1"/><line x1="1276.0" y1="516.0" x2="1286.0" y2="516.0" stroke="#2838ff" stroke-width="1"/><line x1="1281.0" y1="511.0" x2="1281.0" y2="521.0" stroke="#2838ff" stroke-width="1"/><line x1="1273.0" y1="616.0" x2="1283.0" y2="616.0" stroke="#2838ff" stroke-width="1"/><line x1="1278.0" y1="611.0" x2="1278.0" y2="621.0" stroke="#2838ff" stroke-width="1"/><line x1="1070.0" y1="910.0" x2="1080.0" y2="910.0" stroke="#2838ff" stroke-width="1"/><line x1="1075.0" y1="905.0" x2="1075.0" y2="915.0" stroke="#2838ff" stroke-width="1"/><line x1="1087.0" y1="1056.0" x2="1097.0" y2="1056.0" stroke="#2838ff" stroke-width="1"/><line x1="1092.0" y1="1051.0" x2="1092.0" y2="1061.0" stroke="#2838ff" stroke-width="1"/><line x1="945.0" y1="652.0" x2="955.0" y2="652.0" stroke="#2838ff" stroke-width="1"/><line x1="950.0" y1="647.0" x2="950.0" y2="657.0" stroke="#2838ff" stroke-width="1"/><line x1="935.0" y1="670.0" x2="945.0" y2="670.0" stroke="#2838ff" stroke-width="1"/><line x1="940.0" y1="665.0" x2="940.0" y2="675.0" stroke="#2838ff" stroke-width="1"/><line x1="677.0" y1="377.7" x2="1166.0" y2="377.7" stroke="#40a8ff" stroke-width="1"/><line x1="677.0" y1="384.8" x2="1166.0" y2="384.8" stroke="#40a8ff" stroke-width="1"/><line x1="720.0" y1="382.0" x2="720.0" y2="388.0" stroke="#40a8ff" stroke-width="1"/><line x1="743.0" y1="382.0" x2="743.0" y2="388.0" stroke="#40a8ff" stroke-width="1"/><line x1="765.0" y1="382.0" x2="765.0" y2="388.0" stroke="#40a8ff" stroke-width="1"/><line x1="789.0" y1="382.0" x2="789.0" y2="388.0" stroke="#40a8ff" stroke-width="1"/><line x1="844.0" y1="382.0" x2="844.0" y2="388.0" stroke="#40a8ff" stroke-width="1"/><line x1="948.0" y1="382.0" x2="948.0" y2="388.0" stroke="#40a8ff" stroke-width="1"/><line x1="1007.0" y1="382.0" x2="1007.0" y2="388.0" stroke="#40a8ff" stroke-width="1"/><line x1="1045.0" y1="382.0" x2="1045.0" y2="388.0" stroke="#40a8ff" stroke-width="1"/><line x1="1065.0" y1="382.0" x2="1065.0" y2="388.0" stroke="#40a8ff" stroke-width="1"/><line x1="1155.0" y1="382.0" x2="1155.0" y2="388.0" stroke="#40a8ff" stroke-width="1"/><line x1="677.0" y1="378.0" x2="677.0" y2="400.0" stroke="#40a8ff" stroke-width="1"/><line x1="1166.0" y1="377.0" x2="1166.0" y2="400.0" stroke="#40a8ff" stroke-width="1"/><line x1="712.0" y1="395.0" x2="712.0" y2="419.0" stroke="#40a8ff" stroke-width="1"/><line x1="803.0" y1="395.0" x2="803.0" y2="419.0" stroke="#40a8ff" stroke-width="1"/><line x1="963.0" y1="395.0" x2="963.0" y2="419.0" stroke="#40a8ff" stroke-width="1"/><line x1="1038.0" y1="395.0" x2="1038.0" y2="419.0" stroke="#40a8ff" stroke-width="1"/><line x1="1080.0" y1="395.0" x2="1080.0" y2="419.0" stroke="#40a8ff" stroke-width="1"/><line x1="765.0" y1="417.0" x2="976.0" y2="417.0" stroke="#ff7400" stroke-width="2.5"/><rect x="839" y="413" width="8" height="8" fill="#608060" stroke="#ff7400"/><rect x="944" y="413" width="8" height="8" fill="#608060" stroke="#ff7400"/><rect x="1049" y="413" width="8" height="8" fill="#608060" stroke="#ff7400"/><line x1="685.0" y1="443.6" x2="1158.0" y2="443.6" stroke="#40a8ff" stroke-width="1"/><line x1="898.0" y1="454.5" x2="1168.6" y2="454.5" stroke="#ff7400" stroke-width="2.5"/><rect x="1129" y="450" width="7" height="7" fill="#800000" stroke="#d02020"/><polyline points="796.0,600.0 796.0,458.6 1402.0,458.6 1402.0,654.7 931.0,654.7" fill="none" stroke="#a0a0a0" stroke-width="1"/><line x1="1173.6" y1="412.0" x2="1173.6" y2="581.0" stroke="#40a8ff" stroke-width="1"/><line x1="1247.0" y1="427.5" x2="1247.0" y2="459.0" stroke="#40a8ff" stroke-width="1"/><line x1="1302.8" y1="427.5" x2="1302.8" y2="459.0" stroke="#40a8ff" stroke-width="1"/><line x1="947.5" y1="428.0" x2="947.5" y2="460.0" stroke="#40a8ff" stroke-width="1"/><path d="M948,425 q6,2 10,8" fill="none" stroke="#2838ff"/><line x1="682.0" y1="540.4" x2="1166.7" y2="540.4" stroke="#40a8ff" stroke-width="1"/><line x1="660.0" y1="591.0" x2="858.0" y2="591.0" stroke="#40a8ff" stroke-width="1"/><line x1="855.0" y1="608.6" x2="1166.0" y2="608.6" stroke="#40a8ff" stroke-width="1"/><line x1="855.0" y1="615.6" x2="1166.0" y2="615.6" stroke="#40a8ff" stroke-width="1"/><line x1="755.0" y1="420.0" x2="755.0" y2="535.0" stroke="#40a8ff" stroke-width="1"/><line x1="685.0" y1="472.7" x2="740.0" y2="472.7" stroke="#40a8ff" stroke-width="1"/><line x1="683.0" y1="506.5" x2="842.0" y2="506.5" stroke="#ff7400" stroke-width="1" stroke-dasharray="4 3"/><line x1="688.6" y1="389.4" x2="738.0" y2="574.0" stroke="#9a00b4" stroke-width="1" stroke-dasharray="5 2 1 2"/><line x1="847.0" y1="392.0" x2="910.0" y2="631.0" stroke="#9a00b4" stroke-width="1" stroke-dasharray="5 2 1 2"/><line x1="758.0" y1="600.0" x2="600.0" y2="720.0" stroke="#9a00b4" stroke-width="1" stroke-dasharray="5 2 1 2"/><line x1="917.6" y1="496.0" x2="917.6" y2="571.6" stroke="#ff7400" stroke-width="2.5"/><line x1="917.6" y1="558.0" x2="936.0" y2="558.0" stroke="#ff7400" stroke-width="2.5"/><path d="M918.0,540.0 A18,18 0 0 1 936.0,558.0" fill="none" stroke="#40a8ff" stroke-width="1"/><line x1="900.0" y1="518.0" x2="917.0" y2="518.0" stroke="#40a8ff" stroke-width="1"/><line x1="906.0" y1="551.0" x2="917.0" y2="551.0" stroke="#40a8ff" stroke-width="1"/><polyline points="941.0,471.0 941.0,494.0" fill="none" stroke="#ff7400" stroke-width="2.5"/><polyline points="958.0,471.0 958.0,494.0" fill="none" stroke="#ff7400" stroke-width="2.5"/><path d="M925.0,487.0 A16,16 0 0 1 941.0,471.0" fill="none" stroke="#40a8ff" stroke-width="1"/><path d="M958.0,471.0 A16,16 0 0 1 974.0,487.0" fill="none" stroke="#40a8ff" stroke-width="1"/><line x1="930.0" y1="487.0" x2="1025.0" y2="487.0" stroke="#40a8ff" stroke-width="1"/><line x1="1044.0" y1="491.0" x2="1044.0" y2="540.0" stroke="#40a8ff" stroke-width="1"/><path d="M1022,491 Q1048,500 1042,515 Q1048,532 1022,540" fill="none" stroke="#40a8ff"/><line x1="1021.0" y1="510.8" x2="1042.0" y2="510.8" stroke="#ff7400" stroke-width="2.5"/><line x1="1021.0" y1="519.2" x2="1042.0" y2="519.2" stroke="#ff7400" stroke-width="2.5"/><line x1="1011.0" y1="502.5" x2="1023.6" y2="502.5" stroke="#40a8ff" stroke-width="1"/><line x1="1011.0" y1="529.0" x2="1023.6" y2="529.0" stroke="#40a8ff" stroke-width="1"/><polyline points="1020.0,489.0 1024.0,489.0" fill="none" stroke="#ff7400" stroke-width="2"/><polyline points="1020.0,541.0 1024.0,541.0" fill="none" stroke="#ff7400" stroke-width="2"/><line x1="1123.6" y1="530.0" x2="1123.6" y2="555.0" stroke="#ff7400" stroke-width="2.5"/><path d="M1099.0,554.0 A25,25 0 0 1 1123.6,530.0" fill="none" stroke="#40a8ff" stroke-width="1"/><line x1="1145.8" y1="525.0" x2="1145.8" y2="552.0" stroke="#ff7400" stroke-width="2.5"/><line x1="1148.0" y1="525.0" x2="1148.0" y2="552.0" stroke="#ff7400" stroke-width="1"/><path d="M1145.8,525.0 A25,25 0 0 1 1170.0,552.0" fill="none" stroke="#40a8ff" stroke-width="1"/><line x1="1165.0" y1="548.0" x2="1172.0" y2="548.0" stroke="#ff7400" stroke-width="2"/><line x1="1065.0" y1="427.5" x2="1065.0" y2="459.0" stroke="#40a8ff" stroke-width="1"/><line x1="1151.4" y1="427.5" x2="1151.4" y2="459.0" stroke="#40a8ff" stroke-width="1"/><line x1="1070.8" y1="583.6" x2="1097.0" y2="583.6" stroke="#40a8ff" stroke-width="1"/><line x1="1112.5" y1="552.5" x2="1112.5" y2="567.8" stroke="#40a8ff" stroke-width="1"/><line x1="1158.0" y1="550.0" x2="1158.0" y2="566.0" stroke="#40a8ff" stroke-width="1"/><path d="M1157,414 h6 M1157,420 h6 M1160,414 v6" stroke="#20b030" fill="none"/><path d="M1157,444 h6 M1157,450 h6 M1160,444 v6" stroke="#20b030" fill="none"/><path d="M1157,491 h6 M1157,497 h6 M1160,491 v6" stroke="#20b030" fill="none"/><path d="M1157,537 h6 M1157,543 h6 M1160,537 v6" stroke="#20b030" fill="none"/><path d="M1049.6,573 h6 M1049.6,579 h6 M1052.6,573 v6" stroke="#20b030" fill="none"/><path d="M1102.5,573 h6 M1102.5,579 h6 M1105.5,573 v6" stroke="#20b030" fill="none"/><path d="M1157,573 h6 M1157,579 h6 M1160,573 v6" stroke="#20b030" fill="none"/><path d="M840,417 h6 M840,423 h6 M843,417 v6" stroke="#20b030" fill="none"/><path d="M945,417 h6 M945,423 h6 M948,417 v6" stroke="#20b030" fill="none"/><line x1="935.0" y1="587.0" x2="935.0" y2="605.0" stroke="#ff7400" stroke-width="2.5"/><line x1="965.5" y1="587.0" x2="965.5" y2="605.0" stroke="#ff7400" stroke-width="2.5"/><path d="M938,590 q10,2 12,16 M962,590 q-10,2 -12,16" fill="none" stroke="#40a8ff"/><line x1="950.0" y1="590.0" x2="950.0" y2="612.0" stroke="#40a8ff" stroke-width="1"/><line x1="887.8" y1="572.0" x2="887.8" y2="597.0" stroke="#40a8ff" stroke-width="1"/><line x1="932.7" y1="572.0" x2="932.7" y2="597.0" stroke="#40a8ff" stroke-width="1"/><line x1="998.0" y1="572.0" x2="998.0" y2="597.0" stroke="#40a8ff" stroke-width="1"/><line x1="876.7" y1="605.0" x2="876.7" y2="612.0" stroke="#40a8ff" stroke-width="1"/><line x1="897.5" y1="605.0" x2="897.5" y2="612.0" stroke="#40a8ff" stroke-width="1"/><line x1="919.7" y1="605.0" x2="919.7" y2="612.0" stroke="#40a8ff" stroke-width="1"/><line x1="1047.5" y1="605.0" x2="1047.5" y2="612.0" stroke="#40a8ff" stroke-width="1"/><rect x="994.5" y="451" width="6" height="6" fill="#600000" stroke="#d02020"/><rect x="945" y="586" width="6" height="6" fill="#608060" stroke="#ff7400"/><rect x="840" y="417" width="6" height="6" fill="#608060" stroke="#ff7400"/><polyline points="1226.0,551.0 1231.0,551.0" fill="none" stroke="#ff7400" stroke-width="2"/><polyline points="1226.0,612.0 1231.0,612.0" fill="none" stroke="#ff7400" stroke-width="2"/><path d="M1228,551 Q1262,560 1252,585 Q1262,608 1228,612" fill="none" stroke="#40a8ff"/><line x1="1230.0" y1="578.0" x2="1253.0" y2="578.0" stroke="#ff7400" stroke-width="2.5"/><line x1="1230.0" y1="586.0" x2="1253.0" y2="586.0" stroke="#ff7400" stroke-width="2.5"/><line x1="1214.0" y1="563.0" x2="1229.0" y2="563.0" stroke="#40a8ff" stroke-width="1"/><line x1="1214.0" y1="598.0" x2="1229.0" y2="598.0" stroke="#40a8ff" stroke-width="1"/><line x1="1094.0" y1="612.0" x2="1094.0" y2="636.0" stroke="#40a8ff" stroke-width="1"/><line x1="1094.0" y1="634.0" x2="1118.0" y2="634.0" stroke="#ff7400" stroke-width="2.5"/><path d="M1094.0,615.0 A22,22 0 0 1 1118.0,636.0" fill="none" stroke="#40a8ff" stroke-width="1"/><line x1="1071.0" y1="625.0" x2="1093.0" y2="625.0" stroke="#40a8ff" stroke-width="1"/><line x1="1071.0" y1="645.0" x2="1093.0" y2="645.0" stroke="#40a8ff" stroke-width="1"/><line x1="700.0" y1="520.0" x2="700.0" y2="540.0" stroke="#40a8ff" stroke-width="1"/><polyline points="742.0,545.6 785.7,545.6 785.7,571.6 742.0,571.6 742.0,545.6" fill="none" stroke="#20b030" stroke-width="2"/><polyline points="746.0,548.0 782.0,548.0 782.0,569.0 746.0,569.0" fill="none" stroke="#a0a0a0" stroke-width="1"/><line x1="745.0" y1="550.0" x2="785.0" y2="550.0" stroke="#40a8ff" stroke-width="1"/><line x1="770.0" y1="534.0" x2="772.7" y2="565.0" stroke="#ff7400" stroke-width="2"/><line x1="739.5" y1="534.0" x2="739.5" y2="565.0" stroke="#ff7400" stroke-width="2"/><line x1="739.5" y1="580.0" x2="861.7" y2="580.0" stroke="#a0a0a0" stroke-width="1"/><line x1="796.7" y1="601.0" x2="880.0" y2="601.0" stroke="#a0a0a0" stroke-width="1"/><line x1="796.7" y1="605.4" x2="864.0" y2="605.4" stroke="#a0a0a0" stroke-width="1"/><path d="M741.5,582 H818.8 Q826,590 824,602.8 H777 M741.5,582 L765,645 Q770,650 778.5,649.6 L831.8,636.6" fill="none" stroke="#ff7400" stroke-width="1.6"/><line x1="778.5" y1="582.0" x2="778.5" y2="606.0" stroke="#20b030" stroke-width="1"/><line x1="784.2" y1="582.0" x2="784.2" y2="606.0" stroke="#20b030" stroke-width="1"/><line x1="789.9" y1="582.0" x2="789.9" y2="606.0" stroke="#20b030" stroke-width="1"/><line x1="795.6" y1="582.0" x2="795.6" y2="606.0" stroke="#20b030" stroke-width="1"/><line x1="801.3" y1="582.0" x2="801.3" y2="606.0" stroke="#20b030" stroke-width="1"/><line x1="807.0" y1="582.0" x2="807.0" y2="606.0" stroke="#20b030" stroke-width="1"/><line x1="812.7" y1="582.0" x2="812.7" y2="606.0" stroke="#20b030" stroke-width="1"/><line x1="818.4" y1="582.0" x2="818.4" y2="606.0" stroke="#20b030" stroke-width="1"/><line x1="776.0" y1="593.0" x2="820.0" y2="593.0" stroke="#20b030" stroke-width="1"/><path d="M776,608 L832,596 L841,634 L790,647 Z" fill="none" stroke="#20b030" stroke-width="1"/><line x1="784.0" y1="606.5" x2="791.0" y2="645.5" stroke="#20b030" stroke-width="1"/><line x1="790.0" y1="605.2" x2="797.0" y2="644.2" stroke="#20b030" stroke-width="1"/><line x1="796.0" y1="603.9" x2="803.0" y2="642.9" stroke="#20b030" stroke-width="1"/><line x1="802.0" y1="602.6" x2="809.0" y2="641.6" stroke="#20b030" stroke-width="1"/><line x1="808.0" y1="601.3" x2="815.0" y2="640.3" stroke="#20b030" stroke-width="1"/><line x1="814.0" y1="600.0" x2="821.0" y2="639.0" stroke="#20b030" stroke-width="1"/><line x1="820.0" y1="598.7" x2="827.0" y2="637.7" stroke="#20b030" stroke-width="1"/><line x1="826.0" y1="597.4" x2="833.0" y2="636.4" stroke="#20b030" stroke-width="1"/><line x1="832.0" y1="596.1" x2="839.0" y2="635.1" stroke="#20b030" stroke-width="1"/><line x1="785.0" y1="626.0" x2="838.0" y2="614.0" stroke="#20b030" stroke-width="1"/><path d="M752,620 L776,614 M753,628 L778,622 M754,636 L779,630" fill="none" stroke="#20b030"/><line x1="741.5" y1="582.0" x2="765.5" y2="680.0" stroke="#ff7400" stroke-width="1.2"/><line x1="824.0" y1="581.0" x2="839.6" y2="635.3" stroke="#40a8ff" stroke-width="1"/><line x1="866.3" y1="605.4" x2="866.3" y2="638.0" stroke="#ff7400" stroke-width="2.5"/><line x1="844.8" y1="573.0" x2="844.8" y2="591.0" stroke="#40a8ff" stroke-width="1"/><path d="M777,637 v-10 h8" fill="none" stroke="#2838ff" stroke-width="1.3"/><polyline points="861.7,580.0 864.0,590.0 868.0,605.0" fill="none" stroke="#a0a0a0" stroke-width="1"/><polyline points="720.0,560.0 726.5,558.0 733.0,564.0 733.0,601.5 720.0,610.6" fill="none" stroke="#a0a0a0" stroke-width="1"/><line x1="600.0" y1="441.0" x2="673.6" y2="418.0" stroke="#40a8ff" stroke-width="1"/><line x1="605.6" y1="456.0" x2="678.5" y2="432.0" stroke="#ff7400" stroke-width="2.5"/><polyline points="602.8,464.6 682.6,436.8 682.6,534.0" fill="none" stroke="#a0a0a0" stroke-width="1"/><line x1="600.0" y1="441.7" x2="677.8" y2="501.0" stroke="#a0a0a0" stroke-width="1"/><line x1="632.6" y1="502.8" x2="647.0" y2="502.8" stroke="#ff7400" stroke-width="3"/><line x1="666.7" y1="502.8" x2="683.0" y2="502.8" stroke="#ff7400" stroke-width="3"/><line x1="645.8" y1="497.0" x2="683.0" y2="497.0" stroke="#40a8ff" stroke-width="1"/><path d="M647.0,497.0 A21,21 0 0 1 668.0,482.0" fill="none" stroke="#40a8ff" stroke-width="1"/><line x1="668.0" y1="482.0" x2="668.0" y2="497.0" stroke="#ff7400" stroke-width="2"/><path d="M618,444 Q612,430 626,408 M622,468 q-8,20 -4,44 M641,493 q-8,18 -2,40" fill="none" stroke="#40a8ff"/><line x1="605.0" y1="480.0" x2="625.0" y2="500.0" stroke="#40a8ff" stroke-width="1"/><line x1="640.0" y1="455.0" x2="650.0" y2="470.0" stroke="#40a8ff" stroke-width="1"/><line x1="718.0" y1="493.0" x2="761.0" y2="479.0" stroke="#ff7400" stroke-width="2.5"/><line x1="758.0" y1="461.0" x2="758.0" y2="479.0" stroke="#ff7400" stroke-width="2.5"/><path d="M739.0,480.0 A19,19 0 0 1 758.0,461.0" fill="none" stroke="#40a8ff" stroke-width="1"/><polyline points="690.0,516.7 791.7,480.5 791.7,533.0" fill="none" stroke="#a0a0a0" stroke-width="1"/><line x1="683.0" y1="526.0" x2="704.0" y2="526.0" stroke="#ff7400" stroke-width="2.5"/><path d="M685.0,508.0 A19,19 0 0 1 704.0,526.0" fill="none" stroke="#40a8ff" stroke-width="1"/><polyline points="682.0,531.0 789.0,531.0" fill="none" stroke="#a0a0a0" stroke-width="1"/><polyline points="682.0,534.0 789.0,534.0" fill="none" stroke="#a0a0a0" stroke-width="1"/><line x1="695.0" y1="478.0" x2="712.0" y2="508.0" stroke="#40a8ff" stroke-width="1"/><line x1="766.0" y1="455.0" x2="778.0" y2="486.0" stroke="#40a8ff" stroke-width="1"/><line x1="740.0" y1="485.0" x2="748.0" y2="505.0" stroke="#40a8ff" stroke-width="1"/><path d="M602,505 l4,-5 l4,5 M640,530 l5,-8 l5,8" fill="none" stroke="#ff7400" stroke-width="1.5"/><line x1="670.0" y1="506.0" x2="683.0" y2="520.0" stroke="#ff7400" stroke-width="2"/><line x1="951.8" y1="630.0" x2="1039.0" y2="948.4" stroke="#40a8ff" stroke-width="1"/><line x1="960.0" y1="628.0" x2="1043.4" y2="946.3" stroke="#40a8ff" stroke-width="1"/><line x1="750.0" y1="686.0" x2="825.0" y2="1004.6" stroke="#40a8ff" stroke-width="1"/><line x1="768.7" y1="690.3" x2="833.0" y2="1000.0" stroke="#40a8ff" stroke-width="1"/><polyline points="762.0,686.0 812.0,880.0" fill="none" stroke="#a0a0a0" stroke-width="1"/><polyline points="768.7,892.0 779.0,965.0 845.7,965.0" fill="none" stroke="#a0a0a0" stroke-width="1"/><line x1="835.0" y1="717.0" x2="902.0" y2="975.4" stroke="#40a8ff" stroke-width="1"/><line x1="904.0" y1="580.0" x2="999.7" y2="950.5" stroke="#9a00b4" stroke-width="1" stroke-dasharray="5 2 1 2"/><polyline points="891.5,796.4 958.0,1050.4 903.0,1063.7 910.6,1108.0" fill="none" stroke="#a0a0a0" stroke-width="1"/><line x1="762.4" y1="665.0" x2="837.0" y2="646.6" stroke="#40a8ff" stroke-width="1"/><line x1="770.8" y1="688.2" x2="929.0" y2="650.8" stroke="#40a8ff" stroke-width="1"/><line x1="779.0" y1="740.2" x2="931.0" y2="702.8" stroke="#40a8ff" stroke-width="1"/><line x1="802.0" y1="809.0" x2="954.0" y2="771.5" stroke="#40a8ff" stroke-width="1"/><line x1="847.8" y1="990.0" x2="1001.8" y2="948.4" stroke="#9a00b4" stroke-width="1" stroke-dasharray="3 2"/><line x1="849.8" y1="1023.3" x2="1014.0" y2="979.6" stroke="#40a8ff" stroke-width="1"/><line x1="852.0" y1="1033.7" x2="1014.0" y2="990.0" stroke="#40a8ff" stroke-width="1"/><polyline points="931.0,663.3 1022.6,663.3 1027.0,681.8 1047.8,750.4 1046.6,757.0 960.0,778.5" fill="none" stroke="#a0a0a0" stroke-width="1"/><line x1="1028.0" y1="681.0" x2="1038.0" y2="679.0" stroke="#ff7400" stroke-width="1.5"/><line x1="1046.0" y1="751.0" x2="1056.0" y2="748.0" stroke="#ff7400" stroke-width="1.5"/><line x1="1059.0" y1="726.8" x2="1068.0" y2="758.0" stroke="#40a8ff" stroke-width="1"/><line x1="1027.5" y1="749.0" x2="1031.0" y2="765.0" stroke="#40a8ff" stroke-width="1"/><line x1="1002.3" y1="654.7" x2="1002.3" y2="677.0" stroke="#40a8ff" stroke-width="1"/><line x1="1055.6" y1="652.5" x2="1055.6" y2="684.0" stroke="#40a8ff" stroke-width="1"/><line x1="1113.5" y1="652.5" x2="1113.5" y2="684.0" stroke="#40a8ff" stroke-width="1"/><line x1="1197.4" y1="652.5" x2="1197.4" y2="684.0" stroke="#40a8ff" stroke-width="1"/><line x1="939.0" y1="735.0" x2="964.0" y2="728.0" stroke="#40a8ff" stroke-width="1"/><line x1="975.0" y1="862.4" x2="997.8" y2="856.8" stroke="#40a8ff" stroke-width="1"/><line x1="988.7" y1="918.8" x2="1013.5" y2="912.0" stroke="#40a8ff" stroke-width="1"/><line x1="896.0" y1="894.0" x2="925.6" y2="885.0" stroke="#40a8ff" stroke-width="1"/><line x1="912.0" y1="918.0" x2="932.0" y2="913.0" stroke="#40a8ff" stroke-width="1"/><line x1="754.0" y1="946.0" x2="777.0" y2="946.0" stroke="#40a8ff" stroke-width="1"/><line x1="779.0" y1="984.0" x2="837.0" y2="984.0" stroke="#40a8ff" stroke-width="1"/><line x1="790.0" y1="952.0" x2="790.0" y2="964.0" stroke="#40a8ff" stroke-width="1"/><line x1="800.0" y1="977.0" x2="800.0" y2="989.0" stroke="#40a8ff" stroke-width="1"/><line x1="812.0" y1="992.0" x2="812.0" y2="1004.0" stroke="#40a8ff" stroke-width="1"/><line x1="780.0" y1="967.0" x2="780.0" y2="979.0" stroke="#40a8ff" stroke-width="1"/><line x1="1000.0" y1="700.0" x2="1020.0" y2="695.0" stroke="#40a8ff" stroke-width="1"/><line x1="960.0" y1="800.0" x2="990.0" y2="792.0" stroke="#40a8ff" stroke-width="1"/><line x1="870.0" y1="830.0" x2="900.0" y2="823.0" stroke="#40a8ff" stroke-width="1"/><path d="M1000,708 q-10,-12 -2,-26" fill="none" stroke="#40a8ff"/><circle cx="475.5" cy="669.0" r="7.5" fill="none" stroke="#9a00b4" stroke-width="1" stroke-dasharray="2 1"/><line x1="476.8" y1="661.1" x2="481.0" y2="636.4" stroke="#9a00b4" stroke-width="1" stroke-dasharray="5 2 1 2"/><circle cx="525.1" cy="681.5" r="7.5" fill="none" stroke="#9a00b4" stroke-width="1" stroke-dasharray="2 1"/><line x1="527.7" y1="673.9" x2="532.5" y2="659.7" stroke="#9a00b4" stroke-width="1" stroke-dasharray="5 2 1 2"/><circle cx="572.6" cy="702.1" r="7.5" fill="none" stroke="#9a00b4" stroke-width="1" stroke-dasharray="2 1"/><line x1="576.3" y1="695.0" x2="640.4" y2="575.1" stroke="#9a00b4" stroke-width="1" stroke-dasharray="5 2 1 2"/><circle cx="616.1" cy="730.1" r="7.5" fill="none" stroke="#9a00b4" stroke-width="1" stroke-dasharray="2 1"/><line x1="620.9" y1="723.7" x2="724.2" y2="588.7" stroke="#9a00b4" stroke-width="1" stroke-dasharray="5 2 1 2"/><circle cx="654.8" cy="765.1" r="7.5" fill="none" stroke="#9a00b4" stroke-width="1" stroke-dasharray="2 1"/><line x1="660.7" y1="759.7" x2="751.8" y2="674.1" stroke="#9a00b4" stroke-width="1" stroke-dasharray="5 2 1 2"/><circle cx="687.1" cy="805.6" r="7.5" fill="none" stroke="#9a00b4" stroke-width="1" stroke-dasharray="2 1"/><circle cx="712.6" cy="851.2" r="7.5" fill="none" stroke="#9a00b4" stroke-width="1" stroke-dasharray="2 1"/><circle cx="730.4" cy="900.9" r="7.5" fill="none" stroke="#9a00b4" stroke-width="1" stroke-dasharray="2 1"/><circle cx="969.7" cy="630.8" r="7.5" fill="none" stroke="#9a00b4" stroke-width="1" stroke-dasharray="2 1"/><circle cx="983.0" cy="682.0" r="7.5" fill="none" stroke="#9a00b4" stroke-width="1" stroke-dasharray="2 1"/><circle cx="996.4" cy="734.0" r="7.5" fill="none" stroke="#9a00b4" stroke-width="1" stroke-dasharray="2 1"/><circle cx="1010.0" cy="784.0" r="7.5" fill="none" stroke="#9a00b4" stroke-width="1" stroke-dasharray="2 1"/><circle cx="1023.8" cy="834.0" r="7.5" fill="none" stroke="#9a00b4" stroke-width="1" stroke-dasharray="2 1"/><circle cx="1037.0" cy="886.0" r="7.5" fill="none" stroke="#9a00b4" stroke-width="1" stroke-dasharray="2 1"/><circle cx="1051.0" cy="936.0" r="7.5" fill="none" stroke="#9a00b4" stroke-width="1" stroke-dasharray="2 1"/><line x1="693.7" y1="801.1" x2="962.7" y2="633.8" stroke="#9a00b4" stroke-width="1" stroke-dasharray="5 2 1 2"/><line x1="719.9" y1="847.9" x2="989.4" y2="737.0" stroke="#9a00b4" stroke-width="1" stroke-dasharray="5 2 1 2"/><line x1="738.2" y1="898.9" x2="1016.8" y2="837.0" stroke="#9a00b4" stroke-width="1" stroke-dasharray="5 2 1 2"/><line x1="774.6" y1="794.1" x2="976.0" y2="684.0" stroke="#9a00b4" stroke-width="1" stroke-dasharray="5 2 1 2"/><line x1="801.1" y1="854.9" x2="1003.0" y2="786.0" stroke="#9a00b4" stroke-width="1" stroke-dasharray="5 2 1 2"/><line x1="817.4" y1="920.8" x2="1030.0" y2="888.0" stroke="#9a00b4" stroke-width="1" stroke-dasharray="5 2 1 2"/><line x1="821.2" y1="953.4" x2="1044.0" y2="938.0" stroke="#9a00b4" stroke-width="1" stroke-dasharray="5 2 1 2"/><line x1="430.3" y1="981.5" x2="501.0" y2="962.0" stroke="#9a00b4" stroke-width="1" stroke-dasharray="5 2 1 2"/><circle cx="508.8" cy="960.0" r="7.5" fill="none" stroke="#9a00b4" stroke-width="1" stroke-dasharray="2 1"/><circle cx="422.8" cy="894.0" r="7.5" fill="none" stroke="#9a00b4" stroke-width="1" stroke-dasharray="2 1"/><circle cx="854.0" cy="1006.6" r="7.5" fill="none" stroke="#9a00b4" stroke-width="1" stroke-dasharray="2 1"/><circle cx="399.0" cy="664.0" r="7.5" fill="none" stroke="#9a00b4" stroke-width="1" stroke-dasharray="2 1"/><circle cx="422.0" cy="665.4" r="7.5" fill="none" stroke="#9a00b4" stroke-width="1" stroke-dasharray="2 1"/><circle cx="385.0" cy="613.0" r="7.5" fill="none" stroke="#9a00b4" stroke-width="1" stroke-dasharray="2 1"/><circle cx="412.7" cy="714.3" r="7.5" fill="none" stroke="#9a00b4" stroke-width="1" stroke-dasharray="2 1"/><circle cx="425.8" cy="765.6" r="7.5" fill="none" stroke="#9a00b4" stroke-width="1" stroke-dasharray="2 1"/><line x1="406.0" y1="662.0" x2="414.0" y2="660.0" stroke="#9a00b4" stroke-width="1" stroke-dasharray="3 2"/><line x1="429.0" y1="663.4" x2="436.0" y2="660.0" stroke="#9a00b4" stroke-width="1" stroke-dasharray="3 2"/><line x1="392.0" y1="611.0" x2="399.0" y2="610.0" stroke="#9a00b4" stroke-width="1" stroke-dasharray="3 2"/><line x1="419.7" y1="712.3" x2="436.0" y2="710.0" stroke="#9a00b4" stroke-width="1" stroke-dasharray="3 2"/><line x1="432.8" y1="763.6" x2="449.0" y2="761.0" stroke="#9a00b4" stroke-width="1" stroke-dasharray="3 2"/><circle cx="800.0" cy="691.0" r="5" fill="none" stroke="#20b030" stroke-width="1"/><circle cx="830.0" cy="680.0" r="5" fill="none" stroke="#20b030" stroke-width="1"/><circle cx="870.0" cy="672.0" r="5" fill="none" stroke="#20b030" stroke-width="1"/><polyline points="865.0,700.0 920.0,686.0 925.0,712.0 870.0,724.0" fill="none" stroke="#20b030" stroke-width="1.3"/><polyline points="775.0,712.0 790.0,708.0 792.0,724.0 777.0,728.0" fill="none" stroke="#20b030" stroke-width="1.3"/><rect x="924" y="830" width="16" height="16" fill="none" stroke="#20b030" stroke-width="1.3" transform="rotate(-15 932 838)"/><rect x="1062" y="795" width="22" height="14" fill="none" stroke="#20b030" stroke-width="1.3" transform="rotate(-15 1073 802)"/><line x1="776.7" y1="744.0" x2="788.0" y2="765.4" stroke="#ff7400" stroke-width="4"/><line x1="776.7" y1="744.0" x2="788.0" y2="765.4" stroke="#000" stroke-width="1.2"/><line x1="942.5" y1="740.6" x2="952.6" y2="754.0" stroke="#ff7400" stroke-width="4"/><line x1="942.5" y1="740.6" x2="952.6" y2="754.0" stroke="#000" stroke-width="1.2"/><line x1="969.6" y1="842.0" x2="979.7" y2="855.6" stroke="#ff7400" stroke-width="4"/><line x1="969.6" y1="842.0" x2="979.7" y2="855.6" stroke="#000" stroke-width="1.2"/><line x1="914.0" y1="873.7" x2="928.0" y2="900.8" stroke="#ff7400" stroke-width="4"/><line x1="914.0" y1="873.7" x2="928.0" y2="900.8" stroke="#000" stroke-width="1.2"/><line x1="792.5" y1="784.6" x2="808.0" y2="779.0" stroke="#ff7400" stroke-width="2.5"/><path d="M790.0,767.7 A20,20 0 0 1 808.0,779.0" fill="none" stroke="#40a8ff" stroke-width="1"/><line x1="928.0" y1="764.0" x2="928.0" y2="790.0" stroke="#ff7400" stroke-width="2.5"/><line x1="909.8" y1="803.8" x2="934.6" y2="790.0" stroke="#ff7400" stroke-width="2.5"/><path d="M928,764 Q955,768 962,785" fill="none" stroke="#40a8ff"/><path d="M909.8,803.8 Q915,816 936.9,816" fill="none" stroke="#40a8ff"/><line x1="830.8" y1="827.5" x2="850.0" y2="821.8" stroke="#ff7400" stroke-width="2.5"/><line x1="834.0" y1="838.7" x2="853.0" y2="835.0" stroke="#ff7400" stroke-width="2.5"/><path d="M826,807 Q850,805 852,822 M853,836 Q856,850 840,858" fill="none" stroke="#40a8ff"/><line x1="820.0" y1="815.0" x2="836.0" y2="812.0" stroke="#40a8ff" stroke-width="1"/><line x1="828.0" y1="848.0" x2="842.0" y2="845.0" stroke="#40a8ff" stroke-width="1"/><line x1="835.0" y1="914.0" x2="858.0" y2="911.0" stroke="#ff7400" stroke-width="2.5"/><path d="M835,911 Q838,895 851,891" fill="none" stroke="#40a8ff"/><line x1="852.0" y1="903.0" x2="866.0" y2="900.0" stroke="#40a8ff" stroke-width="1"/><line x1="932.0" y1="925.6" x2="955.0" y2="917.7" stroke="#ff7400" stroke-width="2.5"/><path d="M928,902 Q950,905 955,918" fill="none" stroke="#40a8ff"/><line x1="913.0" y1="918.0" x2="930.0" y2="914.0" stroke="#40a8ff" stroke-width="1"/><line x1="784.0" y1="709.0" x2="792.0" y2="709.0" stroke="#2838ff" stroke-width="1"/><line x1="788.0" y1="705.0" x2="788.0" y2="713.0" stroke="#2838ff" stroke-width="1"/><line x1="823.5" y1="759.8" x2="831.5" y2="759.8" stroke="#2838ff" stroke-width="1"/><line x1="827.5" y1="755.8" x2="827.5" y2="763.8" stroke="#2838ff" stroke-width="1"/><line x1="899.0" y1="773.3" x2="907.0" y2="773.3" stroke="#2838ff" stroke-width="1"/><line x1="903.0" y1="769.3" x2="903.0" y2="777.3" stroke="#2838ff" stroke-width="1"/><line x1="925.0" y1="827.5" x2="933.0" y2="827.5" stroke="#2838ff" stroke-width="1"/><line x1="929.0" y1="823.5" x2="929.0" y2="831.5" stroke="#2838ff" stroke-width="1"/><line x1="956.5" y1="820.7" x2="964.5" y2="820.7" stroke="#2838ff" stroke-width="1"/><line x1="960.5" y1="816.7" x2="960.5" y2="824.7" stroke="#2838ff" stroke-width="1"/><line x1="998.3" y1="805.0" x2="1006.3" y2="805.0" stroke="#2838ff" stroke-width="1"/><line x1="1002.3" y1="801.0" x2="1002.3" y2="809.0" stroke="#2838ff" stroke-width="1"/><line x1="974.6" y1="892.9" x2="982.6" y2="892.9" stroke="#2838ff" stroke-width="1"/><line x1="978.6" y1="888.9" x2="978.6" y2="896.9" stroke="#2838ff" stroke-width="1"/><line x1="811.0" y1="929.0" x2="819.0" y2="929.0" stroke="#2838ff" stroke-width="1"/><line x1="815.0" y1="925.0" x2="815.0" y2="933.0" stroke="#2838ff" stroke-width="1"/><line x1="911.4" y1="887.2" x2="919.4" y2="887.2" stroke="#2838ff" stroke-width="1"/><line x1="915.4" y1="883.2" x2="915.4" y2="891.2" stroke="#2838ff" stroke-width="1"/><path d="M776,748 q-8,10 -12,14 M790,851 q-8,10 -14,12" fill="none" stroke="#2838ff"/><line x1="786.0" y1="866.0" x2="792.0" y2="866.0" stroke="#40a8ff" stroke-width="1"/><line x1="872.0" y1="760.0" x2="878.0" y2="760.0" stroke="#40a8ff" stroke-width="1"/><line x1="955.0" y1="889.0" x2="961.0" y2="889.0" stroke="#40a8ff" stroke-width="1"/><line x1="977.0" y1="872.0" x2="983.0" y2="872.0" stroke="#40a8ff" stroke-width="1"/><polyline points="541.0,662.8 531.7,726.5 607.0,746.8 676.0,776.0 730.0,811.0" fill="none" stroke="#a0a0a0" stroke-width="1"/><path d="M478.0,631.5 C496.7,636.9 554.8,645.6 590.0,664.0 C625.2,682.4 665.7,720.7 689.0,742.0 C712.3,763.3 713.8,771.9 730.0,791.6 C746.2,811.3 769.3,838.6 786.0,860.0 C802.7,881.4 815.2,899.2 830.0,920.0 C844.8,940.8 862.5,961.0 875.0,985.0 C887.5,1009.0 899.1,1043.5 905.0,1064.0 C910.9,1084.5 909.7,1100.7 910.6,1108.0" fill="none" stroke="#a0a0a0" stroke-width="1"/><path d="M478.0,626.0 C495.0,630.3 544.7,636.0 580.0,652.0 C615.3,668.0 660.0,697.3 690.0,722.0 C720.0,746.7 738.3,769.5 760.0,800.0 C781.7,830.5 805.0,873.3 820.0,905.0 C835.0,936.7 845.0,975.8 850.0,990.0" fill="none" stroke="#9a00b4" stroke-width="1" stroke-dasharray="4 2"/><line x1="610.5" y1="675.3" x2="422.3" y2="983.5" stroke="#40a8ff" stroke-width="1"/><line x1="422.8" y1="902.0" x2="422.3" y2="983.5" stroke="#9a00b4" stroke-width="1" stroke-dasharray="5 2 1 2"/><line x1="500.0" y1="962.0" x2="422.3" y2="983.5" stroke="#9a00b4" stroke-width="1" stroke-dasharray="3 2"/><line x1="414.0" y1="983.5" x2="430.0" y2="983.5" stroke="#40a8ff" stroke-width="1"/><line x1="1120.6" y1="861.0" x2="1152.5" y2="853.8" stroke="#40a8ff" stroke-width="1"/><line x1="1143.0" y1="943.8" x2="1175.0" y2="935.5" stroke="#40a8ff" stroke-width="1"/><line x1="1163.8" y1="1026.0" x2="1196.8" y2="1017.6" stroke="#40a8ff" stroke-width="1"/><line x1="1182.5" y1="1097.5" x2="1215.5" y2="1088.0" stroke="#40a8ff" stroke-width="1"/><rect x="1127" y="874" width="6" height="6" fill="#800000" stroke="#d02020"/><rect x="1163" y="1004" width="6" height="6" fill="#800000" stroke="#d02020"/><rect x="1129" y="656" width="6" height="6" fill="#800000" stroke="#d02020"/><line x1="982.0" y1="979.0" x2="1006.0" y2="970.0" stroke="#ff7400" stroke-width="2.5"/><path d="M1000,955 Q1018,960 1014,985 Q1010,1005 993,1017" fill="none" stroke="#40a8ff"/><line x1="980.0" y1="1006.0" x2="995.0" y2="1002.0" stroke="#40a8ff" stroke-width="1"/><line x1="985.0" y1="994.0" x2="998.0" y2="990.0" stroke="#ff7400" stroke-width="2"/><line x1="989.0" y1="1092.0" x2="1015.6" y2="1086.0" stroke="#ff7400" stroke-width="2.5"/><path d="M989,1090 Q986,1068 1006,1062" fill="none" stroke="#40a8ff"/><line x1="1010.0" y1="1071.0" x2="1025.0" y2="1070.0" stroke="#40a8ff" stroke-width="1"/></g></svg>
<div class="a" style="left:1428px;top:276px;width:1px;height:851px;background:#fff;"></div>
<div class="a" style="left:1430px;top:280px;width:1px;height:847px;background:#808080;"></div>
<div class="a" style="left:1593px;top:280px;width:1px;height:847px;background:#fff;"></div>
<div class="a" style="left:1432px;top:280px;width:161px;height:14px;background:#0a246a;"></div>
<div class="t" style="left:1434px;top:282px;font-size:10.5px;color:#fff;font-weight:bold;letter-spacing:0px">Навигатор - Карта про...</div>
<svg class="a" style="left:1567px;top:285px;" width="9" height="5" viewBox="0 0 9 5" shape-rendering="crispEdges"><path d="M0 0H9L4.5 5Z" fill="#fff"/></svg>
<svg class="a" style="left:1582px;top:283px;" width="9" height="8" viewBox="0 0 9 8" shape-rendering="crispEdges"><path d="M1 1L8 7M8 1L1 7" stroke="#fff" stroke-width="1.8"/></svg>
<div class="a" style="left:1432px;top:298px;width:32px;height:24px;background:#d4d0c8;"></div>
<div class="a" style="left:1432px;top:298px;width:32px;height:1px;background:#fff;"></div>
<div class="a" style="left:1432px;top:298px;width:1px;height:24px;background:#fff;"></div>
<div class="a" style="left:1432px;top:321px;width:32px;height:1px;background:#404040;"></div>
<div class="a" style="left:1463px;top:298px;width:1px;height:24px;background:#404040;"></div>
<div class="a" style="left:1433px;top:320px;width:30px;height:1px;background:#808080;"></div>
<div class="a" style="left:1462px;top:299px;width:1px;height:22px;background:#808080;"></div>
<svg class="a" style="left:1435px;top:302px;" width="26" height="16" viewBox="0 0 26 16" shape-rendering="crispEdges"><path d="M0.5 0.5H8L11 3.5V14.5H0.5Z" fill="#fff" stroke="#0000a0"/><rect x="2" y="6" width="4" height="6" fill="#d0d0d0"/><path d="M5 6H12V3L17 8L12 13V10H5Z" fill="#a8d0f0" stroke="#0000a0"/><path d="M21 9V15L24 12Z" fill="#000"/></svg>
<div class="a" style="left:1471px;top:298px;width:31px;height:24px;background:repeating-conic-gradient(#fff 0% 25%, #d4d0c8 0% 50%) 0 0/2px 2px;"></div>
<div class="a" style="left:1471px;top:298px;width:31px;height:1px;background:#404040;"></div>
<div class="a" style="left:1471px;top:298px;width:1px;height:24px;background:#404040;"></div>
<div class="a" style="left:1471px;top:321px;width:31px;height:1px;background:#fff;"></div>
<div class="a" style="left:1501px;top:298px;width:1px;height:24px;background:#fff;"></div>
<div class="a" style="left:1502px;top:298px;width:31px;height:24px;background:#d4d0c8;"></div>
<div class="a" style="left:1502px;top:298px;width:31px;height:1px;background:#fff;"></div>
<div class="a" style="left:1502px;top:298px;width:1px;height:24px;background:#fff;"></div>
<div class="a" style="left:1502px;top:321px;width:31px;height:1px;background:#404040;"></div>
<div class="a" style="left:1532px;top:298px;width:1px;height:24px;background:#404040;"></div>
<div class="a" style="left:1503px;top:320px;width:29px;height:1px;background:#808080;"></div>
<div class="a" style="left:1531px;top:299px;width:1px;height:22px;background:#808080;"></div>
<div class="a" style="left:1533px;top:298px;width:31px;height:24px;background:#d4d0c8;"></div>
<div class="a" style="left:1533px;top:298px;width:31px;height:1px;background:#fff;"></div>
<div class="a" style="left:1533px;top:298px;width:1px;height:24px;background:#fff;"></div>
<div class="a" style="left:1533px;top:321px;width:31px;height:1px;background:#404040;"></div>
<div class="a" style="left:1563px;top:298px;width:1px;height:24px;background:#404040;"></div>
<div class="a" style="left:1534px;top:320px;width:29px;height:1px;background:#808080;"></div>
<div class="a" style="left:1562px;top:299px;width:1px;height:22px;background:#808080;"></div>
<div class="a" style="left:1564px;top:298px;width:29px;height:24px;background:#d4d0c8;"></div>
<div class="a" style="left:1564px;top:298px;width:29px;height:1px;background:#fff;"></div>
<div class="a" style="left:1564px;top:298px;width:1px;height:24px;background:#fff;"></div>
<div class="a" style="left:1564px;top:321px;width:29px;height:1px;background:#404040;"></div>
<div class="a" style="left:1592px;top:298px;width:1px;height:24px;background:#404040;"></div>
<div class="a" style="left:1565px;top:320px;width:27px;height:1px;background:#808080;"></div>
<div class="a" style="left:1591px;top:299px;width:1px;height:22px;background:#808080;"></div>
<svg class="a" style="left:1479px;top:303px;" width="15" height="14" viewBox="0 0 15 14" shape-rendering="crispEdges"><path d="M1 6L6 1L14 5V13H1Z" fill="#f8d870" stroke="#000"/><path d="M5 6L10 2L14 6V13H5Z" fill="#f09050" stroke="#000"/><path d="M3 3L10 1L14 5" fill="none" stroke="#806020"/></svg>
<svg class="a" style="left:1510px;top:303px;" width="15" height="13" viewBox="0 0 15 13" shape-rendering="crispEdges"><rect x="0.5" y="0.5" width="6" height="12" fill="#f8e090" stroke="#000"/><rect x="6.5" y="5.5" width="8" height="7" fill="#f09050" stroke="#000"/><rect x="7" y="6" width="7" height="2" fill="#60a0e0"/></svg>
<svg class="a" style="left:1541px;top:303px;" width="15" height="12" viewBox="0 0 15 12" shape-rendering="crispEdges"><rect x="0.5" y="0.5" width="14" height="11" fill="#fffce0" stroke="#000" stroke-width="1.2"/><path d="M9 4H13M9 6H13M9 8H13" stroke="#000"/><path d="M9 3V11" stroke="#000"/></svg>
<svg class="a" style="left:1572px;top:302px;" width="13" height="14" viewBox="0 0 13 14" shape-rendering="crispEdges"><rect x="0.5" y="0.5" width="8" height="9" fill="#fff" stroke="#0000c0" stroke-width="1.2"/><rect x="3.5" y="3.5" width="8" height="9" fill="none" stroke="#0000c0" stroke-width="1.2"/></svg>
<div class="a" style="left:1432px;top:324px;width:161px;height:1px;background:#808080;"></div>
<div class="a" style="left:1432px;top:324px;width:1px;height:587px;background:#808080;"></div>
<div class="a" style="left:1433px;top:325px;width:159px;height:1px;background:#404040;"></div>
<div class="a" style="left:1433px;top:325px;width:1px;height:585px;background:#404040;"></div>
<div class="a" style="left:1434px;top:326px;width:144px;height:569px;background:#fff;"></div>
<div class="a" style="left:1578px;top:326px;width:14px;height:569px;background:repeating-conic-gradient(#fff 0% 25%, #d4d0c8 0% 50%) 0 0/2px 2px;"></div>
<div class="a" style="left:1578px;top:326px;width:14px;height:16px;background:#d4d0c8;"></div>
<div class="a" style="left:1578px;top:326px;width:14px;height:1px;background:#fff;"></div>
<div class="a" style="left:1578px;top:326px;width:1px;height:16px;background:#fff;"></div>
<div class="a" style="left:1578px;top:341px;width:14px;height:1px;background:#404040;"></div>
<div class="a" style="left:1591px;top:326px;width:1px;height:16px;background:#404040;"></div>
<div class="a" style="left:1579px;top:340px;width:12px;height:1px;background:#808080;"></div>
<div class="a" style="left:1590px;top:327px;width:1px;height:14px;background:#808080;"></div>
<svg class="a" style="left:1581px;top:331px;" width="7" height="4" viewBox="0 0 7 4" shape-rendering="crispEdges"><path d="M0 4H7L3.5 0Z" fill="#000"/></svg>
<div class="a" style="left:1578px;top:342px;width:14px;height:424px;background:#d4d0c8;"></div>
<div class="a" style="left:1578px;top:342px;width:14px;height:1px;background:#fff;"></div>
<div class="a" style="left:1578px;top:342px;width:1px;height:424px;background:#fff;"></div>
<div class="a" style="left:1578px;top:765px;width:14px;height:1px;background:#404040;"></div>
<div class="a" style="left:1591px;top:342px;width:1px;height:424px;background:#404040;"></div>
<div class="a" style="left:1579px;top:764px;width:12px;height:1px;background:#808080;"></div>
<div class="a" style="left:1590px;top:343px;width:1px;height:422px;background:#808080;"></div>
<div class="a" style="left:1578px;top:880px;width:14px;height:15px;background:#d4d0c8;"></div>
<div class="a" style="left:1578px;top:880px;width:14px;height:1px;background:#fff;"></div>
<div class="a" style="left:1578px;top:880px;width:1px;height:15px;background:#fff;"></div>
<div class="a" style="left:1578px;top:894px;width:14px;height:1px;background:#404040;"></div>
<div class="a" style="left:1591px;top:880px;width:1px;height:15px;background:#404040;"></div>
<div class="a" style="left:1579px;top:893px;width:12px;height:1px;background:#808080;"></div>
<div class="a" style="left:1590px;top:881px;width:1px;height:13px;background:#808080;"></div>
<svg class="a" style="left:1581px;top:886px;" width="7" height="4" viewBox="0 0 7 4" shape-rendering="crispEdges"><path d="M0 0H7L3.5 4Z" fill="#000"/></svg>
<div class="a" style="left:1434px;top:895px;width:143px;height:16px;background:repeating-conic-gradient(#fff 0% 25%, #d4d0c8 0% 50%) 0 0/2px 2px;"></div>
<div class="a" style="left:1434px;top:895px;width:15px;height:16px;background:#d4d0c8;"></div>
<div class="a" style="left:1434px;top:895px;width:15px;height:1px;background:#fff;"></div>
<div class="a" style="left:1434px;top:895px;width:1px;height:16px;background:#fff;"></div>
<div class="a" style="left:1434px;top:910px;width:15px;height:1px;background:#404040;"></div>
<div class="a" style="left:1448px;top:895px;width:1px;height:16px;background:#404040;"></div>
<div class="a" style="left:1435px;top:909px;width:13px;height:1px;background:#808080;"></div>
<div class="a" style="left:1447px;top:896px;width:1px;height:14px;background:#808080;"></div>
<svg class="a" style="left:1439px;top:899px;" width="5" height="8" viewBox="0 0 5 8" shape-rendering="crispEdges"><path d="M5 0V8L0 4Z" fill="#000"/></svg>
<div class="a" style="left:1450px;top:895px;width:74px;height:16px;background:#d4d0c8;"></div>
<div class="a" style="left:1450px;top:895px;width:74px;height:1px;background:#fff;"></div>
<div class="a" style="left:1450px;top:895px;width:1px;height:16px;background:#fff;"></div>
<div class="a" style="left:1450px;top:910px;width:74px;height:1px;background:#404040;"></div>
<div class="a" style="left:1523px;top:895px;width:1px;height:16px;background:#404040;"></div>
<div class="a" style="left:1451px;top:909px;width:72px;height:1px;background:#808080;"></div>
<div class="a" style="left:1522px;top:896px;width:1px;height:14px;background:#808080;"></div>
<div class="a" style="left:1562px;top:895px;width:15px;height:16px;background:#d4d0c8;"></div>
<div class="a" style="left:1562px;top:895px;width:15px;height:1px;background:#fff;"></div>
<div class="a" style="left:1562px;top:895px;width:1px;height:16px;background:#fff;"></div>
<div class="a" style="left:1562px;top:910px;width:15px;height:1px;background:#404040;"></div>
<div class="a" style="left:1576px;top:895px;width:1px;height:16px;background:#404040;"></div>
<div class="a" style="left:1563px;top:909px;width:13px;height:1px;background:#808080;"></div>
<div class="a" style="left:1575px;top:896px;width:1px;height:14px;background:#808080;"></div>
<svg class="a" style="left:1567px;top:899px;" width="5" height="8" viewBox="0 0 5 8" shape-rendering="crispEdges"><path d="M0 0V8L5 4Z" fill="#000"/></svg>
<div class="a" style="left:1577px;top:895px;width:15px;height:16px;background:#d4d0c8;"></div>
<div class="a" style="left:1432px;top:911px;width:161px;height:1px;background:#fff;"></div>
<div class="a" style="left:1434px;top:326px;width:144px;height:569px;overflow:hidden">
<div class="a" style="left:9px;top:14px;width:1px;height:555px;background:repeating-linear-gradient(#808080 0 1px,transparent 1px 2px)"></div>
<div class="a" style="left:28px;top:29px;width:1px;height:540px;background:repeating-linear-gradient(#808080 0 1px,transparent 1px 2px)"></div>
<div class="a" style="left:47px;top:29px;width:1px;height:76px;background:repeating-linear-gradient(#808080 0 1px,transparent 1px 2px)"></div>
<div class="a" style="left:47px;top:125px;width:1px;height:124px;background:repeating-linear-gradient(#808080 0 1px,transparent 1px 2px)"></div>
<div class="a" style="left:47px;top:317px;width:1px;height:204px;background:repeating-linear-gradient(#808080 0 1px,transparent 1px 2px)"></div>
<div class="a" style="left:47px;top:541px;width:1px;height:28px;background:repeating-linear-gradient(#808080 0 1px,transparent 1px 2px)"></div>
<div class="a" style="left:14px;top:9px;width:5px;height:1px;background:repeating-linear-gradient(90deg,#808080 0 1px,transparent 1px 2px)"></div>
<svg class="a" style="left:5px;top:5px;" width="9" height="9" viewBox="0 0 9 9" shape-rendering="crispEdges"><rect x="0.5" y="0.5" width="8" height="8" fill="#fff" stroke="#909090"/><path d="M2 4.5H7" stroke="#000"/></svg>
<svg class="a" style="left:19px;top:2px;" width="15" height="15" viewBox="0 0 15 15"><path d="M1 6L6 1L14 5V13H1Z" fill="#f8d870" stroke="#000"/><path d="M5 6L10 2L14 6V13H5Z" fill="#f09050" stroke="#000"/><path d="M3 3L10 1L14 5" fill="none" stroke="#806020"/></svg>
<div class="t" style="left:35px;top:3px;font-size:11px;color:#000;">Orchard Project</div>
<div class="a" style="left:29px;top:25px;width:9px;height:1px;background:repeating-linear-gradient(90deg,#808080 0 1px,transparent 1px 2px)"></div>
<svg class="a" style="left:24px;top:21px;" width="9" height="9" viewBox="0 0 9 9" shape-rendering="crispEdges"><rect x="0.5" y="0.5" width="8" height="8" fill="#fff" stroke="#909090"/><path d="M2 4.5H7" stroke="#000"/></svg>
<svg class="a" style="left:38px;top:18px;" width="15" height="15" viewBox="0 0 15 15"><rect x="0.5" y="0.5" width="14" height="12" fill="#fff" stroke="#0000a0" stroke-width="1.3"/><path d="M3.5 3.5H6.5V6.5H11.5V9.5H3.5Z" fill="#c0c0c0" stroke="#000"/></svg>
<div class="t" style="left:54px;top:19px;font-size:11px;color:#000;">Этажи</div>
<div class="a" style="left:48px;top:41px;width:9px;height:1px;background:repeating-linear-gradient(90deg,#808080 0 1px,transparent 1px 2px)"></div>
<svg class="a" style="left:57px;top:34px;" width="15" height="15" viewBox="0 0 15 15"><path d="M0.5 1.5H5.5V5.5H14.5V12.5H0.5Z" fill="#f09050" stroke="#000"/><path d="M2 2V4" stroke="#806040"/></svg>
<div class="t" style="left:73px;top:35px;font-size:11px;color:#000;">4. Roof</div>
<div class="a" style="left:48px;top:57px;width:9px;height:1px;background:repeating-linear-gradient(90deg,#808080 0 1px,transparent 1px 2px)"></div>
<svg class="a" style="left:57px;top:50px;" width="15" height="15" viewBox="0 0 15 15"><path d="M0.5 1.5H5.5V5.5H14.5V12.5H0.5Z" fill="#f09050" stroke="#000"/><path d="M2 2V4" stroke="#806040"/></svg>
<div class="t" style="left:73px;top:51px;font-size:11px;color:#000;">3. Second Floor</div>
<div class="a" style="left:48px;top:73px;width:9px;height:1px;background:repeating-linear-gradient(90deg,#808080 0 1px,transparent 1px 2px)"></div>
<svg class="a" style="left:57px;top:66px;" width="15" height="15" viewBox="0 0 15 15"><path d="M0.5 1.5H5.5V5.5H14.5V12.5H0.5Z" fill="#f09050" stroke="#000"/><path d="M2 2V4" stroke="#806040"/></svg>
<div class="t" style="left:73px;top:67px;font-size:11px;color:#000;">2. First Floor</div>
<div class="a" style="left:48px;top:89px;width:9px;height:1px;background:repeating-linear-gradient(90deg,#808080 0 1px,transparent 1px 2px)"></div>
<svg class="a" style="left:57px;top:82px;" width="15" height="15" viewBox="0 0 15 15"><path d="M0.5 1.5H5.5V5.5H14.5V12.5H0.5Z" fill="#f09050" stroke="#000"/><path d="M2 2V4" stroke="#806040"/></svg>
<div class="t" style="left:72px;top:83px;font-size:11px;color:#000;font-weight:bold;outline:1px dotted #000;outline-offset:0px;padding:0 1px">1. Ground Floor</div>
<div class="a" style="left:48px;top:105px;width:9px;height:1px;background:repeating-linear-gradient(90deg,#808080 0 1px,transparent 1px 2px)"></div>
<svg class="a" style="left:57px;top:98px;" width="15" height="15" viewBox="0 0 15 15"><path d="M0.5 1.5H5.5V5.5H14.5V12.5H0.5Z" fill="#f09050" stroke="#000"/><path d="M2 2V4" stroke="#806040"/></svg>
<div class="t" style="left:73px;top:99px;font-size:11px;color:#000;">-1. Foundation</div>
<div class="a" style="left:29px;top:121px;width:9px;height:1px;background:repeating-linear-gradient(90deg,#808080 0 1px,transparent 1px 2px)"></div>
<svg class="a" style="left:24px;top:117px;" width="9" height="9" viewBox="0 0 9 9" shape-rendering="crispEdges"><rect x="0.5" y="0.5" width="8" height="8" fill="#fff" stroke="#909090"/><path d="M2 4.5H7" stroke="#000"/></svg>
<svg class="a" style="left:38px;top:114px;" width="15" height="15" viewBox="0 0 15 15"><rect x="0.5" y="0.5" width="14" height="12" fill="#fff" stroke="#0000a0" stroke-width="1.3"/><path d="M4.5 10.5V6.5L7.5 3.5L10.5 6.5V10.5Z" fill="#fff" stroke="#000"/></svg>
<div class="t" style="left:54px;top:115px;font-size:11px;color:#000;">Разрезы</div>
<div class="a" style="left:48px;top:137px;width:9px;height:1px;background:repeating-linear-gradient(90deg,#808080 0 1px,transparent 1px 2px)"></div>
<svg class="a" style="left:57px;top:130px;" width="15" height="15" viewBox="0 0 15 15"><path d="M1 6L7.5 1L14 6V13H1Z" fill="#d8a860" stroke="#604020"/><rect x="3.5" y="6.5" width="8" height="5" fill="#fff" stroke="#604020"/></svg>
<div class="t" style="left:73px;top:131px;font-size:11px;color:#000;">A Section (Чертеж)</div>
<div class="a" style="left:48px;top:153px;width:9px;height:1px;background:repeating-linear-gradient(90deg,#808080 0 1px,transparent 1px 2px)"></div>
<svg class="a" style="left:57px;top:146px;" width="15" height="15" viewBox="0 0 15 15"><path d="M1 6L7.5 1L14 6V13H1Z" fill="#d8a860" stroke="#604020"/><rect x="3.5" y="6.5" width="8" height="5" fill="#fff" stroke="#604020"/></svg>
<div class="t" style="left:73px;top:147px;font-size:11px;color:#000;">B Section (Чертеж)</div>
<div class="a" style="left:48px;top:169px;width:9px;height:1px;background:repeating-linear-gradient(90deg,#808080 0 1px,transparent 1px 2px)"></div>
<svg class="a" style="left:57px;top:162px;" width="15" height="15" viewBox="0 0 15 15"><path d="M1 6L7.5 1L14 6V13H1Z" fill="#d8a860" stroke="#604020"/><rect x="3.5" y="6.5" width="8" height="5" fill="#fff" stroke="#604020"/></svg>
<div class="t" style="left:73px;top:163px;font-size:11px;color:#000;">C Section (Чертеж)</div>
<div class="a" style="left:48px;top:185px;width:9px;height:1px;background:repeating-linear-gradient(90deg,#808080 0 1px,transparent 1px 2px)"></div>
<svg class="a" style="left:57px;top:178px;" width="15" height="15" viewBox="0 0 15 15"><path d="M1 6L7.5 1L14 6V13H1Z" fill="#d8a860" stroke="#604020"/><rect x="3.5" y="6.5" width="8" height="5" fill="#fff" stroke="#604020"/></svg>
<div class="t" style="left:73px;top:179px;font-size:11px;color:#000;">D Section (Чертеж)</div>
<div class="a" style="left:48px;top:201px;width:9px;height:1px;background:repeating-linear-gradient(90deg,#808080 0 1px,transparent 1px 2px)"></div>
<svg class="a" style="left:57px;top:194px;" width="15" height="15" viewBox="0 0 15 15"><path d="M1 6L7.5 1L14 6V13H1Z" fill="#d8a860" stroke="#604020"/><rect x="3.5" y="6.5" width="8" height="5" fill="#fff" stroke="#604020"/></svg>
<div class="t" style="left:73px;top:195px;font-size:11px;color:#000;">E1 Elevation N</div>
<div class="a" style="left:48px;top:217px;width:9px;height:1px;background:repeating-linear-gradient(90deg,#808080 0 1px,transparent 1px 2px)"></div>
<svg class="a" style="left:57px;top:210px;" width="15" height="15" viewBox="0 0 15 15"><path d="M1 6L7.5 1L14 6V13H1Z" fill="#d8a860" stroke="#604020"/><rect x="3.5" y="6.5" width="8" height="5" fill="#fff" stroke="#604020"/></svg>
<div class="t" style="left:73px;top:211px;font-size:11px;color:#000;">E2 Elevation E</div>
<div class="a" style="left:48px;top:233px;width:9px;height:1px;background:repeating-linear-gradient(90deg,#808080 0 1px,transparent 1px 2px)"></div>
<svg class="a" style="left:57px;top:226px;" width="15" height="15" viewBox="0 0 15 15"><path d="M1 6L7.5 1L14 6V13H1Z" fill="#d8a860" stroke="#604020"/><rect x="3.5" y="6.5" width="8" height="5" fill="#fff" stroke="#604020"/></svg>
<div class="t" style="left:73px;top:227px;font-size:11px;color:#000;">E3 Elevation S</div>
<div class="a" style="left:48px;top:249px;width:9px;height:1px;background:repeating-linear-gradient(90deg,#808080 0 1px,transparent 1px 2px)"></div>
<svg class="a" style="left:57px;top:242px;" width="15" height="15" viewBox="0 0 15 15"><path d="M1 6L7.5 1L14 6V13H1Z" fill="#d8a860" stroke="#604020"/><rect x="3.5" y="6.5" width="8" height="5" fill="#fff" stroke="#604020"/></svg>
<div class="t" style="left:73px;top:243px;font-size:11px;color:#000;">E4 Elevation W</div>
<div class="a" style="left:29px;top:265px;width:9px;height:1px;background:repeating-linear-gradient(90deg,#808080 0 1px,transparent 1px 2px)"></div>
<svg class="a" style="left:38px;top:258px;" width="15" height="15" viewBox="0 0 15 15"><rect x="0.5" y="0.5" width="14" height="12" fill="#fff" stroke="#0000a0" stroke-width="1.3"/><path d="M4.5 10.5V6.5L7.5 3.5L10.5 6.5V10.5Z" fill="#c0c0c0" stroke="#000"/></svg>
<div class="t" style="left:54px;top:259px;font-size:11px;color:#000;">Фасады</div>
<div class="a" style="left:29px;top:281px;width:9px;height:1px;background:repeating-linear-gradient(90deg,#808080 0 1px,transparent 1px 2px)"></div>
<svg class="a" style="left:38px;top:274px;" width="15" height="15" viewBox="0 0 15 15"><rect x="0.5" y="0.5" width="14" height="12" fill="#fff" stroke="#0000a0" stroke-width="1.3"/><rect x="3.5" y="4.5" width="8" height="5" fill="none" stroke="#000" stroke-width="1.3"/><path d="M7.5 4V10" stroke="#000"/></svg>
<div class="t" style="left:54px;top:275px;font-size:11px;color:#000;">Внутренние виды</div>
<div class="a" style="left:29px;top:297px;width:9px;height:1px;background:repeating-linear-gradient(90deg,#808080 0 1px,transparent 1px 2px)"></div>
<svg class="a" style="left:38px;top:290px;" width="15" height="15" viewBox="0 0 15 15"><rect x="0.5" y="0.5" width="14" height="12" fill="#fff" stroke="#0000a0" stroke-width="1.3"/><path d="M3 10L7 3L8 4L4 10M7 10H13" stroke="#000" fill="none"/></svg>
<div class="t" style="left:54px;top:291px;font-size:11px;color:#000;">Рабочие листы</div>
<div class="a" style="left:29px;top:313px;width:9px;height:1px;background:repeating-linear-gradient(90deg,#808080 0 1px,transparent 1px 2px)"></div>
<svg class="a" style="left:24px;top:309px;" width="9" height="9" viewBox="0 0 9 9" shape-rendering="crispEdges"><rect x="0.5" y="0.5" width="8" height="8" fill="#fff" stroke="#909090"/><path d="M2 4.5H7" stroke="#000"/></svg>
<svg class="a" style="left:38px;top:306px;" width="15" height="15" viewBox="0 0 15 15"><rect x="0.5" y="0.5" width="14" height="12" fill="#fff" stroke="#0000a0" stroke-width="1.3"/><path d="M4.5 8.5H7.5V4.5H10.5V9.5H4.5Z" fill="none" stroke="#000" stroke-width="1.2"/></svg>
<div class="t" style="left:54px;top:307px;font-size:11px;color:#000;">Детали</div>
<div class="a" style="left:48px;top:329px;width:9px;height:1px;background:repeating-linear-gradient(90deg,#808080 0 1px,transparent 1px 2px)"></div>
<svg class="a" style="left:57px;top:322px;" width="15" height="15" viewBox="0 0 15 15"><rect x="0.5" y="0.5" width="14" height="14" fill="#fff" stroke="#a0a0a0"/><path d="M3 10L11 1M5 12L13 3" stroke="#f09050" stroke-width="2"/><path d="M2 10L4 13L6 9" stroke="#000" fill="none"/><rect x="8" y="10" width="6" height="4" fill="#f09050"/><rect x="10" y="8" width="2" height="2" fill="#000"/></svg>
<div class="t" style="left:73px;top:323px;font-size:11px;color:#000;">101 (Чертеж)</div>
<div class="a" style="left:48px;top:345px;width:9px;height:1px;background:repeating-linear-gradient(90deg,#808080 0 1px,transparent 1px 2px)"></div>
<svg class="a" style="left:57px;top:338px;" width="15" height="15" viewBox="0 0 15 15"><rect x="0.5" y="0.5" width="14" height="14" fill="#fff" stroke="#a0a0a0"/><path d="M3 10L11 1M5 12L13 3" stroke="#f09050" stroke-width="2"/><path d="M2 10L4 13L6 9" stroke="#000" fill="none"/><rect x="8" y="10" width="6" height="4" fill="#f09050"/><rect x="10" y="8" width="2" height="2" fill="#000"/></svg>
<div class="t" style="left:73px;top:339px;font-size:11px;color:#000;">102 (Чертеж)</div>
<div class="a" style="left:48px;top:361px;width:9px;height:1px;background:repeating-linear-gradient(90deg,#808080 0 1px,transparent 1px 2px)"></div>
<svg class="a" style="left:57px;top:354px;" width="15" height="15" viewBox="0 0 15 15"><rect x="0.5" y="0.5" width="14" height="14" fill="#fff" stroke="#a0a0a0"/><path d="M3 10L11 1M5 12L13 3" stroke="#f09050" stroke-width="2"/><path d="M2 10L4 13L6 9" stroke="#000" fill="none"/><rect x="8" y="10" width="6" height="4" fill="#f09050"/><rect x="10" y="8" width="2" height="2" fill="#000"/></svg>
<div class="t" style="left:73px;top:355px;font-size:11px;color:#000;">103 (Чертеж)</div>
<div class="a" style="left:48px;top:377px;width:9px;height:1px;background:repeating-linear-gradient(90deg,#808080 0 1px,transparent 1px 2px)"></div>
<svg class="a" style="left:57px;top:370px;" width="15" height="15" viewBox="0 0 15 15"><rect x="0.5" y="0.5" width="14" height="14" fill="#fff" stroke="#a0a0a0"/><path d="M3 10L11 1M5 12L13 3" stroke="#f09050" stroke-width="2"/><path d="M2 10L4 13L6 9" stroke="#000" fill="none"/><rect x="8" y="10" width="6" height="4" fill="#f09050"/><rect x="10" y="8" width="2" height="2" fill="#000"/></svg>
<div class="t" style="left:73px;top:371px;font-size:11px;color:#000;">104 (Чертеж)</div>
<div class="a" style="left:48px;top:393px;width:9px;height:1px;background:repeating-linear-gradient(90deg,#808080 0 1px,transparent 1px 2px)"></div>
<svg class="a" style="left:57px;top:386px;" width="15" height="15" viewBox="0 0 15 15"><rect x="0.5" y="0.5" width="14" height="14" fill="#fff" stroke="#a0a0a0"/><path d="M3 10L11 1M5 12L13 3" stroke="#f09050" stroke-width="2"/><path d="M2 10L4 13L6 9" stroke="#000" fill="none"/><rect x="8" y="10" width="6" height="4" fill="#f09050"/><rect x="10" y="8" width="2" height="2" fill="#000"/></svg>
<div class="t" style="left:73px;top:387px;font-size:11px;color:#000;">105 (Чертеж)</div>
<div class="a" style="left:48px;top:409px;width:9px;height:1px;background:repeating-linear-gradient(90deg,#808080 0 1px,transparent 1px 2px)"></div>
<svg class="a" style="left:57px;top:402px;" width="15" height="15" viewBox="0 0 15 15"><rect x="0.5" y="0.5" width="14" height="14" fill="#fff" stroke="#a0a0a0"/><path d="M3 10L11 1M5 12L13 3" stroke="#f09050" stroke-width="2"/><path d="M2 10L4 13L6 9" stroke="#000" fill="none"/><rect x="8" y="10" width="6" height="4" fill="#f09050"/><rect x="10" y="8" width="2" height="2" fill="#000"/></svg>
<div class="t" style="left:73px;top:403px;font-size:11px;color:#000;">106 (Чертеж)</div>
<div class="a" style="left:48px;top:425px;width:9px;height:1px;background:repeating-linear-gradient(90deg,#808080 0 1px,transparent 1px 2px)"></div>
<svg class="a" style="left:57px;top:418px;" width="15" height="15" viewBox="0 0 15 15"><rect x="0.5" y="0.5" width="14" height="14" fill="#fff" stroke="#a0a0a0"/><path d="M3 10L11 1M5 12L13 3" stroke="#f09050" stroke-width="2"/><path d="M2 10L4 13L6 9" stroke="#000" fill="none"/><rect x="8" y="10" width="6" height="4" fill="#f09050"/><rect x="10" y="8" width="2" height="2" fill="#000"/></svg>
<div class="t" style="left:73px;top:419px;font-size:11px;color:#000;">107 (Чертеж)</div>
<div class="a" style="left:48px;top:441px;width:9px;height:1px;background:repeating-linear-gradient(90deg,#808080 0 1px,transparent 1px 2px)"></div>
<svg class="a" style="left:57px;top:434px;" width="15" height="15" viewBox="0 0 15 15"><rect x="0.5" y="0.5" width="14" height="14" fill="#fff" stroke="#a0a0a0"/><path d="M3 10L11 1M5 12L13 3" stroke="#f09050" stroke-width="2"/><path d="M2 10L4 13L6 9" stroke="#000" fill="none"/><rect x="8" y="10" width="6" height="4" fill="#f09050"/><rect x="10" y="8" width="2" height="2" fill="#000"/></svg>
<div class="t" style="left:73px;top:435px;font-size:11px;color:#000;">108 (Чертеж)</div>
<div class="a" style="left:48px;top:457px;width:9px;height:1px;background:repeating-linear-gradient(90deg,#808080 0 1px,transparent 1px 2px)"></div>
<svg class="a" style="left:57px;top:450px;" width="15" height="15" viewBox="0 0 15 15"><rect x="0.5" y="0.5" width="14" height="14" fill="#fff" stroke="#a0a0a0"/><path d="M3 10L11 1M5 12L13 3" stroke="#f09050" stroke-width="2"/><path d="M2 10L4 13L6 9" stroke="#000" fill="none"/><rect x="8" y="10" width="6" height="4" fill="#f09050"/><rect x="10" y="8" width="2" height="2" fill="#000"/></svg>
<div class="t" style="left:73px;top:451px;font-size:11px;color:#000;">109 (Чертеж)</div>
<div class="a" style="left:48px;top:473px;width:9px;height:1px;background:repeating-linear-gradient(90deg,#808080 0 1px,transparent 1px 2px)"></div>
<svg class="a" style="left:57px;top:466px;" width="15" height="15" viewBox="0 0 15 15"><rect x="0.5" y="0.5" width="14" height="14" fill="#fff" stroke="#a0a0a0"/><path d="M3 10L11 1M5 12L13 3" stroke="#f09050" stroke-width="2"/><path d="M2 10L4 13L6 9" stroke="#000" fill="none"/><rect x="8" y="10" width="6" height="4" fill="#f09050"/><rect x="10" y="8" width="2" height="2" fill="#000"/></svg>
<div class="t" style="left:73px;top:467px;font-size:11px;color:#000;">110 (Чертеж)</div>
<div class="a" style="left:48px;top:489px;width:9px;height:1px;background:repeating-linear-gradient(90deg,#808080 0 1px,transparent 1px 2px)"></div>
<svg class="a" style="left:57px;top:482px;" width="15" height="15" viewBox="0 0 15 15"><rect x="0.5" y="0.5" width="14" height="14" fill="#fff" stroke="#a0a0a0"/><path d="M3 10L11 1M5 12L13 3" stroke="#f09050" stroke-width="2"/><path d="M2 10L4 13L6 9" stroke="#000" fill="none"/><rect x="8" y="10" width="6" height="4" fill="#f09050"/><rect x="10" y="8" width="2" height="2" fill="#000"/></svg>
<div class="t" style="left:73px;top:483px;font-size:11px;color:#000;">111 (Чертеж)</div>
<div class="a" style="left:48px;top:505px;width:9px;height:1px;background:repeating-linear-gradient(90deg,#808080 0 1px,transparent 1px 2px)"></div>
<svg class="a" style="left:57px;top:498px;" width="15" height="15" viewBox="0 0 15 15"><rect x="0.5" y="0.5" width="14" height="14" fill="#fff" stroke="#a0a0a0"/><path d="M3 10L11 1M5 12L13 3" stroke="#f09050" stroke-width="2"/><path d="M2 10L4 13L6 9" stroke="#000" fill="none"/><rect x="8" y="10" width="6" height="4" fill="#f09050"/><rect x="10" y="8" width="2" height="2" fill="#000"/></svg>
<div class="t" style="left:73px;top:499px;font-size:11px;color:#000;">112 (Чертеж)</div>
<div class="a" style="left:48px;top:521px;width:9px;height:1px;background:repeating-linear-gradient(90deg,#808080 0 1px,transparent 1px 2px)"></div>
<svg class="a" style="left:57px;top:514px;" width="15" height="15" viewBox="0 0 15 15"><rect x="0.5" y="0.5" width="14" height="14" fill="#fff" stroke="#a0a0a0"/><path d="M3 10L11 1M5 12L13 3" stroke="#f09050" stroke-width="2"/><path d="M2 10L4 13L6 9" stroke="#000" fill="none"/><rect x="8" y="10" width="6" height="4" fill="#f09050"/><rect x="10" y="8" width="2" height="2" fill="#000"/></svg>
<div class="t" style="left:73px;top:515px;font-size:11px;color:#000;">113 (Чертеж)</div>
<div class="a" style="left:29px;top:537px;width:9px;height:1px;background:repeating-linear-gradient(90deg,#808080 0 1px,transparent 1px 2px)"></div>
<svg class="a" style="left:24px;top:533px;" width="9" height="9" viewBox="0 0 9 9" shape-rendering="crispEdges"><rect x="0.5" y="0.5" width="8" height="8" fill="#fff" stroke="#909090"/><path d="M2 4.5H7" stroke="#000"/></svg>
<svg class="a" style="left:38px;top:530px;" width="15" height="15" viewBox="0 0 15 15"><rect x="0.5" y="0.5" width="14" height="12" fill="#fff" stroke="#0000a0" stroke-width="1.3"/><path d="M4 5L7.5 3L11 5V9L7.5 11L4 9Z" fill="#000"/><path d="M5 5H8V8" stroke="#fff" fill="none"/></svg>
<div class="t" style="left:54px;top:531px;font-size:11px;color:#000;">3D</div>
<div class="a" style="left:48px;top:553px;width:9px;height:1px;background:repeating-linear-gradient(90deg,#808080 0 1px,transparent 1px 2px)"></div>
<svg class="a" style="left:57px;top:546px;" width="15" height="15" viewBox="0 0 15 15"><rect x="1" y="1" width="9" height="6" fill="#f09050" stroke="#000"/><path d="M10 3L14 1V7L10 5Z" fill="#000"/><path d="M5 7L2 13M5 7L8 13M5 7V12" stroke="#000"/></svg>
<div class="t" style="left:73px;top:547px;font-size:11px;color:#000;">Общая перспектива</div>
<div class="a" style="left:48px;top:569px;width:9px;height:1px;background:repeating-linear-gradient(90deg,#808080 0 1px,transparent 1px 2px)"></div>
<svg class="a" style="left:57px;top:562px;" width="15" height="15" viewBox="0 0 15 15"><path d="M1 4L7 1L13 4V12L7 15L1 12Z" fill="#f09050" stroke="#000"/><path d="M1 4L7 7L13 4M7 7V15" stroke="#000" fill="none"/></svg>
<div class="t" style="left:73px;top:563px;font-size:11px;color:#000;">Общая аксонометрия</div>
</div>
<div class="a" style="left:1549px;top:919px;width:23px;height:23px;background:#d4d0c8;"></div>
<div class="a" style="left:1549px;top:919px;width:23px;height:1px;background:#fff;"></div>
<div class="a" style="left:1549px;top:919px;width:1px;height:23px;background:#fff;"></div>
<div class="a" style="left:1549px;top:941px;width:23px;height:1px;background:#404040;"></div>
<div class="a" style="left:1571px;top:919px;width:1px;height:23px;background:#404040;"></div>
<div class="a" style="left:1550px;top:940px;width:21px;height:1px;background:#808080;"></div>
<div class="a" style="left:1570px;top:920px;width:1px;height:21px;background:#808080;"></div>
<svg class="a" style="left:1553px;top:923px;" width="16" height="15" viewBox="0 0 16 15" shape-rendering="crispEdges"><rect x="1" y="4" width="11" height="10" fill="#f09050" stroke="#0000a0" stroke-width="1.3"/><path d="M12 0V7M8.5 3.5H15.5M10 1.5L14 5.5M14 1.5L10 5.5" stroke="#e8e800" stroke-width="1.2"/></svg>
<div class="a" style="left:1572px;top:919px;width:21px;height:23px;background:#d4d0c8;"></div>
<div class="a" style="left:1572px;top:919px;width:21px;height:1px;background:#fff;"></div>
<div class="a" style="left:1572px;top:919px;width:1px;height:23px;background:#fff;"></div>
<div class="a" style="left:1572px;top:941px;width:21px;height:1px;background:#404040;"></div>
<div class="a" style="left:1592px;top:919px;width:1px;height:23px;background:#404040;"></div>
<div class="a" style="left:1573px;top:940px;width:19px;height:1px;background:#808080;"></div>
<div class="a" style="left:1591px;top:920px;width:1px;height:21px;background:#808080;"></div>
<svg class="a" style="left:1575px;top:923px;" width="15" height="14" viewBox="0 0 15 14" shape-rendering="crispEdges"><path d="M1 1L13 12M12 1L2 12" stroke="#e00000" stroke-width="2.2"/><path d="M13 13L14 14" stroke="#e00000"/></svg>
<div class="a" style="left:1432px;top:947px;width:161px;height:19px;background:#e9e8e3;border-radius:9px"></div>
<svg class="a" style="left:1445px;top:954px;" width="10" height="6" viewBox="0 0 10 6" shape-rendering="crispEdges"><path d="M0 0H10L5 6Z" fill="#000"/></svg>
<div class="t" style="left:1463px;top:951px;font-size:11px;color:#000;">Спецификации</div>
<svg class="a" style="left:1433px;top:975px;" width="10" height="9" viewBox="0 0 10 9" shape-rendering="crispEdges"><path d="M0.5 0.5H4.5V3.5H9.5V8.5H0.5Z" fill="#f09050" stroke="#000"/></svg>
<div class="a" style="left:1446px;top:971px;width:33px;height:17px;background:#d4d0c8;"></div>
<div class="a" style="left:1446px;top:971px;width:33px;height:1px;background:#808080;"></div>
<div class="a" style="left:1446px;top:971px;width:1px;height:17px;background:#808080;"></div>
<div class="a" style="left:1446px;top:987px;width:33px;height:1px;background:#fff;"></div>
<div class="a" style="left:1478px;top:971px;width:1px;height:17px;background:#fff;"></div>
<div class="t" style="left:1448px;top:976px;font-size:11px;color:#000;">1.</div>
<div class="a" style="left:1481px;top:969px;width:112px;height:17px;background:#fff;"></div>
<div class="a" style="left:1481px;top:969px;width:112px;height:1px;background:#404040;"></div>
<div class="a" style="left:1481px;top:969px;width:1px;height:17px;background:#404040;"></div>
<div class="a" style="left:1482px;top:970px;width:111px;height:1px;background:#808080;"></div>
<div class="a" style="left:1481px;top:985px;width:112px;height:1px;background:#d4d0c8;"></div>
<div class="t" style="left:1486px;top:973px;font-size:11px;color:#000;">Ground Floor</div>
<div class="a" style="left:1446px;top:991px;width:136px;height:23px;background:#d4d0c8;"></div>
<div class="a" style="left:1446px;top:991px;width:136px;height:1px;background:#fff;"></div>
<div class="a" style="left:1446px;top:991px;width:1px;height:23px;background:#fff;"></div>
<div class="a" style="left:1446px;top:1013px;width:136px;height:1px;background:#404040;"></div>
<div class="a" style="left:1581px;top:991px;width:1px;height:23px;background:#404040;"></div>
<div class="a" style="left:1447px;top:1012px;width:134px;height:1px;background:#808080;"></div>
<div class="a" style="left:1580px;top:992px;width:1px;height:21px;background:#808080;"></div>
<div class="t" style="left:1482px;top:997px;font-size:11px;color:#000;">Параметры...</div>
<div class="a" style="left:1432px;top:1044px;width:161px;height:1px;background:#808080;"></div>
<div class="a" style="left:1432px;top:1045px;width:161px;height:1px;background:#fff;"></div>
<div class="a" style="left:1432px;top:1049px;width:161px;height:14px;background:#0a246a;"></div>
<div class="t" style="left:1434px;top:1051px;font-size:10.3px;color:#fff;font-weight:bold;">Оперативные параметры</div>
<svg class="a" style="left:1568px;top:1054px;" width="9" height="5" viewBox="0 0 9 5" shape-rendering="crispEdges"><path d="M0 0H9L4.5 5Z" fill="#fff"/></svg>
<svg class="a" style="left:1582px;top:1052px;" width="9" height="8" viewBox="0 0 9 8" shape-rendering="crispEdges"><path d="M1 1L8 7M8 1L1 7" stroke="#fff" stroke-width="1.8"/></svg>
<div class="a" style="left:1446px;top:1068px;width:147px;height:17px;background:#d4d0c8;"></div>
<div class="a" style="left:1446px;top:1068px;width:147px;height:1px;background:#fff;"></div>
<div class="a" style="left:1446px;top:1068px;width:1px;height:17px;background:#fff;"></div>
<div class="a" style="left:1446px;top:1084px;width:147px;height:2px;background:#404040;"></div>
<div class="t" style="left:1454px;top:1071px;font-size:11px;color:#000;">Proposed Detail</div>
<svg class="a" style="left:1585px;top:1072px;" width="5" height="9" viewBox="0 0 5 9" shape-rendering="crispEdges"><path d="M0 0V9L5 4.5Z" fill="#000"/></svg>
<div class="a" style="left:1446px;top:1086px;width:147px;height:17px;background:#d4d0c8;"></div>
<div class="a" style="left:1446px;top:1086px;width:147px;height:1px;background:#fff;"></div>
<div class="a" style="left:1446px;top:1086px;width:1px;height:17px;background:#fff;"></div>
<div class="a" style="left:1446px;top:1102px;width:147px;height:2px;background:#404040;"></div>
<div class="t" style="left:1452px;top:1089px;font-size:11px;color:#000;">1:50</div>
<svg class="a" style="left:1585px;top:1090px;" width="5" height="9" viewBox="0 0 5 9" shape-rendering="crispEdges"><path d="M0 0V9L5 4.5Z" fill="#000"/></svg>
<div class="a" style="left:1446px;top:1104px;width:147px;height:17px;background:#d4d0c8;"></div>
<div class="a" style="left:1446px;top:1104px;width:147px;height:1px;background:#fff;"></div>
<div class="a" style="left:1446px;top:1104px;width:1px;height:17px;background:#fff;"></div>
<div class="a" style="left:1446px;top:1120px;width:147px;height:2px;background:#404040;"></div>
<div class="t" style="left:1452px;top:1107px;font-size:11px;color:#000;">Construction</div>
<svg class="a" style="left:1585px;top:1108px;" width="5" height="9" viewBox="0 0 5 9" shape-rendering="crispEdges"><path d="M0 0V9L5 4.5Z" fill="#000"/></svg>
<svg class="a" style="left:1434px;top:1072px;" width="9" height="9" viewBox="0 0 9 9" shape-rendering="crispEdges"><path d="M1 2H8M1 4.5H8M1 7H8" stroke="#000" stroke-width="1.2"/><path d="M7 1L2 8" stroke="#000"/></svg>
<svg class="a" style="left:1434px;top:1091px;" width="9" height="6" viewBox="0 0 9 6" shape-rendering="crispEdges"><rect x="0.5" y="0.5" width="8" height="5" fill="#fff" stroke="#000" stroke-width="1.3"/><path d="M3 1V3M5 1V3" stroke="#000"/></svg>
<svg class="a" style="left:1434px;top:1107px;" width="9" height="9" viewBox="0 0 9 9" shape-rendering="crispEdges"><rect x="0.5" y="0.5" width="8" height="8" fill="none" stroke="#000" stroke-width="1.2"/><rect x="2.5" y="2.5" width="4" height="4" fill="none" stroke="#000"/></svg>
<div class="a" style="left:1428px;top:1126px;width:166px;height:1px;background:#fff;"></div>
<div class="a" style="left:1594px;top:654px;width:6px;height:226px;background:#101418;"></div>
<div class="a" style="left:1595px;top:680px;width:5px;height:20px;background:#2060a0;"></div>
<div class="a" style="left:1595px;top:705px;width:5px;height:30px;background:#40c080;"></div>
<div class="a" style="left:1595px;top:760px;width:5px;height:3px;background:#30a0e0;"></div>
<div class="a" style="left:1595px;top:820px;width:5px;height:4px;background:#c02020;"></div>
<div class="a" style="left:1595px;top:860px;width:5px;height:20px;background:#202830;"></div>
<div class="a" style="left:1594px;top:880px;width:6px;height:24px;background:#2070d0;"></div>
<div class="a" style="left:1px;top:1128px;width:1593px;height:22px;background:#d4d0c8;"></div>
<div class="a" style="left:0px;top:1127px;width:1594px;height:1px;background:#909090;"></div>
<div class="t" style="left:3px;top:1136px;font-size:11px;color:#000;">Щелкните элемент или начертите область выбора.</div>
<svg class="a" style="left:1378px;top:1133px;" width="17" height="10" viewBox="0 0 17 10" shape-rendering="crispEdges"><rect x="0.5" y="1.5" width="15" height="7" rx="2" fill="#d0d0d0" stroke="#404040"/><rect x="2" y="3" width="12" height="2" fill="#fff"/></svg>
<div class="t" style="left:1401px;top:1135px;font-size:11px;color:#000;">C: 4.73 ГБ</div>
<svg class="a" style="left:1479px;top:1132px;" width="13" height="13" viewBox="0 0 13 13" shape-rendering="crispEdges"><rect x="1.5" y="1.5" width="10" height="10" fill="#c0c0c0" stroke="#303030"/><path d="M0 4H1M0 8H1M12 4H13M12 8H13M4 0V1M8 0V1M4 12V13M8 12V13" stroke="#303030"/></svg>
<div class="t" style="left:1501px;top:1135px;font-size:11px;color:#000;">1.09 ГБ</div>
</body></html>
